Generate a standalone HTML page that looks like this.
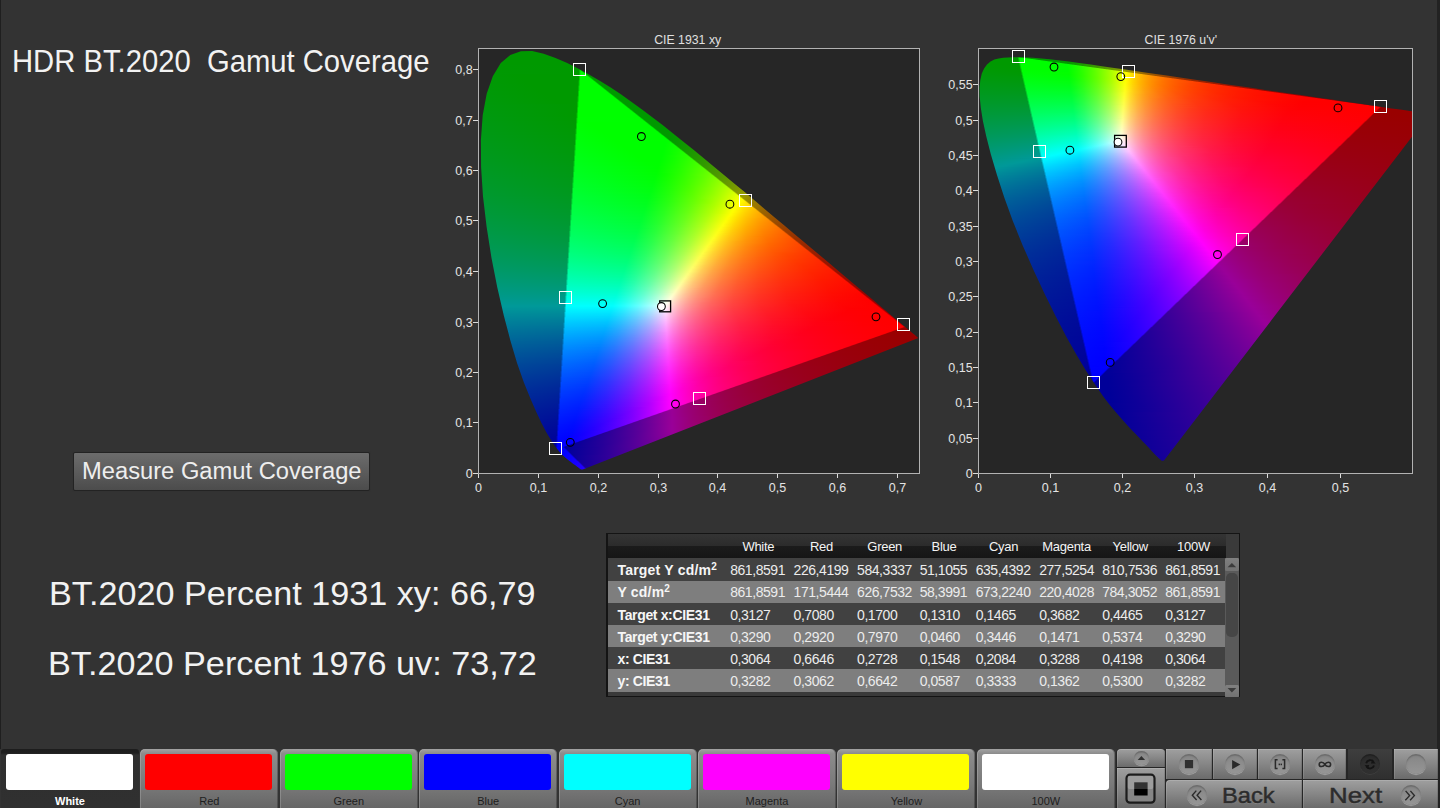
<!DOCTYPE html>
<html lang="en"><head><meta charset="utf-8"><title>HDR BT.2020 Gamut Coverage</title>
<style>
*{box-sizing:border-box;margin:0;padding:0}
html,body{width:1440px;height:808px;overflow:hidden;background:#333}
body{position:relative;font-family:"Liberation Sans",sans-serif;color:#f0f0f0}
.abs{position:absolute;white-space:nowrap}
.big{position:absolute;white-space:nowrap;color:#f2f2f2;transform-origin:0 0;line-height:1}
.plot{position:absolute;background:#262626;overflow:hidden;box-sizing:content-box;border:1px solid #b2b2b2}
.gm{position:absolute;left:0;top:0;width:100%;height:100%}
.gm i{display:block;height:1px}
svg.ov{position:absolute;left:0;top:0;width:1440px;height:808px;pointer-events:none}
svg.ov rect{fill:#dcdcdc}
svg.ov text{font-family:"Liberation Sans",sans-serif;font-size:12.5px;fill:#e4e4e4}
svg.ov text.tt{font-size:12.3px;fill:#e0e0e0}
svg.ov rect.ms{fill:none;stroke:#fff;stroke-width:1}
svg.ov rect.mk{fill:none;stroke:#000;stroke-width:1.3}
svg.ov circle.mc{fill:none;stroke:#000;stroke-width:1.05}
svg.ov circle.mw{fill:#fff;stroke:#000;stroke-width:1.05}
.btn{position:absolute;left:73px;top:452px;width:297px;height:39px;border:1.5px solid #232323;border-radius:2px;
 background:linear-gradient(#6c6c6c,#4c4c4c);box-shadow:0 0 1px #2a2a2a}
/* table */
.tb{position:absolute;left:606px;top:533px;width:634px;height:164px;background:#3a3a3a;border:1px solid #141414;border-left-width:2px}
.th{position:absolute;left:0;top:0;width:618px;height:24px;background:linear-gradient(#343434 0,#2c2c2c 48%,#1b1b1b 52%,#161616 100%)}
.tr{position:absolute;left:0;width:618px}
.tr.d{background:#414141}.tr.l{background:#7e7e7e}
.tb span{position:absolute;white-space:nowrap;font-size:14px;line-height:16px;color:#ececec;letter-spacing:-0.45px}
.tb span.h{font-size:13px;color:#f4f4f4;letter-spacing:-0.3px;transform:translateX(-50%);margin-top:1px}
.tb span.b{font-weight:bold;letter-spacing:-0.35px;color:#f6f6f6}
.tb sup{font-size:10px;line-height:0;vertical-align:5px}
.sb{position:absolute;left:617.3px;top:24px;width:13.5px;height:138.5px;background:#5a5a5a}
/* bottom bar */
.tab{position:absolute;top:749px;height:59px;width:138px;border-radius:5px 5px 0 0;
 background:linear-gradient(#a2a2a2 0,#8c8c8c 8%,#7a7a7a 60%,#666 100%);box-shadow:inset 1px 0 0 rgba(255,255,255,.18),inset -1px 0 0 rgba(0,0,0,.25)}
.tab.sel{background:linear-gradient(#1d1d1d 0,#1f1f1f 4px,#2f2f2f 6px,#303030 100%);box-shadow:none;border-radius:3px 3px 0 0}
.tab b{position:absolute;left:5px;top:5px;width:127px;height:36px;border-radius:3px;display:block}
.tab span{position:absolute;left:0;width:100%;top:46px;text-align:center;font-size:11px;line-height:12px;color:#1e1e1e}
.tab.sel span{color:#fff;font-weight:bold}
.cb{position:absolute;background:linear-gradient(#9f9f9f 0,#868686 50%,#6b6b6b 100%);box-shadow:inset 1px 0 0 rgba(255,255,255,.12),inset -1px 0 0 rgba(0,0,0,.12),inset 0 1px 0 rgba(255,255,255,.15);overflow:hidden}
.rd{position:absolute;border-radius:50%;background:linear-gradient(#858585,#969696);box-shadow:inset 0 1.5px 1.5px rgba(0,0,0,.22),0 1.2px 0.5px rgba(255,255,255,.28)}
.rd.dk{background:linear-gradient(#2b2b2b,#303030);box-shadow:inset 0 1.5px 1.5px rgba(0,0,0,.3),0 1px 0 rgba(255,255,255,.06)}
</style></head><body>
<div class="abs" style="left:0;top:0;width:1px;height:749px;background:#1f1f1f"></div>
<div class="abs" style="left:1437px;top:0;width:3px;height:808px;background:#222"></div>

<div class="big" id="t1" style="left:12.30px;top:45.3px;font-size:32.2px;transform:scaleX(0.9080)">HDR BT.2020&nbsp; Gamut Coverage</div>
<div class="btn"></div>
<div class="big" id="t2" style="left:81.85px;top:460.1px;font-size:23.1px;transform:scaleX(1.0272);color:#eee">Measure Gamut Coverage</div>
<div class="big" id="t3" style="left:48.50px;top:578.1px;font-size:32.5px;transform:scaleX(1.0517)">BT.2020 Percent 1931 xy: 66,79</div>
<div class="big" id="t4" style="left:48.49px;top:647.9px;font-size:32.5px;transform:scaleX(1.0527)">BT.2020 Percent 1976 uv: 73,72</div>

<div class="plot" style="left:478px;top:48px;width:440px;height:424px">
<div class="gm" style="clip-path:polygon(103.7px 420.5px,103.7px 420.5px,103.7px 420.5px,103.6px 420.5px,103.5px 420.5px,103.5px 420.5px,103.4px 420.5px,103.4px 420.5px,103.3px 420.6px,103.2px 420.6px,103.1px 420.6px,103.0px 420.6px,102.9px 420.6px,102.7px 420.6px,102.6px 420.6px,102.4px 420.6px,102.2px 420.5px,102.0px 420.4px,101.7px 420.2px,101.3px 420.0px,101.0px 419.8px,100.5px 419.4px,99.9px 419.1px,99.3px 418.6px,98.6px 418.1px,97.9px 417.5px,97.0px 416.8px,96.0px 416.0px,94.7px 415.2px,93.4px 414.2px,91.9px 413.1px,90.2px 411.8px,88.3px 410.3px,86.2px 408.5px,84.0px 406.4px,81.5px 403.9px,78.6px 400.4px,75.3px 396.0px,71.5px 390.3px,67.3px 383.2px,62.6px 374.3px,57.4px 363.3px,51.5px 349.8px,44.9px 333.6px,38.2px 314.4px,31.5px 292.0px,24.8px 266.6px,18.3px 238.4px,12.4px 208.4px,7.6px 177.7px,4.0px 147.4px,2.1px 118.3px,1.9px 91.1px,3.7px 66.3px,7.7px 44.8px,13.8px 27.2px,21.8px 14.1px,31.3px 5.9px,41.9px 2.2px,53.1px 2.1px,64.7px 4.8px,76.5px 9.0px,88.2px 14.1px,99.5px 19.7px,110.4px 25.7px,121.1px 32.0px,131.7px 38.6px,142.2px 45.6px,152.6px 52.9px,163.0px 60.4px,173.3px 68.2px,183.6px 76.1px,193.8px 84.2px,204.1px 92.5px,214.5px 100.8px,224.8px 109.2px,235.0px 117.7px,245.3px 126.2px,255.5px 134.7px,265.7px 143.1px,275.7px 151.6px,285.6px 159.9px,295.4px 168.2px,305.1px 176.3px,314.5px 184.2px,323.8px 192.0px,332.7px 199.5px,341.4px 206.8px,349.8px 213.8px,357.7px 220.5px,365.1px 226.7px,371.9px 232.5px,378.4px 237.9px,384.5px 243.1px,390.2px 247.8px,395.3px 252.0px,399.9px 255.9px,404.0px 259.4px,407.8px 262.6px,411.1px 265.4px,414.2px 267.9px,416.9px 270.2px,419.3px 272.2px,421.4px 274.0px,423.4px 275.7px,425.3px 277.2px,426.9px 278.6px,428.4px 279.9px,429.8px 281.1px,431.0px 282.1px,432.1px 283.0px,433.1px 283.8px,433.9px 284.5px,434.6px 285.1px,435.3px 285.6px,435.8px 286.1px,436.3px 286.5px,436.7px 286.8px,437.0px 287.1px,437.3px 287.3px,437.5px 287.6px,437.8px 287.7px,438.0px 287.9px,438.2px 288.1px,438.4px 288.3px,438.6px 288.4px,438.8px 288.6px,438.9px 288.7px,439.0px 288.8px,439.1px 288.9px,439.2px 288.9px,439.2px 289.0px,439.3px 289.0px,439.3px 289.0px)"><div style="height:1px"></div><i style="background:linear-gradient(90deg,#090 44px,#090 50px)"></i><i style="background:linear-gradient(90deg,#090 38px,#090 58px)"></i><i style="background:linear-gradient(90deg,#090 35px,#090 62px)"></i><i style="background:linear-gradient(90deg,#090 32px,#090 65px)"></i><i style="background:linear-gradient(90deg,#090 30px,#090 68px)"></i><i style="background:linear-gradient(90deg,#090 29px,#090 71px)"></i><i style="background:linear-gradient(90deg,#090 27px,#090 74px)"></i><i style="background:linear-gradient(90deg,#090 26px,#090 76px)"></i><i style="background:linear-gradient(90deg,#090 25px,#090 79px)"></i><i style="background:linear-gradient(90deg,#090 23px,#090 81px)"></i><i style="background:linear-gradient(90deg,#090 23px,#090 83px)"></i><i style="background:linear-gradient(90deg,#090 22px,#090 86px)"></i><i style="background:linear-gradient(90deg,#090 21px,#090 88px)"></i><i style="background:linear-gradient(90deg,#090 20px,#090 90px)"></i><i style="background:linear-gradient(90deg,#090 19px,#090 92px)"></i><i style="background:linear-gradient(90deg,#009901 18px,#090 94px)"></i><i style="background:linear-gradient(90deg,#009901 18px,#090 96px)"></i><i style="background:linear-gradient(90deg,#009901 17px,#090 98px)"></i><i style="background:linear-gradient(90deg,#009901 16px,#090 100px)"></i><i style="background:linear-gradient(90deg,#009901 16px,#090 100px,#00b000 101px,#00b000 102px)"></i><i style="background:linear-gradient(90deg,#009902 15px,#090 100px,#0d0 101px,#0d0 102px,#00a400 103px,#00a400 104px)"></i><i style="background:linear-gradient(90deg,#009902 15px,#090 100px,#0d0 101px,#0f0 102px,#00f400 103px,#00a400 104px,#090 105px,#090 106px)"></i><i style="background:linear-gradient(90deg,#009902 14px,#090 100px,#0d0 101px,#0f0 102px,#0f0 104px,#0b0 105px,#090 106px,#090 107px)"></i><i style="background:linear-gradient(90deg,#009903 14px,#090 100px,#0d0 101px,#0f0 102px,#0f0 105px,#00d200 106px,#090 107px,#090 109px)"></i><i style="background:linear-gradient(90deg,#009903 13px,#090 38px,#090 100px,#0d0 101px,#0f0 102px,#0f0 106px,#0d0 107px,#00a400 108px,#090 109px,#090 111px)"></i><i style="background:linear-gradient(90deg,#009903 13px,#090 39px,#090 100px,#0f0 101px,#0f0 107px,#00f400 108px,#00a400 109px,#090 110px,#090 113px)"></i><i style="background:linear-gradient(90deg,#009903 12px,#090 41px,#090 100px,#0f0 101px,#0f0 109px,#0b0 110px,#090 111px,#090 115px)"></i><i style="background:linear-gradient(90deg,#009904 12px,#090 42px,#090 100px,#0f0 101px,#0f0 110px,#00d200 111px,#090 112px,#090 116px)"></i><i style="background:linear-gradient(90deg,#009904 11px,#090 44px,#090 100px,#0f0 101px,#0f0 111px,#00e800 112px,#00a400 113px,#090 114px,#090 118px)"></i><i style="background:linear-gradient(90deg,#009904 11px,#090 45px,#090 100px,#0f0 101px,#0f0 112px,#00f400 113px,#00b000 114px,#090 115px,#090 120px)"></i><i style="background:linear-gradient(90deg,#009905 10px,#090 46px,#090 99px,#00b000 100px,#0f0 101px,#0f0 114px,#0b0 115px,#090 116px,#090 121px)"></i><i style="background:linear-gradient(90deg,#009905 10px,#090 48px,#090 99px,#0b0 100px,#0f0 101px,#0f0 115px,#0d0 116px,#090 117px,#090 123px)"></i><i style="background:linear-gradient(90deg,#009905 10px,#090 49px,#090 99px,#0b0 100px,#0f0 101px,#0f0 116px,#00e800 117px,#00a400 118px,#090 119px,#090 124px)"></i><i style="background:linear-gradient(90deg,#009905 9px,#090 51px,#090 99px,#0b0 100px,#0f0 101px,#0f0 117px,#00f400 118px,#00b000 119px,#090 120px,#090 126px)"></i><i style="background:linear-gradient(90deg,#009906 9px,#090 52px,#090 99px,#0b0 100px,#0f0 101px,#0f0 119px,#0b0 120px,#090 121px,#090 128px)"></i><i style="background:linear-gradient(90deg,#009906 9px,#090 54px,#090 99px,#00c600 100px,#0f0 101px,#0f0 120px,#0d0 121px,#090 122px,#090 129px)"></i><i style="background:linear-gradient(90deg,#009906 8px,#090 55px,#090 99px,#0d0 100px,#0f0 101px,#0f0 121px,#00f400 122px,#00a400 123px,#090 124px,#090 131px)"></i><i style="background:linear-gradient(90deg,#009906 8px,#090 57px,#090 99px,#0d0 100px,#0f0 101px,#0f0 122px,#00f400 123px,#0b0 124px,#090 125px,#090 132px)"></i><i style="background:linear-gradient(90deg,#009907 8px,#090 58px,#090 99px,#0d0 100px,#0f0 101px,#0f0 124px,#00c600 125px,#090 126px,#090 134px)"></i><i style="background:linear-gradient(90deg,#009907 7px,#090 59px,#090 99px,#0d0 100px,#0f0 101px,#0f0 125px,#0d0 126px,#090 127px,#090 135px)"></i><i style="background:linear-gradient(90deg,#009907 7px,#090 61px,#090 99px,#0d0 100px,#0f0 101px,#0f0 126px,#00f400 127px,#00a400 128px,#090 129px,#090 137px)"></i><i style="background:linear-gradient(90deg,#009908 7px,#090 62px,#090 99px,#0f0 100px,#0f0 127px,#00f400 128px,#0b0 129px,#090 130px,#090 138px)"></i><i style="background:linear-gradient(90deg,#009908 7px,#090 64px,#090 99px,#0f0 100px,#0f0 129px,#00c600 130px,#090 131px,#090 140px)"></i><i style="background:linear-gradient(90deg,#009908 6px,#090 65px,#090 99px,#0f0 100px,#0f0 130px,#0d0 131px,#090 132px,#090 141px)"></i><i style="background:linear-gradient(90deg,#009908 6px,#090 67px,#090 99px,#0f0 100px,#0f0 131px,#00f400 132px,#00a400 133px,#090 134px,#090 143px)"></i><i style="background:linear-gradient(90deg,#009909 6px,#090 68px,#090 99px,#0f0 100px,#0f0 133px,#0b0 134px,#090 135px,#090 144px)"></i><i style="background:linear-gradient(90deg,#009909 6px,#090 70px,#090 98px,#00b000 99px,#0f0 100px,#0f0 134px,#00d200 135px,#090 136px,#090 146px)"></i><i style="background:linear-gradient(90deg,#009909 5px,#090 71px,#090 98px,#0b0 99px,#0f0 100px,#0f0 135px,#0d0 136px,#00a400 137px,#090 138px,#090 147px)"></i><i style="background:linear-gradient(90deg,#00990a 5px,#090 72px,#090 98px,#0b0 99px,#0f0 100px,#0f0 136px,#00f400 137px,#00a400 138px,#090 139px,#090 149px)"></i><i style="background:linear-gradient(90deg,#00990a 5px,#090 74px,#090 98px,#0b0 99px,#0f0 100px,#0f0 138px,#0b0 139px,#090 140px,#090 150px)"></i><i style="background:linear-gradient(90deg,#00990a 5px,#090 75px,#090 98px,#0b0 99px,#0f0 100px,#0f0 139px,#00d200 140px,#090 141px,#090 151px)"></i><i style="background:linear-gradient(90deg,#00990a 5px,#090 77px,#090 98px,#00c600 99px,#0f0 100px,#0f0 140px,#0d0 141px,#00a400 142px,#090 143px,#090 153px)"></i><i style="background:linear-gradient(90deg,#00990b 4px,#090 78px,#090 98px,#0d0 99px,#0f0 100px,#0f0 141px,#00f400 142px,#00b000 143px,#090 144px,#090 154px)"></i><i style="background:linear-gradient(90deg,#00990b 4px,#090 79px,#090 98px,#0d0 99px,#0f0 100px,#0f0 143px,#0b0 144px,#090 145px,#090 156px)"></i><i style="background:linear-gradient(90deg,#00990b 4px,#090 98px,#0d0 99px,#0f0 100px,#0f0 144px,#0d0 145px,#090 146px,#090 157px)"></i><i style="background:linear-gradient(90deg,#00990c 4px,#090 98px,#0d0 99px,#0f0 100px,#0f0 145px,#00e800 146px,#00a400 147px,#090 148px,#090 158px)"></i><i style="background:linear-gradient(90deg,#00990c 4px,#090 98px,#0d0 99px,#0f0 100px,#0f0 146px,#00f400 147px,#00b000 148px,#090 149px,#090 160px)"></i><i style="background:linear-gradient(90deg,#00990c 3px,#090 98px,#00f400 99px,#0f0 100px,#0f0 148px,#0b0 149px,#090 150px,#090 161px)"></i><i style="background:linear-gradient(90deg,#00990d 3px,#090 98px,#0f0 99px,#0f0 149px,#0d0 150px,#090 151px,#090 162px)"></i><i style="background:linear-gradient(90deg,#00990d 3px,#090 98px,#0f0 99px,#0f0 150px,#00e800 151px,#00a400 152px,#090 153px,#090 164px)"></i><i style="background:linear-gradient(90deg,#00990d 3px,#090 98px,#0f0 99px,#0f0 151px,#00f400 152px,#0b0 153px,#090 154px,#090 165px)"></i><i style="background:linear-gradient(90deg,#00990e 3px,#090 98px,#0f0 99px,#0f0 153px,#00c600 154px,#090 155px,#090 167px)"></i><i style="background:linear-gradient(90deg,#00990e 3px,#090 97px,#00a400 98px,#0f0 99px,#0f0 154px,#0d0 155px,#090 156px,#090 168px)"></i><i style="background:linear-gradient(90deg,#00990e 3px,#090 97px,#0b0 98px,#0f0 99px,#0f0 155px,#00f400 156px,#00a400 157px,#090 158px,#090 169px)"></i><i style="background:linear-gradient(90deg,#00990f 2px,#090 97px,#0b0 98px,#0f0 99px,#0f0 156px,#00f400 157px,#0b0 158px,#090 159px,#090 171px)"></i><i style="background:linear-gradient(90deg,#00990f 2px,#090 97px,#0b0 98px,#0f0 99px,#0f0 158px,#00c600 159px,#090 160px,#090 172px)"></i><i style="background:linear-gradient(90deg,#00990f 2px,#090 97px,#0b0 98px,#0f0 99px,#0f0 159px,#0d0 160px,#090 161px,#090 173px)"></i><i style="background:linear-gradient(90deg,#009910 2px,#009901 97px,#00bb01 98px,#00ff01 99px,#0f0 160px,#00f400 161px,#00a400 162px,#090 163px,#090 174px)"></i><i style="background:linear-gradient(90deg,#009910 2px,#009901 97px,#00dd01 98px,#00ff01 99px,#0f0 161px,#00f400 162px,#0b0 163px,#090 164px,#090 176px)"></i><i style="background:linear-gradient(90deg,#009910 2px,#009901 97px,#00dd01 98px,#00ff01 99px,#0f0 163px,#00d200 164px,#090 165px,#090 177px)"></i><i style="background:linear-gradient(90deg,#009910 2px,#009901 97px,#00dd02 98px,#00ff02 99px,#0f0 164px,#0d0 165px,#00a400 166px,#090 167px,#090 178px)"></i><i style="background:linear-gradient(90deg,#091 2px,#009902 97px,#00dd02 98px,#00ff02 99px,#0f0 165px,#00f400 166px,#00a400 167px,#090 168px,#090 180px)"></i><i style="background:linear-gradient(90deg,#091 2px,#009902 97px,#00dd02 98px,#00ff02 99px,#0f0 110px,#0f0 167px,#0b0 168px,#090 169px,#090 181px)"></i><i style="background:linear-gradient(90deg,#009912 1px,#009902 97px,#00f403 98px,#00ff03 99px,#0f0 111px,#0f0 168px,#00d200 169px,#090 170px,#090 182px)"></i><i style="background:linear-gradient(90deg,#009912 1px,#009902 97px,#00ff04 98px,#0f0 113px,#0f0 169px,#0d0 170px,#00a400 171px,#090 172px,#090 184px)"></i><i style="background:linear-gradient(90deg,#009912 1px,#009903 97px,#00ff04 98px,#0f0 114px,#0f0 170px,#00f400 171px,#00a400 172px,#090 173px,#090 185px)"></i><i style="background:linear-gradient(90deg,#009913 1px,#009903 97px,#00ff04 98px,#0f0 115px,#0f0 172px,#0b0 173px,#090 174px,#090 186px)"></i><i style="background:linear-gradient(90deg,#009913 1px,#009903 97px,#00ff05 98px,#0f0 117px,#0f0 173px,#0d0 174px,#090 175px,#090 187px)"></i><i style="background:linear-gradient(90deg,#009913 1px,#009904 96px,#00a404 97px,#00ff05 98px,#0f0 118px,#0f0 174px,#00e800 175px,#00a400 176px,#090 177px,#090 189px)"></i><i style="background:linear-gradient(90deg,#009913 1px,#009904 96px,#00bb04 97px,#00ff06 98px,#0f0 120px,#0f0 175px,#00f400 176px,#00b000 177px,#090 178px,#090 190px)"></i><i style="background:linear-gradient(90deg,#009914 1px,#009904 96px,#00bb05 97px,#00ff06 98px,#0f0 121px,#0f0 177px,#0b0 178px,#090 179px,#090 191px)"></i><i style="background:linear-gradient(90deg,#009914 1px,#009904 96px,#00bb05 97px,#00ff07 98px,#0f0 123px,#0f0 178px,#0d0 179px,#090 180px,#090 192px)"></i><i style="background:linear-gradient(90deg,#009915 1px,#009905 96px,#00bb06 97px,#00ff07 98px,#0f0 124px,#0f0 179px,#00e800 180px,#00a400 181px,#090 182px,#029900 194px)"></i><i style="background:linear-gradient(90deg,#009915 1px,#009905 96px,#00bb06 97px,#00ff08 98px,#0f0 126px,#0f0 180px,#00f400 181px,#00b000 182px,#090 183px,#039900 195px)"></i><i style="background:linear-gradient(90deg,#009915 1px,#009905 96px,#00dd07 97px,#00ff08 98px,#0f0 127px,#0f0 182px,#0b0 183px,#090 184px,#049900 196px)"></i><i style="background:linear-gradient(90deg,#009916 1px,#009906 96px,#00dd08 97px,#00ff09 98px,#0f0 129px,#0f0 183px,#0d0 184px,#090 185px,#059900 197px)"></i><i style="background:linear-gradient(90deg,#009916 1px,#009906 96px,#00dd08 97px,#00ff09 98px,#0f0 130px,#0f0 184px,#00f400 185px,#00a400 186px,#090 187px,#079900 199px)"></i><i style="background:linear-gradient(90deg,#009916 1px,#009906 96px,#00dd09 97px,#00ff0a 98px,#0f0 132px,#0f0 185px,#00f400 186px,#0b0 187px,#090 188px,#089900 200px)"></i><i style="background:linear-gradient(90deg,#009917 1px,#009907 96px,#00dd09 97px,#00ff0a 98px,#0f0 133px,#0f0 187px,#00c600 188px,#090 189px,#099900 201px)"></i><i style="background:linear-gradient(90deg,#009917 1px,#009907 96px,#00e80a 97px,#00ff0b 98px,#0f0 134px,#0f0 188px,#01dd00 189px,#019900 190px,#0a9900 202px)"></i><i style="background:linear-gradient(90deg,#009917 1px,#009907 96px,#00ff0c 97px,#0f0 136px,#01ff00 189px,#02f400 190px,#02a400 191px,#039900 192px,#0d9900 204px)"></i><i style="background:linear-gradient(90deg,#009918 1px,#009907 96px,#00ff0c 97px,#0f0 137px,#0f0 187px,#03ff00 190px,#04f400 191px,#04bb00 192px,#049900 193px,#0e9900 205px)"></i><i style="background:linear-gradient(90deg,#009918 0px,#009908 96px,#00ff0d 97px,#0f0 139px,#0f0 187px,#06ff00 192px,#06c600 193px,#059900 194px,#0f9900 206px)"></i><i style="background:linear-gradient(90deg,#009919 0px,#009908 96px,#00ff0d 97px,#0f0 140px,#0f0 187px,#08ff00 193px,#08dd00 194px,#07a400 195px,#079900 196px,#190 207px)"></i><i style="background:linear-gradient(90deg,#009919 0px,#009908 96px,#00ff0e 97px,#0f0 142px,#0f0 186px,#0aff00 194px,#0bf400 195px,#08a400 196px,#089900 197px,#139900 209px)"></i><i style="background:linear-gradient(90deg,#009919 0px,#009909 95px,#00bb0b 96px,#00ff0e 97px,#0f0 143px,#0f0 186px,#0dff00 196px,#0bbb00 197px,#0a9900 198px,#159900 210px)"></i><i style="background:linear-gradient(90deg,#00991a 0px,#009909 95px,#00bb0b 96px,#00ff0f 97px,#0f0 145px,#0f0 186px,#0fff00 197px,#0ed200 198px,#0b9900 199px,#169900 211px)"></i><i style="background:linear-gradient(90deg,#00991a 0px,#00990a 95px,#00bb0c 96px,#00ff10 97px,#0f0 146px,#0f0 185px,#1f0 198px,#10dd00 199px,#0da400 200px,#0d9900 201px,#189900 212px)"></i><i style="background:linear-gradient(90deg,#00991a 0px,#00990a 95px,#00bb0c 96px,#00ff10 97px,#0f0 148px,#0f0 185px,#14ff00 199px,#14f400 200px,#0fa400 201px,#0f9900 202px,#1a9900 214px)"></i><i style="background:linear-gradient(90deg,#00991b 0px,#00990a 95px,#00bb0c 96px,#0f1 97px,#0f0 149px,#0f0 185px,#18ff00 201px,#12bb00 202px,#109900 203px,#1c9900 215px)"></i><i style="background:linear-gradient(90deg,#00991b 0px,#00990b 95px,#00d20e 96px,#0f1 97px,#0f0 150px,#0f0 184px,#1aff00 202px,#17d200 203px,#129900 204px,#1e9900 216px)"></i><i style="background:linear-gradient(90deg,#00991c 0px,#00990b 95px,#00dd10 96px,#00ff12 97px,#0f0 152px,#0f0 184px,#1cff00 203px,#1be800 204px,#14a400 205px,#149900 206px,#1f9900 217px)"></i><i style="background:linear-gradient(90deg,#00991c 0px,#00990b 95px,#00dd10 96px,#00ff12 97px,#0f0 153px,#0f0 184px,#1fff00 204px,#1ff400 205px,#18b000 206px,#169900 207px,#290 219px)"></i><i style="background:linear-gradient(90deg,#00991c 0px,#00990c 95px,#0d1 96px,#00ff13 97px,#0f0 155px,#0f0 183px,#0aff00 191px,#23ff00 206px,#1bbb00 207px,#179900 208px,#249900 220px)"></i><i style="background:linear-gradient(90deg,#00991d 0px,#00990c 95px,#0d1 96px,#00ff14 97px,#0f0 156px,#0f0 183px,#0cff00 192px,#26ff00 207px,#2d0 208px,#199900 209px,#269900 221px)"></i><i style="background:linear-gradient(90deg,#00991d 0px,#00990d 95px,#00e813 96px,#00ff14 97px,#0f0 158px,#0f0 183px,#28ff00 208px,#26e800 209px,#1ca400 210px,#1b9900 211px,#279900 222px)"></i><i style="background:linear-gradient(90deg,#00991e 0px,#00990d 95px,#00ff15 96px,#0f0 159px,#0f0 183px,#2bff00 209px,#2bf400 210px,#20b000 211px,#1d9900 212px,#299900 223px)"></i><i style="background:linear-gradient(90deg,#00991e 0px,#00990d 95px,#00ff16 96px,#0f0 160px,#0f0 182px,#1f0 194px,#2fff00 211px,#24bb00 212px,#1f9900 213px,#2c9900 225px)"></i><i style="background:linear-gradient(90deg,#00991e 0px,#00990e 95px,#00ff17 96px,#0f0 162px,#0f0 182px,#13ff00 195px,#32ff00 212px,#2ddd00 213px,#209900 214px,#2e9900 226px)"></i><i style="background:linear-gradient(90deg,#00991f 0px,#00990e 95px,#00ff17 96px,#0f0 163px,#0f0 182px,#16ff00 196px,#35ff00 213px,#32e800 214px,#25a400 215px,#239900 216px,#309900 227px)"></i><i style="background:linear-gradient(90deg,#00991f 1px,#00990e 95px,#00ff18 96px,#0f0 165px,#0f0 181px,#14ff00 195px,#38ff00 214px,#37f400 215px,#2cbb00 216px,#259900 217px,#329900 228px)"></i><i style="background:linear-gradient(90deg,#00991f 1px,#00990f 94px,#00bb12 95px,#00ff18 96px,#0f0 166px,#0f0 181px,#17ff00 196px,#3dff00 216px,#31c600 217px,#279900 218px,#349900 229px)"></i><i style="background:linear-gradient(90deg,#009920 1px,#00990f 94px,#00bb13 95px,#00ff19 96px,#00ff01 167px,#0f0 181px,#19ff00 197px,#40ff00 217px,#39dd00 218px,#299900 219px,#379900 231px)"></i><i style="background:linear-gradient(90deg,#009920 1px,#009910 94px,#00bb13 95px,#00ff1a 96px,#00ff01 168px,#0f0 180px,#18ff00 196px,#43ff00 218px,#42f400 219px,#2ea400 220px,#2c9900 221px,#399900 232px)"></i><i style="background:linear-gradient(90deg,#009921 1px,#009910 94px,#00bb14 95px,#00ff1a 96px,#00ff01 169px,#0f0 180px,#1bff00 197px,#46ff00 219px,#45f400 220px,#37bb00 221px,#2e9900 222px,#3c9900 233px)"></i><i style="background:linear-gradient(90deg,#009921 1px,#091 94px,#00bb14 95px,#00ff1b 96px,#00ff01 170px,#0f0 180px,#1fff00 199px,#4bff00 221px,#3cc600 222px,#309900 223px,#3e9900 234px)"></i><i style="background:linear-gradient(90deg,#092 1px,#091 94px,#00d217 95px,#00ff1c 96px,#0f0 179px,#1eff00 198px,#4fff00 222px,#46dd00 223px,#329900 224px,#419900 236px)"></i><i style="background:linear-gradient(90deg,#092 1px,#009912 94px,#00dd19 95px,#00ff1d 96px,#0f0 179px,#20ff00 199px,#52ff00 223px,#51f400 224px,#38a400 225px,#359900 226px,#490 237px)"></i><i style="background:linear-gradient(90deg,#009923 1px,#009912 94px,#00dd1a 95px,#00ff1d 96px,#0f0 179px,#23ff00 200px,#58ff00 225px,#42bb00 226px,#379900 227px,#469900 238px)"></i><i style="background:linear-gradient(90deg,#009923 1px,#009912 94px,#00dd1a 95px,#00ff1e 96px,#01ff00 179px,#26ff00 201px,#5bff00 226px,#4dd200 227px,#3a9900 228px,#489900 239px)"></i><i style="background:linear-gradient(90deg,#009923 1px,#009913 94px,#00dd1b 95px,#00ff1f 96px,#00ff01 178px,#25ff00 200px,#5fff00 227px,#54dd00 228px,#40a400 229px,#3d9900 230px,#4b9900 240px)"></i><i style="background:linear-gradient(90deg,#009924 1px,#009913 94px,#00dd1b 95px,#00ff1f 96px,#00ff01 178px,#27ff00 201px,#62ff00 228px,#60f400 229px,#42a400 230px,#3f9900 231px,#4f9900 242px)"></i><i style="background:linear-gradient(90deg,#009924 1px,#009914 94px,#00ff20 95px,#01ff02 178px,#2aff00 202px,#68ff00 230px,#4ebb00 231px,#429900 232px,#519900 243px)"></i><i style="background:linear-gradient(90deg,#009925 1px,#009914 94px,#00ff21 95px,#00ff03 177px,#0fff00 187px,#2bff00 202px,#6cff00 231px,#5bd200 232px,#490 233px,#549900 244px)"></i><i style="background:linear-gradient(90deg,#009925 1px,#009915 94px,#0f2 95px,#00ff03 177px,#1f0 188px,#2eff00 203px,#70ff00 232px,#63dd00 233px,#4ba400 234px,#489900 235px,#569900 245px)"></i><i style="background:linear-gradient(90deg,#009926 1px,#009915 94px,#00ff23 95px,#01ff04 177px,#12ff00 188px,#2fff00 203px,#74ff00 233px,#71f400 234px,#53b000 235px,#4a9900 236px,#599900 246px)"></i><i style="background:linear-gradient(90deg,#009926 1px,#009915 94px,#00ff23 95px,#00ff05 176px,#11ff01 187px,#30ff00 203px,#53ff00 219px,#7bff00 235px,#5cbb00 236px,#4d9900 237px,#5d9900 248px)"></i><i style="background:linear-gradient(90deg,#009927 1px,#009916 93px,#00b019 94px,#00ff24 95px,#00ff06 176px,#19ff00 191px,#3f0 204px,#56ff00 220px,#7fff00 236px,#70dd00 237px,#4f9900 238px,#609900 249px)"></i><i style="background:linear-gradient(90deg,#009927 1px,#009917 93px,#00bb1b 94px,#00ff25 95px,#01ff06 176px,#1cff00 192px,#36ff00 205px,#5aff00 221px,#83ff00 237px,#7ae800 238px,#58a400 239px,#539900 240px,#639900 250px)"></i><i style="background:linear-gradient(90deg,#009928 1px,#009917 93px,#00bb1c 94px,#00ff26 95px,#00ff07 175px,#15ff02 188px,#37ff00 205px,#5eff00 222px,#87ff00 238px,#84f400 239px,#61b000 240px,#569900 241px,#659900 251px)"></i><i style="background:linear-gradient(90deg,#009928 1px,#009918 93px,#00bb1d 94px,#00ff27 95px,#00ff08 175px,#17ff02 189px,#3aff00 206px,#61ff00 223px,#8eff00 240px,#6abb00 241px,#599900 242px,#689900 252px)"></i><i style="background:linear-gradient(90deg,#009929 1px,#009918 93px,#00bb1d 94px,#00ff27 95px,#01ff09 175px,#18ff03 189px,#3dff00 207px,#65ff00 224px,#92ff00 241px,#81dd00 242px,#5b9900 243px,#6d9900 254px)"></i><i style="background:linear-gradient(90deg,#009929 2px,#009919 93px,#00c620 94px,#00ff28 95px,#01ff09 175px,#1bff03 190px,#3eff00 207px,#69ff00 225px,#97ff00 242px,#8ce800 243px,#65a400 244px,#609900 245px,#709900 255px)"></i><i style="background:linear-gradient(90deg,#009929 2px,#009919 93px,#00dd24 94px,#00ff29 95px,#00ff0b 174px,#1aff04 189px,#3fff00 207px,#6aff00 225px,#9cff00 243px,#97f400 244px,#6fb000 245px,#639900 246px,#739900 256px)"></i><i style="background:linear-gradient(90deg,#00992a 2px,#009919 93px,#00dd25 94px,#00ff2a 95px,#01ff0b 174px,#1aff05 189px,#42ff00 208px,#71ff00 227px,#a3ff00 245px,#81c600 246px,#659900 247px,#769900 257px)"></i><i style="background:linear-gradient(90deg,#00992a 2px,#00991a 93px,#00dd25 94px,#00ff2b 95px,#01ff0c 174px,#1dff05 190px,#46ff00 209px,#75ff00 228px,#a8ff00 246px,#94dd00 247px,#689900 248px,#799900 258px)"></i><i style="background:linear-gradient(90deg,#00992b 2px,#00991a 93px,#00dd26 94px,#00ff2b 95px,#00ff0d 173px,#1cff06 189px,#47ff00 209px,#76ff00 228px,#adff00 247px,#a8f400 248px,#73a400 249px,#6d9900 250px,#7f9900 260px)"></i><i style="background:linear-gradient(90deg,#00992b 2px,#00991b 93px,#00dd27 94px,#00ff2c 95px,#01ff0e 173px,#1fff07 190px,#4aff00 210px,#7bff00 229px,#b2ff00 248px,#adf400 249px,#87bb00 250px,#709900 251px,#829900 261px)"></i><i style="background:linear-gradient(90deg,#00992c 2px,#00991c 93px,#00ff2e 94px,#01ff0f 173px,#1fff07 190px,#4eff00 211px,#82ff00 231px,#baff00 250px,#93c600 251px,#739900 252px,#859900 262px)"></i><i style="background:linear-gradient(90deg,#00992c 2px,#00991c 93px,#00ff2e 94px,#00ff10 172px,#20ff08 190px,#4fff00 211px,#83ff00 231px,#bfff00 251px,#a9dd00 252px,#790 253px,#899900 263px)"></i><i style="background:linear-gradient(90deg,#00992d 2px,#00991d 93px,#00ff2f 94px,#01ff11 172px,#21ff09 190px,#50ff00 211px,#8f0 232px,#c5ff00 252px,#bff400 253px,#83a400 254px,#7c9900 255px,#8c9900 264px)"></i><i style="background:linear-gradient(90deg,#00992e 2px,#00991d 93px,#00ff30 94px,#01ff11 172px,#22ff0a 190px,#54ff00 212px,#8cff00 233px,#caff00 253px,#c4f400 254px,#9b0 255px,#7f9900 256px,#929900 266px)"></i><i style="background:linear-gradient(90deg,#00992e 2px,#00991e 93px,#00ff31 94px,#02ff12 172px,#25ff0a 191px,#58ff00 213px,#91ff00 234px,#d3ff00 255px,#b0d200 256px,#839900 257px,#969900 267px)"></i><i style="background:linear-gradient(90deg,#00992f 2px,#00991e 92px,#00b023 93px,#00ff32 94px,#01ff14 171px,#24ff0b 190px,#59ff01 213px,#95ff00 235px,#d9ff00 256px,#bfdd00 257px,#90a400 258px,#890 259px,#979900 266px,#999800 268px)"></i><i style="background:linear-gradient(90deg,#00992f 3px,#00991f 92px,#00bb26 93px,#0f3 94px,#00ff15 170px,#22ff0c 189px,#5aff01 213px,#97ff00 235px,#dfff00 257px,#d8f400 258px,#94a400 259px,#8c9900 260px,#990 266px,#999500 269px)"></i><i style="background:linear-gradient(90deg,#00992f 3px,#00991f 92px,#00bb26 93px,#00ff34 94px,#00ff16 170px,#25ff0d 190px,#5eff02 214px,#9fff00 237px,#e8ff00 259px,#adbb00 260px,#909900 261px,#989900 265px,#999100 270px)"></i><i style="background:linear-gradient(90deg,#009930 3px,#009920 92px,#00bb27 93px,#00ff35 94px,#01ff17 170px,#28ff0d 191px,#62ff02 215px,#a4ff00 238px,#ef0 260px,#c7d200 261px,#939900 262px,#999800 265px,#998c00 272px)"></i><i style="background:linear-gradient(90deg,#009931 3px,#009921 92px,#00bb28 93px,#00ff36 94px,#00ff18 169px,#0dff14 177px,#27ff0e 190px,#63ff03 215px,#a9ff00 239px,#f4ff00 261px,#d7dd00 262px,#a2a400 263px,#990 264px,#980 273px)"></i><i style="background:linear-gradient(90deg,#009931 3px,#009921 92px,#00c62b 93px,#00ff37 94px,#00ff19 169px,#2aff0f 191px,#67ff03 216px,#aeff00 240px,#fbff00 262px,#f3f300 263px,#a4a200 264px,#999500 265px,#998500 274px)"></i><i style="background:linear-gradient(90deg,#009932 3px,#092 92px,#00dd30 93px,#00ff37 94px,#01ff1a 169px,#2bff0f 191px,#69ff04 216px,#7fff00 224px,#b0ff00 240px,#fdff00 262px,#fff900 264px,#bbb400 265px,#999100 266px,#998200 275px)"></i><i style="background:linear-gradient(90deg,#009932 3px,#092 92px,#00dd31 93px,#00ff38 94px,#00ff1b 168px,#0dff17 176px,#28ff11 189px,#65ff05 214px,#84ff00 225px,#acff00 238px,#fcff00 261px,#fff300 265px,#d2c500 266px,#998e00 267px,#997f00 276px)"></i><i style="background:linear-gradient(90deg,#093 3px,#009923 92px,#00dd32 93px,#00ff39 94px,#00ff1c 168px,#28ff12 189px,#66ff06 214px,#8bff00 227px,#aeff00 238px,#fbff00 260px,#fefe00 261px,#ffed00 266px,#e8d500 267px,#a49400 268px,#980 269px,#997a00 278px)"></i><i style="background:linear-gradient(90deg,#093 3px,#009923 92px,#0d3 93px,#00ff3a 94px,#01ff1d 168px,#29ff13 189px,#68ff07 214px,#90ff00 228px,#adff00 237px,#faff00 259px,#fffc00 261px,#ffe700 267px,#f4da00 268px,#b09b00 269px,#998500 270px,#970 279px)"></i><i style="background:linear-gradient(90deg,#009934 3px,#009924 92px,#00dd34 93px,#00ff3b 94px,#00ff1e 167px,#0dff1b 175px,#28ff14 188px,#66ff08 213px,#95ff00 229px,#afff00 237px,#fdff00 259px,#ffde00 269px,#bba100 270px,#998200 271px,#997400 280px)"></i><i style="background:linear-gradient(90deg,#009934 4px,#009925 92px,#00f43a 93px,#00ff3c 94px,#00ff1f 167px,#29ff15 188px,#68ff09 213px,#adff00 236px,#fcff00 258px,#fffb00 260px,#ffd900 270px,#ddb900 271px,#997e00 272px,#997200 281px)"></i><i style="background:linear-gradient(90deg,#009935 4px,#009925 92px,#00ff3e 93px,#01ff20 167px,#2aff16 188px,#67ff0a 212px,#acff00 235px,#fbff00 257px,#fffc00 259px,#ffd300 271px,#e8be00 272px,#a48500 273px,#997a00 274px,#996f00 282px)"></i><i style="background:linear-gradient(90deg,#009936 4px,#009926 92px,#00ff3f 93px,#01ff21 167px,#2bff17 188px,#68ff0b 212px,#aeff00 235px,#fdff00 257px,#ffce00 272px,#f4c200 273px,#b08a00 274px,#970 275px,#996b00 284px)"></i><i style="background:linear-gradient(90deg,#009936 4px,#009926 92px,#00ff40 93px,#00ff23 166px,#2aff19 187px,#67ff0d 211px,#adff01 234px,#fcff00 256px,#fffe00 257px,#ffe100 265px,#ffc700 274px,#bb9000 275px,#997400 276px,#996800 285px)"></i><i style="background:linear-gradient(90deg,#009937 4px,#009927 92px,#00ff41 93px,#01ff24 166px,#2bff1a 187px,#68ff0e 211px,#afff02 234px,#fbff00 255px,#fffb00 257px,#ffdc00 266px,#ffc200 275px,#dda600 276px,#997100 277px,#960 286px)"></i><i style="background:linear-gradient(90deg,#009937 4px,#009928 91px,#00a42b 92px,#00ff42 93px,#01ff25 166px,#2cff1b 187px,#6aff0e 211px,#aeff03 233px,#feff00 255px,#ffd900 266px,#ffbd00 276px,#f4b200 277px,#a47700 278px,#996d00 279px,#996400 287px)"></i><i style="background:linear-gradient(90deg,#009938 4px,#009929 91px,#00bb31 92px,#00ff43 93px,#00ff26 165px,#10ff22 174px,#2aff1c 186px,#68ff10 210px,#b0ff04 233px,#cf0 241px,#fdff00 254px,#ffd700 266px,#ffb900 277px,#f4ae00 278px,#bb8400 279px,#996a00 280px,#996100 288px)"></i><i style="background:linear-gradient(90deg,#009939 4px,#009929 91px,#00bb32 92px,#0f4 93px,#01ff27 165px,#29ff1e 185px,#67ff11 209px,#afff05 232px,#d2ff00 242px,#fcff00 253px,#fffa00 255px,#ffd200 267px,#ffb200 279px,#c68800 280px,#996800 281px,#995f00 289px)"></i><i style="background:linear-gradient(90deg,#009939 4px,#00992a 91px,#0b3 92px,#00ff45 93px,#01ff28 165px,#2cff1e 186px,#68ff12 209px,#adff06 231px,#d8ff00 243px,#fbff00 252px,#fffb00 254px,#ffd200 266px,#ffae00 280px,#dd9400 281px,#996500 282px,#995c00 291px)"></i><i style="background:linear-gradient(90deg,#00993a 5px,#00992b 91px,#00bb34 92px,#00ff46 93px,#00ff2a 164px,#28ff20 184px,#67ff14 208px,#acff08 230px,#deff00 244px,#fdff00 252px,#ffd000 266px,#ffa900 281px,#f4a000 282px,#a46a00 283px,#996200 284px,#995900 292px)"></i><i style="background:linear-gradient(90deg,#00993a 5px,#00992b 91px,#00bb35 92px,#00ff47 93px,#01ff2b 164px,#29ff21 184px,#69ff15 208px,#aeff09 230px,#fcff00 251px,#fffe00 252px,#ffe400 259px,#ffcb00 267px,#ffa500 282px,#f49c00 283px,#bb7600 284px,#995f00 285px,#995700 293px)"></i><i style="background:linear-gradient(90deg,#00993b 5px,#00992c 91px,#00dd3f 92px,#00ff48 93px,#01ff2c 164px,#2aff22 184px,#67ff17 207px,#adff0a 229px,#fbff00 250px,#fffb00 252px,#ffde00 260px,#ffc600 268px,#ff9f00 284px,#c67a00 285px,#995d00 286px,#950 294px)"></i><i style="background:linear-gradient(90deg,#00993c 5px,#00992d 91px,#00dd40 92px,#00ff4a 93px,#00ff2e 163px,#29ff24 183px,#66ff18 206px,#abff0c 228px,#feff00 250px,#ffdf00 259px,#ffc600 267px,#ff9c00 285px,#dd8500 286px,#a46200 287px,#995a00 288px,#995300 295px)"></i><i style="background:linear-gradient(90deg,#00993c 5px,#00992d 91px,#00dd41 92px,#00ff4b 93px,#01ff2f 163px,#2aff25 183px,#67ff19 206px,#aeff0d 228px,#fdff01 249px,#ffdc00 259px,#ffc400 267px,#ff9800 286px,#f48f00 287px,#a45f00 288px,#995800 289px,#995000 297px)"></i><i style="background:linear-gradient(90deg,#00993d 5px,#00992e 91px,#00dd42 92px,#00ff4c 93px,#01ff30 163px,#2bff26 183px,#69ff1a 206px,#b0ff0e 228px,#fcff02 248px,#fffa01 250px,#ffda00 259px,#ffbf00 268px,#ffa700 278px,#ff9200 288px,#bb6a00 289px,#995600 290px,#994f00 298px)"></i><i style="background:linear-gradient(90deg,#00993e 5px,#00992f 91px,#00dd43 92px,#00ff4d 93px,#00ff31 162px,#27ff28 181px,#64ff1d 204px,#abff10 226px,#faff04 247px,#fffb03 249px,#ffdb00 258px,#ffbd00 268px,#ffa500 278px,#ff8f00 289px,#d27400 290px,#995400 291px,#994d00 299px)"></i><i style="background:linear-gradient(90deg,#00993e 5px,#00992f 91px,#00f44b 92px,#00ff4e 93px,#01ff33 162px,#2bff29 182px,#69ff1d 205px,#adff11 226px,#fdff05 247px,#ffd800 258px,#ffbd00 267px,#ffa300 278px,#ff8c00 290px,#d70 291px,#a45800 292px,#995100 293px,#994b00 300px)"></i><i style="background:linear-gradient(90deg,#00993f 6px,#009930 91px,#00ff50 92px,#01ff34 162px,#2cff2a 182px,#68ff1f 204px,#afff12 226px,#fcff06 246px,#fffd06 247px,#ffd900 257px,#fb0 267px,#ffa100 278px,#f80 291px,#f48100 292px,#a45600 293px,#994f00 294px,#994900 301px)"></i><i style="background:linear-gradient(90deg,#009940 6px,#009931 91px,#00ff51 92px,#00ff35 161px,#28ff2c 180px,#66ff20 203px,#aeff14 225px,#fbff08 245px,#fffb07 247px,#ffd601 257px,#ffb700 268px,#ff9b00 280px,#ff8300 293px,#bb5f00 294px,#994d00 295px,#994700 303px)"></i><i style="background:linear-gradient(90deg,#009940 6px,#009931 91px,#00ff52 92px,#01ff37 161px,#2bff2d 181px,#68ff22 203px,#adff16 224px,#feff09 245px,#ffd702 256px,#ffb700 267px,#f90 280px,#ff8000 294px,#d26800 295px,#994b00 296px,#994500 304px)"></i><i style="background:linear-gradient(90deg,#009941 6px,#009932 91px,#00ff53 92px,#01ff38 161px,#2cff2e 181px,#69ff23 203px,#afff17 224px,#fdff0b 244px,#ffd503 256px,#ffb500 267px,#ff9800 280px,#ff7d00 295px,#dd6b00 296px,#a44f00 297px,#994800 298px,#994300 305px)"></i><i style="background:linear-gradient(90deg,#009942 6px,#093 90px,#00a437 91px,#0f5 92px,#00ff3a 160px,#29ff31 179px,#65ff25 201px,#aeff19 223px,#fcff0c 243px,#fffe0c 244px,#ffd203 256px,#ffb300 267px,#ff9400 281px,#ff7a00 296px,#f47300 297px,#b05200 298px,#994700 299px,#994200 306px)"></i><i style="background:linear-gradient(90deg,#009942 6px,#009934 90px,#00bb3f 91px,#00ff56 92px,#01ff3b 160px,#2aff32 179px,#66ff26 201px,#acff1a 222px,#faff0e 242px,#fffb0d 244px,#ffd305 255px,#ffae00 268px,#ff9000 282px,#ff7600 298px,#b50 299px,#994500 300px,#994000 307px)"></i><i style="background:linear-gradient(90deg,#009943 6px,#009935 90px,#00bb40 91px,#00ff57 92px,#01ff3c 160px,#2bff33 179px,#68ff28 201px,#aeff1c 222px,#fdff0f 242px,#ffd005 255px,#ffaf00 267px,#ff8f00 282px,#ff7300 299px,#dd6200 300px,#994300 301px,#993f00 308px)"></i><i style="background:linear-gradient(90deg,#094 6px,#009935 90px,#00bb41 91px,#00ff58 92px,#00ff3e 159px,#0fff3a 167px,#29ff35 178px,#67ff2a 200px,#adff1e 221px,#fcff11 241px,#fffd10 242px,#ffce06 255px,#ffad00 267px,#ff8d00 282px,#ff7000 300px,#e86500 301px,#a44700 302px,#994100 303px,#993c00 310px)"></i><i style="background:linear-gradient(90deg,#094 7px,#009936 90px,#00bb42 91px,#00ff5a 92px,#01ff3f 159px,#2aff36 178px,#68ff2b 200px,#acff1f 220px,#fbff13 240px,#fffa11 242px,#ffcb07 255px,#ffab01 267px,#ff8900 283px,#ff6e00 301px,#f46700 302px,#b04a00 303px,#993f00 304px,#993b00 311px)"></i><i style="background:linear-gradient(90deg,#009945 7px,#009937 90px,#00bb43 91px,#00ff5b 92px,#01ff41 159px,#2bff38 178px,#6aff2c 200px,#aeff21 220px,#feff14 240px,#ffcf09 253px,#ffa901 267px,#ff8600 284px,#ff6a00 303px,#bb4c00 304px,#993e00 305px,#993a00 312px)"></i><i style="background:linear-gradient(90deg,#009946 7px,#009938 90px,#00dd50 91px,#00ff5c 92px,#00ff42 158px,#27ff3a 176px,#65ff2f 198px,#acff23 219px,#fdff16 239px,#ffcd0a 253px,#ffa702 267px,#ff8400 284px,#ff6700 304px,#dd5800 305px,#993c00 306px,#993800 313px)"></i><i style="background:linear-gradient(90deg,#009947 7px,#009939 90px,#00dd51 91px,#00ff5e 92px,#0f4 158px,#2bff3b 177px,#67ff30 198px,#abff25 218px,#fcff18 238px,#fffa16 240px,#ffca0b 253px,#ffa503 267px,#ff8100 285px,#ff6500 305px,#e85a00 306px,#a43f00 307px,#993a00 308px,#993700 314px)"></i><i style="background:linear-gradient(90deg,#009947 7px,#009939 90px,#00dd53 91px,#00ff5f 92px,#01ff45 158px,#2cff3c 177px,#68ff31 198px,#adff26 218px,#faff1a 237px,#fffb18 239px,#ffdf11 246px,#ffc80c 253px,#ffa303 267px,#ff8000 285px,#ff6200 306px,#f45d00 307px,#bb4600 308px,#993900 309px,#993500 316px)"></i><i style="background:linear-gradient(90deg,#009948 7px,#00993a 90px,#00dd54 91px,#00ff60 92px,#00ff47 157px,#28ff3f 175px,#67ff33 197px,#acff28 217px,#fdff1b 237px,#ffc90d 252px,#ffa104 267px,#ff7c00 286px,#ff5e00 308px,#c64900 309px,#993700 310px,#930 317px)"></i><i style="background:linear-gradient(90deg,#009949 7px,#00993b 90px,#0d5 91px,#00ff62 92px,#00ff49 157px,#2cff40 176px,#69ff35 197px,#aeff29 217px,#fcff1d 236px,#fffd1c 237px,#ffe115 244px,#ffc90f 251px,#ff9f05 267px,#ff7b00 286px,#ff5c00 309px,#dd4f00 310px,#993600 311px,#993200 318px)"></i><i style="background:linear-gradient(90deg,#00994a 8px,#00993c 90px,#00e85b 91px,#00ff63 92px,#01ff4a 157px,#2aff42 175px,#67ff37 196px,#adff2b 216px,#fbff1f 235px,#fffa1d 237px,#ffde16 244px,#ffc710 251px,#ff9d05 267px,#ff8500 279px,#ff7800 287px,#ff5a00 310px,#f45500 311px,#a43900 312px,#993400 313px,#993100 319px)"></i><i style="background:linear-gradient(90deg,#00994a 8px,#00993d 90px,#00ff65 91px,#00ff4c 156px,#0eff49 163px,#29ff44 174px,#66ff39 195px,#abff2d 215px,#feff21 235px,#ffdf18 243px,#ffc712 250px,#ff9b06 267px,#ff7600 287px,#ff5800 311px,#f45300 312px,#bb3f00 313px,#930 314px,#993000 320px)"></i><i style="background:linear-gradient(90deg,#00994b 8px,#00993e 90px,#0f6 91px,#00ff4d 156px,#2aff45 174px,#67ff3a 195px,#aeff2f 215px,#fdff23 234px,#fffd22 235px,#ffe01a 242px,#ffc512 250px,#ff9907 267px,#ff7300 288px,#ff5400 313px,#c64100 314px,#993100 315px,#992e00 322px)"></i><i style="background:linear-gradient(90deg,#00994c 8px,#00993e 90px,#00ff68 91px,#01ff4f 156px,#2bff47 174px,#69ff3c 195px,#acff31 214px,#fcff25 233px,#fff923 235px,#ffdd1b 242px,#ffc313 250px,#ff9707 267px,#ff7200 288px,#ff5200 314px,#dd4600 315px,#993000 316px,#992d00 323px)"></i><i style="background:linear-gradient(90deg,#00994d 8px,#00993f 90px,#00ff69 91px,#00ff51 155px,#27ff49 172px,#64ff3e 193px,#abff33 213px,#faff27 232px,#fffb25 234px,#ffdb1c 242px,#ffc014 250px,#ff9508 267px,#ff6f00 289px,#ff5000 315px,#f44c00 316px,#a43200 317px,#992e00 318px,#992c00 324px)"></i><i style="background:linear-gradient(90deg,#00994e 8px,#009940 90px,#00ff6b 91px,#00ff52 155px,#2aff4a 173px,#69ff3f 194px,#adff35 213px,#fdff29 232px,#ffdb1e 241px,#ffc417 248px,#ffaa0f 257px,#ff9309 267px,#ff6e00 289px,#ff4e00 316px,#f44a00 317px,#bb3800 318px,#992d00 319px,#992a00 325px)"></i><i style="background:linear-gradient(90deg,#00994e 9px,#009941 89px,#00bb50 90px,#00ff6c 91px,#01ff54 155px,#2bff4c 173px,#68ff42 193px,#acff37 212px,#fcff2b 231px,#fffd2a 232px,#ffdc20 240px,#ffc118 248px,#ffa810 257px,#ff920a 267px,#ff6b00 290px,#ff4b00 318px,#d23d00 319px,#992c00 320px,#992900 326px)"></i><i style="background:linear-gradient(90deg,#00994f 9px,#009942 89px,#00bb51 90px,#00ff6e 91px,#00ff56 154px,#27ff4e 171px,#6f4 192px,#aaff39 211px,#fbff2d 230px,#fffa2b 232px,#ffd921 240px,#ffbf19 248px,#ffa611 257px,#ff900a 267px,#ff6900 290px,#ff4900 319px,#dd3f00 320px,#a42e00 321px,#992a00 322px,#992800 328px)"></i><i style="background:linear-gradient(90deg,#009950 9px,#009943 89px,#00bb52 90px,#00ff6f 91px,#00ff58 154px,#2bff4f 172px,#68ff45 192px,#adff3b 211px,#feff2f 230px,#ffda23 239px,#ffc01a 247px,#ffa713 256px,#ff900c 266px,#ff7c06 277px,#ff6800 290px,#ff4700 320px,#f44300 321px,#a42d00 322px,#992900 323px,#992700 329px)"></i><i style="background:linear-gradient(90deg,#009951 9px,#094 89px,#00bb53 90px,#00ff71 91px,#01ff59 154px,#2cff51 172px,#69ff47 192px,#afff3c 211px,#fdff31 229px,#ffd824 239px,#ffbd1b 247px,#ffa513 256px,#ff8c0c 267px,#ff7705 279px,#ff6400 292px,#ff4500 322px,#bb3200 323px,#992800 324px,#992600 330px)"></i><i style="background:linear-gradient(90deg,#009952 9px,#009945 89px,#00bb54 90px,#00ff72 91px,#00ff5b 153px,#0eff58 160px,#28ff54 170px,#64ff4a 190px,#aaff3f 209px,#fcff34 228px,#fff931 230px,#ffd826 238px,#ffbb1c 247px,#ffa013 257px,#ff8a0c 267px,#ff7506 279px,#ff6301 292px,#ff4300 323px,#d23600 324px,#992700 325px,#992500 331px)"></i><i style="background:linear-gradient(90deg,#009952 9px,#009946 89px,#00d260 90px,#00ff74 91px,#00ff5d 153px,#29ff55 170px,#66ff4c 190px,#acff41 209px,#faff36 227px,#fffa34 229px,#ffd928 237px,#ffbb1e 246px,#ffa316 255px,#ff8a0e 266px,#ff7507 278px,#ff6101 292px,#ff4100 324px,#dd3800 325px,#a42900 326px,#992500 327px,#992400 332px)"></i><i style="background:linear-gradient(90deg,#009953 10px,#009947 89px,#0d6 90px,#00ff75 91px,#01ff5f 153px,#2aff57 170px,#68ff4d 190px,#afff43 209px,#fdff38 227px,#ffda2b 236px,#ffbc20 245px,#ffa117 255px,#ff890e 266px,#ff7408 278px,#ff6002 292px,#ff3f00 325px,#f43c00 326px,#a42800 327px,#992400 328px,#992300 333px)"></i><i style="background:linear-gradient(90deg,#009954 10px,#009948 89px,#00dd67 90px,#0f7 91px,#00ff61 152px,#0fff5e 159px,#29ff59 169px,#66ff50 189px,#adff45 208px,#fcff3a 226px,#fffd39 227px,#ffd42a 237px,#ffb921 245px,#ff9f17 255px,#ff870f 266px,#ff7108 279px,#ff5d02 293px,#ff3d00 327px,#bb2c00 328px,#992300 329px,#992100 335px)"></i><i style="background:linear-gradient(90deg,#095 10px,#009949 89px,#00dd69 90px,#00ff79 91px,#00ff63 152px,#2aff5b 169px,#68ff51 189px,#acff48 207px,#fbff3d 225px,#fffa3a 227px,#ffd52c 236px,#ffb722 245px,#ff9d18 255px,#ff8510 266px,#ff6f08 279px,#ff5b02 294px,#ff3b00 328px,#dd3200 329px,#920 330px,#992000 336px)"></i><i style="background:linear-gradient(90deg,#009956 10px,#00994a 89px,#00dd6a 90px,#00ff7a 91px,#01ff64 152px,#2bff5d 169px,#6aff53 189px,#aeff49 207px,#feff3e 225px,#ffd52f 235px,#ffb724 244px,#ff9d1a 254px,#ff8311 266px,#ff6e09 279px,#ff5a02 294px,#ff3900 329px,#e83300 330px,#a42400 331px,#992100 332px,#991f00 337px)"></i><i style="background:linear-gradient(90deg,#009957 10px,#00994b 89px,#00e871 90px,#00ff7c 91px,#00ff67 151px,#26ff60 167px,#65ff56 187px,#adff4c 206px,#fdff41 224px,#ffd631 234px,#ffb826 243px,#ff9d1b 253px,#ff8312 265px,#ff6c0a 279px,#ff5803 294px,#ff4f00 303px,#ff3800 330px,#f43400 331px,#b02500 332px,#992000 333px,#991f00 338px)"></i><i style="background:linear-gradient(90deg,#009958 10px,#00994c 89px,#00ff7e 90px,#00ff68 151px,#2aff61 168px,#67ff58 187px,#abff4e 205px,#fcff44 223px,#fffd43 224px,#ffd332 234px,#ffb626 243px,#ff991b 254px,#ff8012 266px,#ff690a 280px,#ff5603 295px,#ff4b00 305px,#ff3500 332px,#bb2700 333px,#991f00 334px,#991e00 339px)"></i><i style="background:linear-gradient(90deg,#009958 11px,#00994d 89px,#00ff80 90px,#01ff6a 151px,#2cff63 168px,#68ff5a 187px,#aeff50 205px,#faff46 222px,#fffa44 224px,#ffd434 233px,#ffb327 243px,#ff971c 254px,#ff7e13 266px,#ff680a 280px,#ff5403 296px,#ff4900 306px,#ff3400 333px,#dd2c00 334px,#991e00 335px,#991c00 341px)"></i><i style="background:linear-gradient(90deg,#009959 11px,#00994e 89px,#00ff81 90px,#00ff6d 150px,#0dff6a 156px,#27ff66 166px,#67ff5c 186px,#acff53 204px,#fdff48 222px,#ffd537 232px,#ffb72b 241px,#ff991f 252px,#ff7e14 265px,#ff680b 279px,#ff5404 295px,#ff4600 308px,#ff3200 334px,#e82d00 335px,#a42000 336px,#991d00 337px,#991b00 342px)"></i><i style="background:linear-gradient(90deg,#00995a 11px,#00994f 89px,#00ff83 90px,#00ff6f 150px,#2bff67 167px,#69ff5e 186px,#afff55 204px,#fcff4b 221px,#fffd4a 222px,#ffd238 232px,#ffb42b 241px,#ff9720 252px,#ff7d15 265px,#ff650c 280px,#ff5104 296px,#f40 309px,#ff3100 335px,#f42e00 336px,#b02100 337px,#991c00 338px,#991b00 343px)"></i><i style="background:linear-gradient(90deg,#00995b 11px,#009950 89px,#00ff85 90px,#01ff70 150px,#2aff6a 166px,#67ff61 185px,#adff58 203px,#fbff4e 220px,#fff94b 222px,#ffd33a 231px,#ffb22c 241px,#ff9520 252px,#ff7b16 265px,#ff630c 280px,#ff4f04 297px,#ff4200 311px,#ff2f00 337px,#c62400 338px,#991b00 339px,#991a00 344px)"></i><i style="background:linear-gradient(90deg,#00995c 11px,#009951 88px,#00bb63 89px,#00ff87 90px,#00ff73 149px,#0dff70 155px,#28ff6c 165px,#65ff63 184px,#abff5a 202px,#f9ff50 219px,#fffb4e 221px,#ffd43d 230px,#ffaf2d 241px,#ff9321 252px,#ff7916 265px,#ff620d 280px,#ff4e05 297px,#ff4000 312px,#ff2d00 338px,#dd2700 339px,#991a00 340px,#991900 345px)"></i><i style="background:linear-gradient(90deg,#00995d 11px,#009952 88px,#00bb64 89px,#00ff89 90px,#00ff75 149px,#29ff6e 165px,#67ff66 184px,#aeff5c 202px,#fdff52 219px,#ffd540 229px,#ffb331 239px,#ff9323 251px,#ff7918 264px,#ff620e 279px,#ff4d05 297px,#ff3d00 314px,#ff2c00 339px,#f42900 340px,#a41b00 341px,#991900 342px,#991800 347px)"></i><i style="background:linear-gradient(90deg,#00995e 12px,#009953 88px,#0b6 89px,#00ff8a 90px,#01ff77 149px,#2aff70 165px,#69ff68 184px,#acff5f 201px,#fbff55 218px,#fffd54 219px,#ffd240 229px,#ffb031 239px,#ff9124 251px,#ff7718 264px,#ff600f 279px,#ff4b06 297px,#ff3b00 315px,#ff2a00 340px,#f42800 341px,#bb1e00 342px,#991800 343px,#991700 348px)"></i><i style="background:linear-gradient(90deg,#00995f 12px,#095 88px,#00bb67 89px,#00ff8c 90px,#00ff79 148px,#26ff73 163px,#64ff6b 182px,#abff62 200px,#faff58 217px,#fffa55 219px,#ffd343 228px,#ffae32 239px,#ff8f25 251px,#ff7619 264px,#ff5e0f 280px,#ff4906 298px,#ff3a00 316px,#ff2800 342px,#c61f00 343px,#991800 344px,#991600 349px)"></i><i style="background:linear-gradient(90deg,#009960 12px,#009956 88px,#00bb68 89px,#00ff8e 90px,#00ff7b 148px,#2aff75 164px,#69ff6c 183px,#adff64 200px,#fdff5a 217px,#ffd044 228px,#ffae35 238px,#ff9026 250px,#ff741a 264px,#ff5c0f 280px,#ff4807 298px,#ff3700 318px,#ff2700 343px,#dd2100 344px,#991700 345px,#991600 350px)"></i><i style="background:linear-gradient(90deg,#009961 12px,#009957 88px,#00d277 89px,#00ff90 90px,#01ff7d 148px,#2bff77 164px,#67ff6f 182px,#acff67 199px,#fcff5d 216px,#fffd5c 217px,#ffd147 227px,#ffac35 238px,#ff8e27 250px,#ff721b 264px,#ff5b10 280px,#ff4607 299px,#ff3500 319px,#ff2600 344px,#f42400 345px,#a41800 346px,#991600 347px,#991500 351px)"></i><i style="background:linear-gradient(90deg,#009962 12px,#009958 88px,#00dd7f 89px,#00ff92 90px,#00ff80 147px,#0dff7e 153px,#26ff7a 162px,#66ff72 181px,#aaff6a 198px,#fbff60 215px,#fff95d 217px,#ffce48 227px,#ffac38 237px,#ff8e29 249px,#ff721c 263px,#ff5b11 279px,#ff4608 298px,#f30 321px,#ff2400 345px,#f42200 346px,#bb1a00 347px,#991500 348px,#991400 353px)"></i><i style="background:linear-gradient(90deg,#009963 13px,#009959 88px,#00dd81 89px,#00ff94 90px,#00ff82 147px,#2bff7c 163px,#68ff74 181px,#adff6c 198px,#f9ff63 214px,#fffa60 216px,#ffce4a 226px,#ffaa39 237px,#ff8a29 250px,#ff6f1c 264px,#ff5711 281px,#ff4307 300px,#ff3100 322px,#ff2300 347px,#c61b00 348px,#991400 349px,#991300 354px)"></i><i style="background:linear-gradient(90deg,#009964 13px,#00995a 88px,#00dd82 89px,#00ff96 90px,#01ff84 147px,#2cff7e 163px,#6aff76 181px,#b0ff6e 198px,#fdff66 214px,#ffcf4d 225px,#ffaa3b 236px,#ff8a2b 249px,#ff6f1d 263px,#ff5712 280px,#ff4208 300px,#ff2f00 324px,#ff2100 348px,#dd1d00 349px,#a41500 350px,#991300 351px,#991200 355px)"></i><i style="background:linear-gradient(90deg,#009965 13px,#00995c 88px,#00dd84 89px,#00ff98 90px,#00ff87 146px,#0eff85 152px,#27ff81 161px,#64ff7a 179px,#a9ff72 196px,#fbff69 213px,#fffd67 214px,#ffcc4e 225px,#ffab3d 235px,#ff8a2c 248px,#ff6e1e 263px,#ff5612 280px,#ff4108 300px,#ff2e00 325px,#ff2000 349px,#f41e00 350px,#a41400 351px,#991200 352px,#991200 356px)"></i><i style="background:linear-gradient(90deg,#096 13px,#00995d 88px,#00dd86 89px,#00ff9a 90px,#00ff89 146px,#28ff84 161px,#66ff7c 179px,#acff74 196px,#faff6c 212px,#fffa68 214px,#ffc94f 225px,#ffa83e 235px,#ff882d 248px,#ff6c1f 263px,#ff5312 281px,#ff3f08 301px,#ff2c00 327px,#ff1f00 351px,#bb1600 352px,#991200 353px,#910 357px)"></i><i style="background:linear-gradient(90deg,#009967 13px,#00995e 88px,#00ff9c 89px,#01ff8b 146px,#2aff86 161px,#68ff7f 179px,#afff77 196px,#fdff6e 212px,#ffce54 223px,#ffa940 234px,#ff882f 247px,#ff6c20 262px,#ff5314 280px,#ff3f09 300px,#ff2a00 328px,#ff1d00 352px,#d21800 353px,#910 354px,#991000 358px)"></i><i style="background:linear-gradient(90deg,#009968 13px,#00995f 88px,#00ff9e 89px,#00ff8e 145px,#0eff8c 151px,#28ff89 160px,#66ff81 178px,#adff7a 195px,#fcff72 211px,#fffc70 212px,#ffcb55 223px,#ffa641 234px,#ff8630 247px,#ff6a21 262px,#ff5214 280px,#ff3d09 301px,#ff2900 329px,#ff1c00 353px,#dd1800 354px,#a41200 355px,#991000 356px,#990f00 360px)"></i><i style="background:linear-gradient(90deg,#009969 14px,#009960 88px,#00ffa1 89px,#00ff90 145px,#29ff8b 160px,#68ff84 178px,#abff7d 194px,#fbff75 210px,#fffe74 211px,#ffcc58 222px,#ffa744 233px,#ff8632 246px,#ff6922 262px,#ff5015 280px,#ff3c0a 301px,#ff2700 331px,#ff1b00 354px,#f41a00 355px,#a41100 356px,#991000 357px,#990f00 361px)"></i><i style="background:linear-gradient(90deg,#00996b 14px,#009962 88px,#00ffa3 89px,#01ff93 145px,#2aff8e 160px,#66ff87 177px,#aaff80 193px,#f9ff78 209px,#fffa75 211px,#ffcd5b 221px,#ffa445 233px,#ff8433 246px,#ff6722 262px,#ff4f15 280px,#ff3a0a 302px,#ff2500 332px,#ff1a00 356px,#bb1200 357px,#990f00 358px,#990e00 362px)"></i><i style="background:linear-gradient(90deg,#00996c 14px,#009963 88px,#00ffa5 89px,#00ff96 144px,#0bff94 149px,#25ff91 158px,#64ff8a 176px,#adff83 193px,#fdff7b 209px,#ffce5e 220px,#ffa547 232px,#ff8435 245px,#ff6724 261px,#ff4e16 280px,#ff390b 302px,#ff2300 334px,#ff1900 357px,#d21400 358px,#990e00 359px,#990d00 363px)"></i><i style="background:linear-gradient(90deg,#00996d 14px,#009965 87px,#00b073 88px,#00ffa7 89px,#00ff98 144px,#2aff93 159px,#66ff8d 176px,#abff86 192px,#fbff7e 208px,#fffd7d 209px,#ffe46e 214px,#ffca5f 220px,#ffa54a 231px,#ff8235 245px,#ff6525 261px,#ff4c17 280px,#ff380b 302px,#f20 335px,#ff1700 358px,#e81500 359px,#a40f00 360px,#990d00 361px,#990d00 364px)"></i><i style="background:linear-gradient(90deg,#00996e 14px,#096 87px,#00bb7c 88px,#00ffa9 89px,#01ff9b 144px,#2bff96 159px,#69ff8f 176px,#aeff89 192px,#faff82 207px,#fff97e 209px,#ffe16f 214px,#ffc760 220px,#ffa34a 231px,#ff8036 245px,#ff6425 261px,#ff4b17 280px,#ff370c 302px,#ff2100 336px,#ff1600 359px,#f41500 360px,#b00f00 361px,#990d00 362px,#990c00 366px)"></i><i style="background:linear-gradient(90deg,#00996f 15px,#009967 87px,#00bb7e 88px,#00ffac 89px,#00ff9d 143px,#0cff9c 148px,#26ff99 157px,#67ff92 175px,#acff8c 191px,#fdff84 207px,#fc6 218px,#ffa34d 230px,#ff8138 244px,#ff6226 261px,#ff4a18 280px,#ff350c 303px,#ff1f00 338px,#ff1500 361px,#bb0f00 362px,#990c00 363px,#990b00 367px)"></i><i style="background:linear-gradient(90deg,#009970 15px,#009969 87px,#00bb80 88px,#00ffae 89px,#00ffa0 143px,#0fff9e 149px,#2bff9b 158px,#69ff95 175px,#afff8f 191px,#fcff88 206px,#fffc86 207px,#ffe376 212px,#ffc966 218px,#ffa450 229px,#ff813a 243px,#ff6228 260px,#ff4918 280px,#ff340c 303px,#ff1e00 339px,#ff1400 362px,#d10 363px,#990c00 364px,#990b00 368px)"></i><i style="background:linear-gradient(90deg,#009971 15px,#00996a 87px,#00bb81 88px,#00ffb0 89px,#01ffa3 143px,#29ff9e 157px,#67ff98 174px,#adff92 190px,#fbff8c 205px,#fffe8a 206px,#ffdf77 212px,#ffc667 218px,#ffa150 229px,#ff7f3b 243px,#ff6128 260px,#ff4719 280px,#ff330d 303px,#ff1d00 340px,#ff1300 363px,#e81100 364px,#a40c00 365px,#990b00 366px,#990a00 369px)"></i><i style="background:linear-gradient(90deg,#009973 15px,#00996b 87px,#00c68b 88px,#00ffb2 89px,#00ffa6 142px,#0cffa4 147px,#27ffa1 156px,#65ff9c 173px,#abff96 189px,#f9ff8f 204px,#fefe8e 205px,#fffa8b 206px,#ffdc78 212px,#ffc368 218px,#ff9f51 229px,#ff7d3c 243px,#ff5f29 260px,#ff461a 280px,#ff310d 304px,#ff1b00 341px,#ff1200 364px,#f41100 365px,#b00c00 366px,#990a00 367px,#990a00 370px)"></i><i style="background:linear-gradient(90deg,#009974 15px,#00996d 87px,#00dd9d 88px,#00ffb5 89px,#00ffa8 142px,#28ffa4 156px,#67ff9e 173px,#aeff99 189px,#fdff92 204px,#ffc86e 216px,#ff9f54 228px,#ff7d3e 242px,#ff5f2b 259px,#ff451a 280px,#ff300d 304px,#ff1a00 343px,#f10 366px,#bb0c00 367px,#990a00 368px,#990900 372px)"></i><i style="background:linear-gradient(90deg,#009975 16px,#00996e 87px,#00dd9f 88px,#00ffb7 89px,#01ffab 142px,#2dffa7 157px,#69ffa1 173px,#acff9c 188px,#fbff96 203px,#fffd94 204px,#ffe383 209px,#ffc872 215px,#ffa057 227px,#ff7b3f 242px,#ff5d2b 259px,#ff441b 280px,#ff2f0e 304px,#ff1901 343px,#ff1000 367px,#dd0d00 368px,#990900 369px,#990800 373px)"></i><i style="background:linear-gradient(90deg,#009976 16px,#009970 87px,#00dda1 88px,#00ffba 89px,#00ffae 141px,#0cffad 146px,#24ffaa 154px,#63ffa5 171px,#abffa0 187px,#faff9a 202px,#fefe99 203px,#fff995 204px,#ffdf84 209px,#ffc572 215px,#ff9d57 227px,#ff793f 242px,#ff5c2c 259px,#ff421b 280px,#ff2e0e 304px,#ff1801 344px,#ff0f00 368px,#f40e00 369px,#a40900 370px,#990800 371px,#990800 374px)"></i><i style="background:linear-gradient(90deg,#009978 16px,#009971 87px,#00dda3 88px,#00ffbc 89px,#00ffb1 141px,#29ffad 155px,#65ffa8 171px,#aeffa3 187px,#fdff9d 202px,#ffc676 214px,#ff9d5a 226px,#ff7941 241px,#ff5c2e 258px,#ff421d 279px,#ff2d0f 304px,#ff1701 345px,#ff0e00 369px,#f40d00 370px,#bb0a00 371px,#990800 372px,#990700 375px)"></i><i style="background:linear-gradient(90deg,#009979 16px,#009973 87px,#00dda5 88px,#00ffbf 89px,#01ffb4 141px,#2bffb0 155px,#67ffab 171px,#acffa6 186px,#fcffa1 201px,#fffc9f 202px,#ffe28c 207px,#ffc77a 213px,#ff9e5d 225px,#ff7944 240px,#ff5a2e 258px,#ff411d 279px,#ff2c0f 305px,#ff1601 346px,#ff0d00 371px,#c60a00 372px,#990700 373px,#990700 376px)"></i><i style="background:linear-gradient(90deg,#00997a 17px,#009974 87px,#00ffc1 88px,#00ffb7 140px,#0cffb6 145px,#25ffb4 153px,#65ffaf 170px,#afa 185px,#faffa5 200px,#fffda3 201px,#ffde8d 207px,#ffc47a 213px,#ff9b5e 225px,#f74 240px,#ff592f 258px,#ff401e 279px,#ff2b0f 305px,#ff1501 347px,#ff0c00 372px,#dd0a00 373px,#990700 374px,#990600 377px)"></i><i style="background:linear-gradient(90deg,#00997b 17px,#009976 87px,#00ffc4 88px,#00ffba 140px,#27ffb7 153px,#63ffb2 169px,#a8ffae 184px,#f9ffa9 199px,#fefea8 200px,#fffaa4 201px,#ffdf91 206px,#ffc57e 212px,#ff995f 225px,#ff7545 240px,#ff5730 258px,#ff3e1e 280px,#ff290f 306px,#ff1401 348px,#ff0b00 373px,#f40a00 374px,#a40700 375px,#990600 376px,#990600 379px)"></i><i style="background:linear-gradient(90deg,#00997d 17px,#097 87px,#00ffc7 88px,#01ffbd 140px,#2cffba 154px,#66ffb6 169px,#a6ffb1 183px,#fdffac 199px,#fffba9 200px,#ffe096 205px,#ffc682 211px,#ff9961 224px,#ff7346 240px,#ff5630 258px,#ff3d1e 280px,#ff2810 306px,#ff1302 348px,#ff0a00 374px,#f40900 375px,#bb0700 376px,#990600 377px,#990500 380px)"></i><i style="background:linear-gradient(90deg,#00997e 17px,#009979 87px,#00ffc9 88px,#00ffc0 139px,#0cffbf 144px,#26ffbd 152px,#64ffb9 168px,#a9ffb5 183px,#fbffb0 198px,#fffdae 199px,#ffe29a 204px,#ffc686 210px,#ffb075 216px,#ff9964 223px,#ff7348 239px,#ff5632 257px,#ff3c1f 279px,#ff2710 306px,#ff1201 350px,#ff0900 376px,#c60700 377px,#990500 378px,#990500 381px)"></i><i style="background:linear-gradient(90deg,#00997f 17px,#00997a 87px,#0fc 88px,#00ffc3 139px,#27ffc0 152px,#61ffbd 167px,#a7ffb9 182px,#faffb4 197px,#fefeb3 198px,#fff9af 199px,#ffde9b 204px,#ffc387 210px,#ff9765 223px,#ff7149 239px,#ff5332 258px,#ff3a1f 280px,#ff2610 307px,#ff1102 350px,#ff0800 377px,#dd0700 378px,#990500 379px,#990400 382px)"></i><i style="background:linear-gradient(90deg,#009981 18px,#00997c 86px,#00b08f 87px,#00ffcf 88px,#01ffc6 139px,#29ffc4 152px,#64ffc0 167px,#a0ffbd 180px,#f8ffb8 196px,#fdffb8 197px,#fffab4 198px,#ffdf9f 203px,#ffc48a 209px,#ffad79 215px,#ff9768 222px,#ff714b 238px,#ff5233 257px,#ff3920 280px,#ff2511 307px,#ff1002 351px,#ff0800 378px,#f40700 379px,#a40500 380px,#990400 381px,#990400 383px)"></i><i style="background:linear-gradient(90deg,#009982 18px,#00997e 86px,#00bb9a 87px,#00ffd1 88px,#00ffca 138px,#0affc9 142px,#23ffc7 150px,#62ffc4 166px,#a3ffc1 180px,#fcffbc 196px,#fffcba 197px,#ffe0a4 202px,#ffc58e 208px,#ffae7d 214px,#ff986b 221px,#ff714d 237px,#ff5235 256px,#ff3921 279px,#ff2411 307px,#ff0f02 352px,#ff0700 380px,#bb0500 381px,#990400 382px,#990300 385px)"></i><i style="background:linear-gradient(90deg,#009984 18px,#009980 86px,#00bb9c 87px,#00ffd4 88px,#00ffcd 138px,#28ffcb 151px,#64ffc8 166px,#a6ffc4 180px,#fffdbf 196px,#ffe2a9 201px,#ffc693 207px,#ffab7d 214px,#ff956c 221px,#ff6f4e 237px,#ff5136 256px,#ff3822 279px,#ff2312 307px,#ff0e02 352px,#ff0600 381px,#d20500 382px,#990300 383px,#990300 386px)"></i><i style="background:linear-gradient(90deg,#009985 18px,#009981 86px,#00bb9e 87px,#00ffd7 88px,#01ffd0 138px,#2affce 151px,#62ffcb 165px,#a9ffc8 180px,#f9ffc5 194px,#fefec4 195px,#fff9c0 196px,#ffdeaa 201px,#ffc293 207px,#ffa87e 214px,#ff936d 221px,#ff6e4f 237px,#ff4f36 256px,#ff3622 280px,#ff2112 308px,#ff0d02 353px,#ff0500 382px,#dd0400 383px,#a40300 384px,#990300 385px,#990200 387px)"></i><i style="background:linear-gradient(90deg,#009986 18px,#009983 86px,#00bba0 87px,#00ffda 88px,#00ffd4 137px,#0affd3 141px,#24ffd2 149px,#64ffcf 165px,#a2ffcd 178px,#cdffcb 186px,#fdffc9 194px,#fffbc5 195px,#ffdfae 200px,#ffc397 206px,#ffa982 213px,#ff9370 220px,#ff6e51 236px,#ff4f38 255px,#ff3523 279px,#ff2113 307px,#ff0d03 353px,#ff0400 383px,#f40400 384px,#a40300 385px,#990200 386px,#990200 388px)"></i><i style="background:linear-gradient(90deg,#098 19px,#009985 86px,#00c6ac 87px,#0fd 88px,#00ffd7 137px,#0effd7 142px,#29ffd5 150px,#66ffd3 165px,#a5ffd1 178px,#fbffcd 193px,#fffccb 194px,#ffe0b3 199px,#ffc49c 205px,#ffa985 212px,#ff9373 219px,#ff6e53 235px,#ff4e39 255px,#ff3424 279px,#ff2013 308px,#ff0c03 354px,#ff0300 385px,#bb0200 386px,#990200 387px,#990200 389px)"></i><i style="background:linear-gradient(90deg,#009989 19px,#009986 86px,#00ddc2 87px,#00ffe0 88px,#01ffdb 137px,#2bffd9 150px,#64ffd7 164px,#a9ffd5 178px,#f9ffd2 192px,#fefed1 193px,#fff8cc 194px,#ffdcb4 199px,#ffc19d 205px,#ffa686 212px,#ff9174 219px,#ff6c54 235px,#ff4c39 255px,#ff3324 279px,#ff1f13 308px,#ff0b03 354px,#ff0300 386px,#d20200 387px,#990100 388px,#990100 391px)"></i><i style="background:linear-gradient(90deg,#00998b 19px,#098 86px,#00ddc5 87px,#00ffe3 88px,#00ffde 136px,#0affde 140px,#25ffdd 148px,#62ffdb 163px,#a7ffd9 177px,#f8ffd6 191px,#fdffd6 192px,#fffad2 193px,#ffdeb9 198px,#ffc2a1 204px,#ffa78a 211px,#ff9177 218px,#ff6c56 234px,#ff4c3b 254px,#ff3325 278px,#ff1e14 308px,#ff0a03 355px,#ff0200 387px,#dd0200 388px,#a40100 389px,#990100 390px,#990100 392px)"></i><i style="background:linear-gradient(90deg,#00998c 19px,#00998a 86px,#00ddc7 87px,#00ffe6 88px,#00ffe2 136px,#27ffe1 148px,#64ffdf 163px,#a4ffdd 176px,#fcffdb 191px,#fffcd8 192px,#ffdfbe 197px,#ffc2a5 203px,#ffa78d 210px,#ff917a 217px,#ff7d68 225px,#ff6a57 234px,#ff493b 255px,#ff3125 279px,#ff1d14 309px,#ff0a04 355px,#ff0200 388px,#f40100 389px,#b00100 390px,#990100 391px,#900 393px)"></i><i style="background:linear-gradient(90deg,#00998e 20px,#00998c 86px,#00ddca 87px,#00ffe9 88px,#01ffe6 136px,#2cffe4 149px,#67ffe3 163px,#a8ffe1 176px,#fffdde 191px,#ffe0c4 196px,#ffc3aa 202px,#ffa891 209px,#ff927d 216px,#ff7d6b 224px,#ff6a59 233px,#ff493c 254px,#ff3026 279px,#ff1c14 309px,#ff0904 356px,#ff0100 390px,#b00 391px,#900 392px,#900 394px)"></i><i style="background:linear-gradient(90deg,#009990 20px,#00998e 86px,#00ddcd 87px,#00ffec 88px,#00ffe9 135px,#0affe9 139px,#22ffe9 146px,#60ffe7 161px,#a6ffe6 175px,#f8ffe4 189px,#fefee4 190px,#fff9df 191px,#ffd7c0 197px,#ffbca7 203px,#ffa28f 210px,#ff8c7b 217px,#ff6658 234px,#ff463c 255px,#ff2d25 281px,#ff1812 314px,#ff0703 360px,#f00 391px,#d00 392px,#900 393px,#900 395px)"></i><i style="background:linear-gradient(90deg,#009991 20px,#009990 86px,#00f4e5 87px,#00fff0 88px,#00ffed 135px,#27ffec 147px,#62ffeb 161px,#a4ffea 174px,#fdffe9 189px,#fffbe5 190px,#ffd8c5 196px,#ffbcab 202px,#ffa293 209px,#ff8c7f 216px,#ff665b 233px,#ff463e 254px,#ff2c25 281px,#ff1813 314px,#ff0703 360px,#f00 392px,#e80000 393px,#a40000 394px,#900 395px,#900 397px)"></i><i style="background:linear-gradient(90deg,#009993 20px,#009992 86px,#00fff3 87px,#01fff1 135px,#29fff0 147px,#65fff0 161px,#a7ffef 174px,#fbffee 188px,#fffceb 189px,#ffd9cb 195px,#ffbdb0 201px,#ffa397 208px,#ff8d82 215px,#ff766d 224px,#ff645c 233px,#ff453e 254px,#ff2c27 280px,#ff1814 312px,#ff0604 359px,#f00 393px,#f40000 394px,#b00000 395px,#900 396px,#900 398px)"></i><i style="background:linear-gradient(90deg,#009994 21px,#009994 86px,#00fff6 87px,#00fff5 134px,#0bfff5 138px,#23fff5 145px,#5efff4 159px,#a5fff4 173px,#f9fff3 187px,#fefef2 188px,#fff8ec 189px,#ffd5cb 195px,#ffbab1 201px,#ffa097 208px,#ff8a83 215px,#ff746d 224px,#ff625c 233px,#ff433f 254px,#ff2b27 280px,#ff1714 313px,#ff0504 361px,#f00 395px,#b00 396px,#900 397px,#900 399px)"></i><i style="background:linear-gradient(90deg,#009996 21px,#009996 86px,#00fff9 87px,#00fff9 134px,#25fff9 145px,#60fff9 159px,#a8fff8 173px,#f7fff8 186px,#fdfef8 187px,#fff9f3 188px,#ffd7d1 194px,#ffbbb5 200px,#ffa09b 207px,#ff8a86 214px,#ff7673 222px,#ff6461 231px,#ff4341 253px,#ff2a28 280px,#ff1514 314px,#ff0504 361px,#f00 396px,#d00 397px,#900 398px,#900 400px)"></i><i style="background:linear-gradient(90deg,#009998 21px,#009998 86px,#00fffd 87px,#01fffd 134px,#2afffd 146px,#67fffd 160px,#a6fffd 172px,#fcfffd 186px,#fffbf9 187px,#ffd8d6 193px,#ffbbba 199px,#ffa19f 206px,#ff8b8a 213px,#ff7473 222px,#ff6261 231px,#ff4241 253px,#ff2828 281px,#ff1414 315px,#ff0404 363px,#f00 397px,#e80000 398px,#a40000 399px,#900 400px,#900 401px)"></i><i style="background:linear-gradient(90deg,#099 21px,#009899 85px,#00a3a4 86px,#00feff 87px,#00fdff 133px,#0bfdff 137px,#23fdff 144px,#5ffcff 158px,#9cfcff 170px,#cbfcff 178px,#fdfbff 186px,#fff7fa 187px,#ffd4d7 193px,#ffb8bb 199px,#ff9ea0 206px,#ff888a 213px,#ff7274 222px,#ff6062 231px,#ff4042 253px,#ff2728 281px,#ff1314 316px,#ff0304 365px,#f00 398px,#f40000 399px,#b00000 400px,#900 401px,#900 403px)"></i><i style="background:linear-gradient(90deg,#009799 21px,#009699 85px,#00b8bb 86px,#00faff 87px,#00f9ff 133px,#0ff9ff 138px,#28f8ff 145px,#65f8ff 159px,#a2f7ff 171px,#cbf7ff 178px,#fdf6ff 186px,#fff2fa 187px,#ffd0d7 193px,#ffb5bb 199px,#ff9ba1 206px,#ff8388 214px,#ff6e72 223px,#ff5c61 232px,#ff3e41 254px,#ff2427 283px,#ff1114 318px,#ff0203 368px,#f00 400px,#c60000 401px,#900 402px,#900 404px)"></i><i style="background:linear-gradient(90deg,#009599 22px,#009499 85px,#00b5bb 86px,#00f7ff 87px,#01f5ff 133px,#29f4ff 145px,#65f3ff 159px,#a2f3ff 171px,#d1f2ff 179px,#fdf1ff 186px,#ffedfb 187px,#ffccd8 193px,#ffb1bc 199px,#ff98a1 206px,#ff8089 214px,#ff6b73 223px,#ff5a61 232px,#ff3c42 254px,#ff2328 283px,#ff1014 319px,#ff0103 370px,#f00 401px,#d00 402px,#900 403px,#900 405px)"></i><i style="background:linear-gradient(90deg,#009499 22px,#009299 85px,#00b3bb 86px,#00f3ff 87px,#00f1ff 132px,#0af1ff 136px,#23f0ff 143px,#61efff 158px,#a3eeff 171px,#d1edff 179px,#fcedff 186px,#ffe9fb 187px,#ffc8d9 193px,#ffaebd 199px,#ff95a2 206px,#ff7e8a 214px,#ff6974 223px,#ff5962 232px,#ff3b43 254px,#ff2228 283px,#ff0f14 320px,#ff0104 370px,#f00 402px,#f40000 403px,#a40000 404px,#900 405px,#900 406px)"></i><i style="background:linear-gradient(90deg,#009299 22px,#009099 85px,#00b0bb 86px,#00f0ff 87px,#00edff 132px,#27ecff 144px,#62ebff 158px,#a3e9ff 171px,#d1e9ff 179px,#fce8ff 186px,#ffe4fb 187px,#ffc4d9 193px,#ffabbd 199px,#ff92a3 206px,#ff7c8a 214px,#ff6775 223px,#ff5763 232px,#ff3a43 254px,#ff2128 284px,#ff0e14 321px,#ff0004 369px,#f00 403px,#f40000 404px,#b00 405px,#900 406px,#900 407px)"></i><i style="background:linear-gradient(90deg,#009099 22px,#008e99 85px,#00aebb 86px,#00edff 87px,#01e9ff 132px,#2ce8ff 145px,#67e6ff 159px,#a9e5ff 172px,#fce3ff 186px,#ffe0fc 187px,#ffc1da 193px,#ffa7be 199px,#ff8fa3 206px,#ff798b 214px,#ff6575 223px,#ff5564 232px,#ff3743 255px,#ff1f27 286px,#ff0c13 324px,#ff0005 368px,#f00 405px,#c60000 406px,#900 407px,#900 408px)"></i><i style="background:linear-gradient(90deg,#008f99 23px,#008c99 85px,#00cbdd 86px,#00eaff 87px,#02e5ff 132px,#2de4ff 145px,#68e2ff 159px,#a9e0ff 172px,#fbdeff 186px,#ffdcfc 187px,#ffbdda 193px,#ffa4be 199px,#ff8da4 206px,#ff778c 214px,#ff6376 223px,#ff5364 232px,#ff3643 255px,#ff1e28 286px,#ff0b13 325px,#ff0005 366px,#f00 406px,#d00 407px,#900 408px,#900 410px)"></i><i style="background:linear-gradient(90deg,#008d99 23px,#008a99 85px,#00c8dd 86px,#00e6ff 87px,#00e2ff 131px,#26e0ff 143px,#64deff 158px,#a9dcff 172px,#fbdaff 186px,#ffd7fd 187px,#ffb9db 193px,#ffa1bf 199px,#ff8aa5 206px,#ff748c 214px,#ff6177 223px,#ff5063 233px,#ff3443 256px,#ff1c28 287px,#ff0a12 327px,#ff0006 364px,#f00 407px,#f40000 408px,#a40000 409px,#900 410px,#900 411px)"></i><i style="background:linear-gradient(90deg,#008b99 23px,#089 85px,#00c5dd 86px,#00e3ff 87px,#01deff 131px,#2bdcff 144px,#65daff 158px,#a9d8ff 172px,#ffd3fd 187px,#ffb6db 193px,#ff9ec0 199px,#ff87a5 206px,#ff728d 214px,#ff5f77 223px,#ff4e64 233px,#ff3343 256px,#ff1b27 288px,#ff0912 328px,#ff0007 362px,#f00 408px,#f40000 409px,#b00 410px,#900 411px,#900 412px)"></i><i style="background:linear-gradient(90deg,#008a99 23px,#008799 85px,#00c2dd 86px,#00e0ff 87px,#01dbff 131px,#2cd9ff 144px,#6ad6ff 159px,#aad4ff 172px,#ffcffd 187px,#ffb2dc 193px,#ff9bc0 199px,#ff84a6 206px,#ff708e 214px,#ff5d78 223px,#ff4d64 233px,#ff3144 256px,#ff1927 289px,#ff0812 330px,#ff0008 360px,#f00 394px,#f00 410px,#d20000 411px,#900 412px,#900 413px)"></i><i style="background:linear-gradient(90deg,#089 24px,#008599 85px,#00c0dd 86px,#0df 87px,#00d7ff 130px,#0ed6ff 135px,#29d5ff 143px,#66d2ff 158px,#aacfff 172px,#ffcbfd 187px,#ffafdc 193px,#ff94bd 200px,#ff7fa3 207px,#ff6b8c 215px,#ff5976 224px,#ff4963 234px,#ff2f44 257px,#ff1827 290px,#ff0712 331px,#ff0009 358px,#ff0001 394px,#f00 411px,#d00 412px,#a40000 413px,#a40000 414px)"></i><i style="background:linear-gradient(90deg,#008799 24px,#008399 85px,#00d0f4 86px,#00daff 87px,#01d4ff 130px,#2ad1ff 143px,#66ceff 158px,#aacbff 172px,#ffc6fe 187px,#ffabdd 193px,#ff91bd 200px,#ff7ca4 207px,#ff698c 215px,#ff5877 224px,#ff4864 234px,#ff2e44 257px,#ff1728 290px,#ff0612 332px,#ff000a 356px,#ff0001 393px,#f00 412px,#f40000 413px,#a40000 414px,#900 415px,#900 416px)"></i><i style="background:linear-gradient(90deg,#008599 24px,#008199 85px,#00d7ff 86px,#01d0ff 130px,#2bceff 143px,#63cbff 157px,#aac7ff 172px,#fac3ff 186px,#ffc2fe 187px,#ffbef8 188px,#ffa4d8 194px,#ff8bba 201px,#ff77a1 208px,#ff658a 216px,#ff5476 225px,#ff4563 235px,#ff2b43 259px,#ff1426 293px,#ff0411 335px,#ff000b 354px,#ff0004 381px,#f00 414px,#b00 415px,#900 416px,#900 417px)"></i><i style="background:linear-gradient(90deg,#008499 24px,#007f99 85px,#00d4ff 86px,#00cdff 129px,#24cbff 141px,#5fc7ff 156px,#a5c3ff 171px,#f9bfff 186px,#febefe 187px,#ffbaf9 188px,#ffa0d9 194px,#ff88ba 201px,#ff75a2 208px,#ff638b 216px,#ff5276 225px,#ff4364 235px,#ff2a43 259px,#ff1427 293px,#ff0411 336px,#ff000c 352px,#ff0004 382px,#f00 415px,#d20000 416px,#900 417px,#900 418px)"></i><i style="background:linear-gradient(90deg,#008299 25px,#007d99 85px,#00d1ff 86px,#01caff 129px,#29c7ff 142px,#64c3ff 157px,#abbfff 172px,#f9bbff 186px,#febafe 187px,#ffb6f9 188px,#ff9dd9 194px,#ff85bb 201px,#ff72a3 208px,#ff608c 216px,#ff5077 225px,#ff4264 235px,#ff2944 259px,#ff1327 293px,#ff0312 336px,#ff000d 350px,#ff0004 382px,#f00 416px,#d00 417px,#a40000 418px,#a40000 419px)"></i><i style="background:linear-gradient(90deg,#008099 25px,#007c99 85px,#00ceff 86px,#01c6ff 129px,#2ac3ff 142px,#65c0ff 157px,#abbbff 172px,#f9b7ff 186px,#feb6fe 187px,#ffb2f9 188px,#ff9ada 194px,#ff83bc 201px,#ff6ea0 209px,#ff5c8a 217px,#ff4d75 226px,#ff3f63 236px,#ff2743 260px,#ff1127 294px,#ff0212 337px,#ff0004 383px,#f00 417px,#f40000 418px,#a40000 419px,#a40000 420px)"></i><i style="background:linear-gradient(90deg,#007f99 25px,#007a99 84px,#0083a4 85px,#00cbff 86px,#00c3ff 128px,#27c0ff 141px,#61bcff 156px,#a6b8ff 171px,#f8b3ff 186px,#feb2ff 187px,#ffaffa 188px,#ff97da 194px,#ff80bc 201px,#ff6ba1 209px,#ff5a8a 217px,#ff4b76 226px,#ff3d64 236px,#ff2544 260px,#ff1127 294px,#ff0112 338px,#ff0004 385px,#f00 419px,#b00 420px,#900 421px,#900 422px)"></i><i style="background:linear-gradient(90deg,#007e99 25px,#007899 84px,#0093bb 85px,#00c8ff 86px,#01c0ff 128px,#28bdff 141px,#62b9ff 156px,#a2b4ff 170px,#f8afff 186px,#feaeff 187px,#ffabfa 188px,#ff93db 194px,#ff7dbd 201px,#ff69a1 209px,#ff588b 217px,#ff4977 226px,#ff3c64 236px,#ff2444 260px,#ff1028 294px,#ff0113 337px,#ff0005 384px,#f00 420px,#d00 421px,#900 422px,#900 423px)"></i><i style="background:linear-gradient(90deg,#007c99 26px,#079 84px,#0091bb 85px,#00c5ff 86px,#01bdff 128px,#2cb9ff 142px,#66b5ff 157px,#a2b1ff 170px,#cbaeff 178px,#fdabff 187px,#ffa7fa 188px,#ff90db 194px,#ff7bbd 201px,#ff67a2 209px,#ff568c 217px,#ff4877 226px,#ff3963 237px,#f24 261px,#ff0f28 295px,#ff0113 337px,#ff0005 384px,#f00 421px,#e80000 422px,#a40000 423px,#a40000 424px)"></i><i style="background:linear-gradient(90deg,#007b99 26px,#007599 84px,#008fbb 85px,#00c3ff 86px,#00baff 127px,#26b6ff 140px,#63b2ff 156px,#a2adff 170px,#d0aaff 179px,#fda7ff 187px,#ffa4fb 188px,#ff8ddc 194px,#ff78be 201px,#ff64a2 209px,#ff548c 217px,#ff4678 226px,#ff3864 237px,#ff2144 261px,#ff0e29 294px,#ff0114 336px,#ff0005 383px,#f00 422px,#f40000 423px,#b00000 424px,#b00000 425px)"></i><i style="background:linear-gradient(90deg,#007999 26px,#007399 84px,#008dbb 85px,#00c0ff 86px,#01b7ff 127px,#27b3ff 140px,#63aeff 156px,#a2aaff 170px,#d0a6ff 179px,#fda3ff 187px,#ffa0fb 188px,#ff8adc 194px,#ff75be 201px,#ff62a3 209px,#ff528d 217px,#ff4479 226px,#ff3665 237px,#ff2045 261px,#ff0d29 294px,#ff0015 335px,#ff0006 384px,#f00 424px,#b00 425px,#b00 426px)"></i><i style="background:linear-gradient(90deg,#007899 26px,#007299 84px,#008bbb 85px,#00bdff 86px,#01b3ff 127px,#2bb0ff 141px,#64abff 156px,#a3a6ff 170px,#d0a3ff 179px,#fd9fff 187px,#ff9dfb 188px,#ff87dc 194px,#ff73bf 201px,#ff60a4 209px,#ff4f8b 218px,#ff4177 227px,#ff3464 238px,#ff1e44 262px,#ff0d2a 294px,#ff0016 333px,#ff0007 380px,#f00 422px,#f40000 423px,#b00000 425px,#900 426px,#900 427px)"></i><i style="background:linear-gradient(90deg,#007699 27px,#007099 84px,#00a2dd 85px,#00baff 86px,#00b1ff 126px,#0fafff 132px,#29adff 140px,#65a8ff 156px,#a3a3ff 170px,#d09fff 179px,#fc9cff 187px,#ff99fc 188px,#ff84dd 194px,#ff70bf 201px,#ff5ea4 209px,#ff4d8c 218px,#ff3f78 227px,#ff3264 238px,#ff1d45 262px,#ff0c2b 293px,#ff0017 331px,#ff0009 374px,#f00 419px,#f40000 420px,#b00000 422px,#900 423px,#900 429px)"></i><i style="background:linear-gradient(90deg,#007599 27px,#006e99 84px,#009fdd 85px,#00b8ff 86px,#01aeff 126px,#29aaff 140px,#65a4ff 156px,#a89fff 171px,#fc98ff 187px,#ff96fc 188px,#ff81dd 194px,#ff6ec0 201px,#ff5ba5 209px,#ff4b8c 218px,#ff3e78 227px,#ff3165 238px,#ff1c44 263px,#ff0c2c 293px,#ff0018 329px,#ff000a 370px,#f00 417px,#900 420px,#900 430px)"></i><i style="background:linear-gradient(90deg,#007399 27px,#006d99 84px,#009ddd 85px,#00b5ff 86px,#01abff 126px,#2aa6ff 140px,#66a1ff 156px,#a89bff 171px,#fc95ff 187px,#ff93fc 188px,#ff7ede 194px,#ff6bc1 201px,#ff59a5 209px,#ff498d 218px,#ff3c79 227px,#ff2f65 238px,#ff1b45 263px,#ff0b2d 292px,#ff0019 327px,#ff000b 368px,#ff0001 414px,#900 417px,#900 431px)"></i><i style="background:linear-gradient(90deg,#007299 27px,#006b99 84px,#009bdd 85px,#00b2ff 86px,#00a8ff 125px,#0fa6ff 131px,#28a4ff 139px,#669eff 156px,#a898ff 171px,#fc91ff 187px,#ff8ffd 188px,#ff7bde 194px,#ff69c1 201px,#ff57a6 209px,#ff478d 218px,#ff3a7a 227px,#ff2e66 238px,#ff1946 263px,#ff0b2e 291px,#ff001b 325px,#ff000c 365px,#ff0002 411px,#e80001 412px,#c60001 413px,#990001 414px,#900 432px)"></i><i style="background:linear-gradient(90deg,#007099 28px,#006a99 84px,#0098dd 85px,#00b0ff 86px,#01a5ff 125px,#28a1ff 139px,#679bff 156px,#a995ff 171px,#ff8cfd 188px,#ff79df 194px,#ff66c2 201px,#ff55a7 209px,#ff458e 218px,#ff397a 227px,#ff2d66 238px,#ff1846 263px,#ff0b2f 290px,#ff001c 323px,#ff000d 362px,#ff0002 408px,#e80002 409px,#a40001 411px,#990001 412px,#900 433px)"></i><i style="background:linear-gradient(90deg,#006f99 28px,#006899 84px,#009ee8 85px,#00adff 86px,#01a2ff 125px,#2d9dff 140px,#6798ff 156px,#a991ff 171px,#ff89fd 188px,#ff73db 195px,#ff61be 202px,#ff51a4 210px,#ff448f 218px,#ff3679 228px,#ff2a65 239px,#ff1746 264px,#ff0a2f 290px,#ff001d 321px,#ff000e 360px,#ff0003 405px,#f40003 406px,#d20002 407px,#a40002 408px,#990001 409px,#900 435px)"></i><i style="background:linear-gradient(90deg,#006e99 28px,#006799 84px,#00abff 85px,#00a0ff 124px,#0f9eff 130px,#279bff 138px,#6495ff 155px,#a98eff 171px,#ff86fe 188px,#ff70db 195px,#ff5fbf 202px,#ff4fa5 210px,#ff428f 218px,#ff3579 228px,#ff2966 239px,#ff1646 264px,#ff0931 289px,#ff001f 319px,#ff0010 357px,#ff0004 402px,#f40004 403px,#b00002 405px,#990002 406px,#900 436px)"></i><i style="background:linear-gradient(90deg,#006c99 29px,#006599 84px,#00a8ff 85px,#019dff 124px,#2b98ff 139px,#6891ff 156px,#ae8bff 172px,#ff82fe 188px,#ff6edb 195px,#ff5dbf 202px,#ff4da5 210px,#ff3f8d 219px,#ff3278 229px,#ff2765 240px,#ff1446 265px,#ff0830 291px,#ff001e 321px,#ff0010 357px,#ff0005 400px,#dd0004 401px,#b00003 402px,#990002 403px,#900 437px)"></i><i style="background:linear-gradient(90deg,#006b99 29px,#006499 84px,#00a6ff 85px,#019aff 124px,#2895ff 138px,#658fff 155px,#a988ff 171px,#fa80ff 187px,#ff7ffe 188px,#ff7cf9 189px,#ff68d8 196px,#ff58bc 203px,#ff49a3 211px,#ff3b8c 220px,#ff2f77 230px,#ff2464 241px,#ff1345 266px,#ff0730 291px,#ff001f 321px,#f01 356px,#ff0006 397px,#990003 400px,#900 438px)"></i><i style="background:linear-gradient(90deg,#006a99 29px,#006299 84px,#00a3ff 85px,#0098ff 123px,#2693ff 137px,#628cff 154px,#aa85ff 171px,#fa7dff 187px,#ff7cfe 188px,#ff79f9 189px,#ff66d8 196px,#ff56bd 203px,#ff47a3 211px,#ff3a8c 220px,#ff2e77 230px,#ff2365 241px,#ff1246 266px,#ff0631 291px,#ff0020 320px,#ff0012 354px,#ff0007 394px,#e80006 395px,#bb0004 396px,#990004 397px,#900 439px)"></i><i style="background:linear-gradient(90deg,#006899 29px,#006199 84px,#00a1ff 85px,#0095ff 123px,#2790ff 137px,#6289ff 154px,#aa82ff 171px,#fa7aff 187px,#fe79fe 188px,#ff76fa 189px,#ff63d8 196px,#ff54bd 203px,#ff45a4 211px,#ff388d 220px,#ff2c78 230px,#ff2265 241px,#ff1146 266px,#ff0632 290px,#ff0020 319px,#ff0013 352px,#ff0007 391px,#e80007 392px,#a40004 394px,#990004 395px,#900 439px)"></i><i style="background:linear-gradient(90deg,#006799 30px,#005f99 83px,#0074bb 84px,#009eff 85px,#0193ff 123px,#288dff 137px,#6387ff 154px,#aa7fff 171px,#f977ff 187px,#fe76fe 188px,#ff73fa 189px,#ff61d9 196px,#ff51be 203px,#ff43a5 211px,#ff368d 220px,#ff2b78 230px,#ff2166 241px,#ff1047 266px,#ff032d 298px,#ff0021 318px,#ff0014 350px,#ff0009 388px,#f40008 389px,#c60006 390px,#a40005 391px,#990005 392px,#900 437px)"></i><i style="background:linear-gradient(90deg,#069 30px,#005e99 83px,#0073bb 84px,#009cff 85px,#0090ff 122px,#258bff 136px,#6384ff 154px,#a17dff 169px,#f974ff 187px,#ff70fa 189px,#ff5ed9 196px,#ff4fbe 203px,#ff41a5 211px,#ff358e 220px,#ff2068 240px,#ff1048 265px,#ff032f 296px,#ff0023 316px,#ff0015 348px,#ff000a 385px,#f40009 386px,#b00006 388px,#990005 389px,#900 434px)"></i><i style="background:linear-gradient(90deg,#006499 30px,#005c99 83px,#0071bb 84px,#009aff 85px,#008eff 122px,#2988ff 137px,#6481ff 154px,#a27aff 169px,#f971ff 187px,#ff6efb 189px,#ff5cda 196px,#ff4dbf 203px,#ff40a6 211px,#ff338e 220px,#ff1f68 240px,#ff0f49 265px,#ff022f 296px,#ff0024 315px,#ff0016 346px,#ff000b 382px,#f4000a 383px,#b00007 385px,#990006 386px,#900 432px)"></i><i style="background:linear-gradient(90deg,#006399 30px,#005b99 83px,#006fbb 84px,#0097ff 85px,#018bff 122px,#2a85ff 137px,#647eff 154px,#a277ff 169px,#cb73ff 178px,#fe6dff 188px,#ff6bfb 189px,#ff59da 196px,#ff4bbf 203px,#ff3ea6 211px,#ff3391 219px,#ff1f6b 239px,#ff0e4a 264px,#ff0230 295px,#ff0025 313px,#ff0017 344px,#ff000b 380px,#990006 383px,#990001 429px)"></i><i style="background:linear-gradient(90deg,#006299 31px,#005a99 83px,#006dbb 84px,#0095ff 85px,#0289ff 122px,#2b83ff 137px,#657bff 154px,#a274ff 169px,#d06fff 179px,#fd6aff 188px,#ff68fb 189px,#ff57db 196px,#ff49c0 203px,#ff3ca7 211px,#ff3192 219px,#ff1d6b 239px,#ff0e4c 263px,#ff0231 294px,#ff0027 311px,#ff0018 342px,#ff000d 377px,#990007 380px,#990001 426px)"></i><i style="background:linear-gradient(90deg,#006099 31px,#005899 83px,#0079d2 84px,#0093ff 85px,#0086ff 121px,#2881ff 136px,#6579ff 154px,#a771ff 170px,#fd67ff 188px,#ff65fc 189px,#ff54db 196px,#ff47c0 203px,#ff3aa7 211px,#ff3092 219px,#ff1c6c 239px,#ff0d4c 263px,#ff0132 293px,#ff0028 310px,#ff0019 340px,#ff000e 374px,#e8000c 375px,#a40008 377px,#990008 378px,#990002 424px)"></i><i style="background:linear-gradient(90deg,#005f99 31px,#005799 83px,#007ddd 84px,#0090ff 85px,#0184ff 121px,#297eff 136px,#6676ff 154px,#a76eff 170px,#fd64ff 188px,#ff62fc 189px,#ff52db 196px,#ff45c1 203px,#ff38a8 211px,#ff2e93 219px,#ff1c6e 238px,#ff0c4e 262px,#ff0134 292px,#ff0029 309px,#ff001b 338px,#ff000f 371px,#e8000d 372px,#a40009 374px,#990008 375px,#990002 421px)"></i><i style="background:linear-gradient(90deg,#005e99 32px,#005699 83px,#007bdd 84px,#008eff 85px,#0282ff 121px,#2a7bff 136px,#6773ff 154px,#a76cff 170px,#fd61ff 188px,#ff60fc 189px,#ff50dc 196px,#ff43c1 203px,#ff36a8 211px,#ff2c94 219px,#ff1a6e 238px,#ff0c4e 262px,#ff0135 291px,#ff002a 307px,#ff001c 335px,#ff0010 368px,#f4000f 369px,#b0000b 371px,#990009 372px,#990002 419px)"></i><i style="background:linear-gradient(90deg,#005d99 32px,#005499 83px,#0079dd 84px,#008cff 85px,#007fff 120px,#2a79ff 136px,#6771ff 154px,#a769ff 170px,#fc5fff 188px,#ff5dfc 189px,#ff50e0 195px,#ff42c5 202px,#ff36ac 210px,#ff2c96 218px,#ff1a71 237px,#ff0b50 261px,#ff0036 290px,#ff002b 306px,#ff001d 333px,#f01 365px,#f40010 366px,#b0000b 368px,#99000a 369px,#990003 416px)"></i><i style="background:linear-gradient(90deg,#005b99 32px,#005399 83px,#07d 84px,#008aff 85px,#017dff 120px,#2b77ff 136px,#686eff 154px,#a766ff 170px,#fc5cff 188px,#ff5afd 189px,#ff4de1 195px,#ff40c6 202px,#ff34ac 210px,#ff2a97 218px,#ff1971 237px,#ff0a51 261px,#ff0038 288px,#ff002c 305px,#ff001e 332px,#ff0012 363px,#dd0010 364px,#b0000c 365px,#99000a 366px,#990003 414px)"></i><i style="background:linear-gradient(90deg,#005a99 32px,#005299 83px,#007ce8 84px,#0087ff 85px,#027bff 120px,#2c74ff 136px,#686cff 154px,#ac63ff 171px,#ff58fd 189px,#ff4be1 195px,#ff3ec6 202px,#ff33ad 210px,#ff2998 218px,#ff1872 237px,#ff0a52 260px,#ff003a 286px,#ff002e 303px,#ff0020 330px,#ff0014 360px,#99000b 363px,#990004 411px)"></i><i style="background:linear-gradient(90deg,#005999 33px,#005099 83px,#0085ff 84px,#0079ff 119px,#2a72ff 135px,#656aff 153px,#a861ff 170px,#ff55fd 189px,#ff49e2 195px,#ff3cc7 202px,#ff31ad 210px,#ff2798 218px,#ff1672 237px,#ff0953 260px,#ff003c 284px,#ff002f 302px,#ff0015 357px,#e80013 358px,#c60010 359px,#99000c 360px,#990004 409px)"></i><i style="background:linear-gradient(90deg,#005899 33px,#004f99 83px,#0083ff 84px,#0176ff 119px,#2a70ff 135px,#6967ff 154px,#ac5eff 171px,#ff53fd 189px,#ff46e2 195px,#ff3ac7 202px,#ff2fae 210px,#ff2699 218px,#ff1573 237px,#ff0954 259px,#ff003e 282px,#ff0031 300px,#ff0017 354px,#e80014 355px,#a4000e 357px,#99000d 358px,#990005 406px)"></i><i style="background:linear-gradient(90deg,#005699 33px,#004e99 83px,#0081ff 84px,#0274ff 119px,#2b6dff 135px,#6a64ff 154px,#ad5bff 171px,#ff50fe 189px,#ff44e2 195px,#ff38c8 202px,#ff2dae 210px,#ff2499 218px,#ff1575 236px,#ff0856 258px,#ff0040 280px,#f03 298px,#ff0018 351px,#f40017 352px,#c60012 353px,#a4000f 354px,#99000e 355px,#990005 404px)"></i><i style="background:linear-gradient(90deg,#059 34px,#004c99 83px,#007fff 84px,#0072ff 118px,#296bff 134px,#6662ff 153px,#ad59ff 171px,#ff4efe 189px,#ff42e3 195px,#ff36c8 202px,#ff2caf 210px,#ff239a 218px,#ff1475 236px,#ff0757 258px,#ff0042 278px,#ff0034 297px,#ff001a 348px,#f40018 349px,#b00011 351px,#99000e 352px,#990006 401px)"></i><i style="background:linear-gradient(90deg,#005499 34px,#004b99 83px,#007dff 84px,#0170ff 118px,#2969ff 134px,#6760ff 153px,#ad56ff 171px,#ff4bfe 189px,#ff40e3 195px,#ff35c8 202px,#ff229d 217px,#ff1378 235px,#ff0758 257px,#ff0045 276px,#ff0035 296px,#ff001b 346px,#d20016 347px,#b00012 348px,#99000f 349px,#990006 398px)"></i><i style="background:linear-gradient(90deg,#005399 34px,#004a99 82px,#005abb 83px,#007bff 84px,#016eff 118px,#2a67ff 134px,#645eff 152px,#a955ff 170px,#fa4aff 188px,#ff47fa 190px,#ff3cdf 196px,#ff31c5 203px,#ff209b 218px,#ff1176 236px,#ff0659 257px,#ff0047 274px,#ff0036 295px,#ff001c 343px,#990010 346px,#990007 396px)"></i><i style="background:linear-gradient(90deg,#005299 35px,#004999 82px,#0059bb 83px,#0079ff 84px,#006cff 117px,#2865ff 133px,#645cff 152px,#a153ff 168px,#cb4dff 178px,#fa47ff 188px,#ff45fa 190px,#ff3ae0 196px,#ff2fc6 203px,#ff1e9b 218px,#ff1077 236px,#ff0559 257px,#ff0049 272px,#ff0037 294px,#ff001e 340px,#e8001b 341px,#bb0015 342px,#901 343px,#990008 393px)"></i><i style="background:linear-gradient(90deg,#005099 35px,#004899 82px,#0057bb 83px,#07f 84px,#016aff 117px,#2963ff 133px,#655aff 152px,#a151ff 168px,#cb4bff 178px,#fa45ff 188px,#ff42fa 190px,#ff38e0 196px,#ff2ec6 203px,#ff1d9c 218px,#ff1079 235px,#ff055b 256px,#ff004c 270px,#ff0039 292px,#ff001f 337px,#e8001c 338px,#a40013 340px,#990012 341px,#990008 391px)"></i><i style="background:linear-gradient(90deg,#004f99 35px,#004699 82px,#0056bb 83px,#0075ff 84px,#0168ff 117px,#2961ff 133px,#6557ff 152px,#a14fff 168px,#fa42ff 188px,#ff40fb 190px,#ff2dca 202px,#ff1c9f 217px,#ff0f7b 234px,#ff045d 255px,#ff004e 268px,#ff003b 290px,#ff0021 334px,#e8001e 335px,#a40015 337px,#990013 338px,#990009 388px)"></i><i style="background:linear-gradient(90deg,#004e99 36px,#004599 82px,#0054bb 83px,#0073ff 84px,#06f 116px,#275fff 132px,#6256ff 151px,#a24cff 168px,#f940ff 188px,#ff3efb 190px,#ff2bcb 202px,#ff1b9f 217px,#ff0e7c 234px,#ff045d 255px,#ff0051 266px,#ff003c 289px,#ff0023 331px,#f40021 332px,#b00017 334px,#990014 335px,#990009 386px)"></i><i style="background:linear-gradient(90deg,#004d99 36px,#049 82px,#005dd2 83px,#0071ff 84px,#0164ff 116px,#2b5cff 133px,#6653ff 152px,#a64aff 169px,#f93eff 188px,#ff3cfb 190px,#ff2acb 202px,#ff1aa0 217px,#ff0d7c 234px,#ff035f 254px,#ff0053 264px,#ff003e 287px,#ff0025 328px,#f40023 329px,#b00018 331px,#990015 332px,#99000a 383px)"></i><i style="background:linear-gradient(90deg,#004c99 36px,#004399 82px,#0060dd 83px,#006fff 84px,#0162ff 116px,#2b5aff 133px,#6751ff 152px,#a647ff 169px,#fe3bff 189px,#ff39fc 190px,#ff28cb 202px,#ff18a0 217px,#ff0c7d 234px,#ff0361 253px,#ff0040 285px,#ff0026 326px,#990016 329px,#99000a 381px)"></i><i style="background:linear-gradient(90deg,#004b99 36px,#004299 82px,#005fdd 83px,#006dff 84px,#0060ff 115px,#2959ff 132px,#644fff 151px,#a645ff 169px,#fd39ff 189px,#ff37fc 190px,#ff26cc 202px,#ff17a1 217px,#ff0b7d 234px,#ff0261 253px,#ff0041 284px,#ff0028 323px,#990017 326px,#99000b 378px)"></i><i style="background:linear-gradient(90deg,#004999 37px,#004199 82px,#005ddd 83px,#006bff 84px,#015eff 115px,#2a57ff 132px,#644dff 151px,#a643ff 169px,#fd36ff 189px,#ff35fc 190px,#ff24cc 202px,#ff16a3 216px,#ff0a80 233px,#ff0263 252px,#f04 282px,#ff002a 320px,#e80026 321px,#a4001a 323px,#990018 324px,#99000c 375px)"></i><i style="background:linear-gradient(90deg,#004899 37px,#003f99 82px,#005bdd 83px,#0069ff 84px,#015cff 115px,#2b55ff 132px,#684aff 152px,#a741ff 169px,#fd34ff 189px,#ff33fc 190px,#ff23cd 202px,#ff15a4 216px,#ff0a82 232px,#ff0165 251px,#ff0045 281px,#ff002c 317px,#e80028 318px,#a4001b 320px,#990019 321px,#99000c 373px)"></i><i style="background:linear-gradient(90deg,#004799 37px,#003e99 82px,#005add 83px,#0067ff 84px,#025aff 115px,#2b53ff 132px,#6948ff 152px,#ab3eff 170px,#fd32ff 189px,#ff31fd 190px,#ff21cd 202px,#ff14a4 216px,#ff0982 232px,#ff0166 250px,#ff0047 279px,#ff002e 314px,#f4002c 315px,#d20025 316px,#a4001d 317px,#99001a 318px,#99000d 370px)"></i><i style="background:linear-gradient(90deg,#004699 38px,#003d99 82px,#06f 83px,#0159ff 114px,#2951ff 131px,#6647ff 151px,#a73dff 169px,#ff2ffd 190px,#ff1fcd 202px,#ff12a5 216px,#ff0883 232px,#ff0067 250px,#ff0048 278px,#ff0030 311px,#f4002e 312px,#b00020 314px,#99001c 315px,#99000e 368px)"></i><i style="background:linear-gradient(90deg,#004599 38px,#003c99 82px,#0064ff 83px,#0157ff 114px,#2a4fff 131px,#6645ff 151px,#ab3aff 170px,#ff2dfd 190px,#ff21d8 199px,#ff16b5 210px,#ff0d97 222px,#ff057e 235px,#ff006a 248px,#ff0053 267px,#ff0041 287px,#ff0032 309px,#dd002b 310px,#b00022 311px,#99001d 312px,#99000f 365px)"></i><i style="background:linear-gradient(90deg,#049 38px,#003b99 82px,#0062ff 83px,#0255ff 114px,#2d4dff 132px,#6a42ff 152px,#ab38ff 170px,#ff2bfd 190px,#ff1fd9 199px,#ff15b8 209px,#ff0c9a 221px,#ff0580 234px,#ff006d 246px,#f05 266px,#ff0043 285px,#ff0034 306px,#99001e 309px,#99000f 363px)"></i><i style="background:linear-gradient(90deg,#004399 39px,#003a99 82px,#0060ff 83px,#0154ff 113px,#2b4bff 131px,#6741ff 151px,#ab36ff 170px,#ff29fe 190px,#ff1ed9 199px,#ff14b9 209px,#ff0b9b 221px,#ff0481 234px,#ff0071 244px,#ff0057 264px,#ff0046 282px,#ff0036 303px,#e80031 304px,#bb0027 305px,#990020 306px,#990010 360px)"></i><i style="background:linear-gradient(90deg,#004299 39px,#003999 82px,#005eff 83px,#0152ff 113px,#2c49ff 131px,#683fff 151px,#ac34ff 170px,#ff27fe 190px,#ff1cd9 199px,#ff12b9 209px,#ff0b9d 220px,#ff0383 233px,#ff006d 247px,#ff0059 263px,#ff0039 300px,#e80033 301px,#a40023 303px,#990021 304px,#901 358px)"></i><i style="background:linear-gradient(90deg,#004199 39px,#003899 81px,#0040b0 82px,#005dff 83px,#0250ff 113px,#2c47ff 131px,#683dff 151px,#ac32ff 170px,#ff25fe 190px,#ff1ada 199px,#ff11ba 209px,#ff099e 220px,#ff0385 232px,#ff006f 246px,#ff005c 261px,#ff003b 297px,#f40038 298px,#c6002d 299px,#a40025 300px,#902 301px,#990012 355px)"></i><i style="background:linear-gradient(90deg,#004099 40px,#003799 81px,#0043bb 82px,#005bff 83px,#014eff 112px,#2a46ff 130px,#683bff 151px,#ac30ff 170px,#ff23fe 190px,#ff19da 199px,#ff11bd 208px,#ff09a0 219px,#ff0388 231px,#ff0072 244px,#ff005f 259px,#ff003e 294px,#f4003b 295px,#b00029 297px,#990023 298px,#990013 352px)"></i><i style="background:linear-gradient(90deg,#003f99 40px,#003699 81px,#0042bb 82px,#0059ff 83px,#014dff 112px,#2b44ff 130px,#6939ff 151px,#ac2eff 170px,#ff21fe 190px,#ff17db 199px,#ff0fbd 208px,#ff08a3 218px,#ff028a 230px,#ff0074 243px,#ff0060 258px,#ff0040 292px,#d20034 293px,#b0002b 294px,#990025 295px,#990013 350px)"></i><i style="background:linear-gradient(90deg,#003d99 41px,#003599 81px,#0040bb 82px,#0057ff 83px,#024bff 112px,#2c42ff 130px,#6937ff 151px,#b02bff 171px,#ff1ffe 190px,#ff15db 199px,#ff0ebe 208px,#ff07a4 218px,#ff028c 229px,#ff0076 242px,#ff0063 256px,#ff0043 289px,#990027 292px,#990014 347px)"></i><i style="background:linear-gradient(90deg,#003c99 41px,#003499 81px,#003fbb 82px,#0056ff 83px,#014aff 111px,#2a41ff 129px,#6336ff 149px,#a12cff 167px,#cc25ff 178px,#fa1eff 189px,#ff1cfb 191px,#ff14db 199px,#ff0cbe 208px,#ff06a4 218px,#ff018d 229px,#ff0078 241px,#ff0065 255px,#ff0045 286px,#990028 289px,#990015 345px)"></i><i style="background:linear-gradient(90deg,#003b99 41px,#039 81px,#0041c6 82px,#0054ff 83px,#0148ff 111px,#2a3fff 129px,#6734ff 150px,#a52aff 168px,#fa1cff 189px,#ff1afb 191px,#ff12dc 199px,#ff0bbf 208px,#ff05a5 218px,#ff008f 228px,#ff007a 240px,#ff0068 253px,#ff0048 283px,#e80041 284px,#a4002d 286px,#990029 287px,#990016 342px)"></i><i style="background:linear-gradient(90deg,#003a99 42px,#003299 81px,#0048dd 82px,#0052ff 83px,#0246ff 111px,#2b3dff 129px,#6732ff 150px,#a528ff 168px,#fa1aff 189px,#ff19fb 191px,#ff11dc 199px,#ff0bc2 207px,#ff04a7 217px,#ff0092 227px,#ff006b 251px,#ff004b 280px,#e80044 281px,#a4002f 283px,#99002b 284px,#990017 340px)"></i><i style="background:linear-gradient(90deg,#003999 42px,#003199 81px,#0046dd 82px,#0050ff 83px,#0045ff 109px,#0244ff 111px,#2b3cff 129px,#6830ff 150px,#a526ff 168px,#fa19ff 189px,#ff17fc 191px,#ff0fdc 199px,#ff09c2 207px,#ff04aa 216px,#ff0094 226px,#ff006e 249px,#ff004f 277px,#f4004a 278px,#b00034 280px,#99002d 281px,#990018 337px)"></i><i style="background:linear-gradient(90deg,#003899 42px,#003099 81px,#0045dd 82px,#004fff 83px,#0143ff 110px,#293aff 128px,#652fff 149px,#a624ff 168px,#fe16ff 190px,#ff15fc 191px,#ff0fe0 198px,#ff09c6 206px,#ff03ad 215px,#ff0097 225px,#ff0071 247px,#ff0052 274px,#f4004d 275px,#b00036 277px,#99002f 278px,#990019 335px)"></i><i style="background:linear-gradient(90deg,#003799 43px,#002f99 81px,#0043dd 82px,#004dff 83px,#0241ff 110px,#2a39ff 128px,#662eff 149px,#a622ff 168px,#fe14ff 190px,#ff14fc 191px,#ff0de1 198px,#ff07c6 206px,#ff02ae 215px,#f09 224px,#ff0073 246px,#ff0054 272px,#990031 275px,#990024 302px,#99001a 332px)"></i><i style="background:linear-gradient(90deg,#003699 43px,#002e99 81px,#0042dd 82px,#004cff 83px,#0041ff 108px,#0240ff 110px,#2d36ff 129px,#692bff 150px,#aa20ff 169px,#fd13ff 190px,#ff12fc 191px,#ff0ce1 198px,#ff06c7 206px,#ff009c 223px,#ff0076 244px,#ff0058 269px,#903 272px,#990025 299px,#99001b 329px)"></i><i style="background:linear-gradient(90deg,#003599 43px,#002d99 81px,#004aff 82px,#013fff 109px,#2b35ff 128px,#662aff 149px,#aa1eff 169px,#fd11ff 190px,#ff10fd 191px,#ff0ae1 198px,#ff06ca 205px,#ff009e 222px,#ff007a 242px,#ff005b 266px,#e80052 267px,#c60045 268px,#990035 269px,#990026 297px,#99001c 327px)"></i><i style="background:linear-gradient(90deg,#003499 44px,#002c99 81px,#0049ff 82px,#023dff 109px,#2c34ff 128px,#6728ff 149px,#aa1dff 169px,#fd10ff 190px,#ff0ffd 191px,#ff09e2 198px,#ff04ca 205px,#ff00a1 221px,#ff007d 240px,#ff005f 263px,#e80055 264px,#a4003b 266px,#990036 267px,#990028 294px,#99001d 324px)"></i><i style="background:linear-gradient(90deg,#039 44px,#002b99 81px,#0047ff 82px,#003cff 107px,#023bff 109px,#2c32ff 128px,#6727ff 149px,#aa1bff 169px,#ff0dfd 191px,#ff04ce 204px,#ff00a4 220px,#ff0081 238px,#ff0063 260px,#f4005d 261px,#d2004f 262px,#a4003d 263px,#990039 264px,#990029 292px,#99001e 322px)"></i><i style="background:linear-gradient(90deg,#003299 45px,#002a99 81px,#0046ff 82px,#003bff 107px,#033aff 109px,#2d30ff 128px,#6b25ff 150px,#ae19ff 170px,#ff0cfd 191px,#ff03ce 204px,#ff00a6 219px,#ff0083 237px,#ff0067 257px,#f40061 258px,#b00044 260px,#99003b 261px,#99002b 289px,#99001f 319px)"></i><i style="background:linear-gradient(90deg,#003199 45px,#002999 81px,#04f 82px,#0039ff 106px,#0338ff 109px,#302eff 129px,#6b23ff 150px,#ae17ff 170px,#ff0afe 191px,#ff02cf 204px,#ff00a9 218px,#ff0087 235px,#ff006a 255px,#d20056 256px,#b00047 257px,#99003d 258px,#99002c 286px,#990020 317px)"></i><i style="background:linear-gradient(90deg,#003099 45px,#002899 80px,#002eb0 81px,#0042ff 82px,#0237ff 108px,#2c2eff 127px,#6922ff 149px,#ab16ff 169px,#ff09fe 191px,#ff01d2 203px,#ff00ac 217px,#ff008b 233px,#ff006e 252px,#990040 255px,#99002e 283px,#990021 314px)"></i><i style="background:linear-gradient(90deg,#002f99 46px,#002799 80px,#0030bb 81px,#0041ff 82px,#0036ff 106px,#0335ff 108px,#2c2cff 127px,#6920ff 149px,#ae14ff 170px,#ff07fe 191px,#ff00d2 203px,#ff00af 216px,#ff008f 231px,#ff0072 249px,#e80067 250px,#bb0052 251px,#990042 252px,#990030 280px,#902 312px)"></i><i style="background:linear-gradient(90deg,#002e99 46px,#002799 80px,#002fbb 81px,#003fff 82px,#0035ff 105px,#0334ff 108px,#2d2bff 127px,#691fff 149px,#ae13ff 170px,#ff06fe 191px,#ff00d6 202px,#ff00b1 215px,#ff0093 229px,#f07 246px,#e8006b 247px,#a4004a 249px,#904 250px,#990031 278px,#990023 309px)"></i><i style="background:linear-gradient(90deg,#002d99 47px,#002699 80px,#002ebb 81px,#003eff 82px,#0034ff 105px,#0432ff 108px,#3029ff 128px,#6d1dff 150px,#af11ff 170px,#ff04fe 191px,#ff00d6 202px,#ff00b4 214px,#ff0095 228px,#ff007c 243px,#f40075 244px,#c6005e 245px,#a4004d 246px,#990047 247px,#903 275px,#990024 307px)"></i><i style="background:linear-gradient(90deg,#002c99 47px,#002599 80px,#002dbb 81px,#003cff 82px,#0032ff 105px,#0431ff 108px,#3127ff 128px,#6d1bff 150px,#af10ff 170px,#ff03fe 191px,#ff00d7 202px,#ff00b7 213px,#ff009a 226px,#ff0081 240px,#f4007a 241px,#b00056 243px,#99004a 244px,#990035 272px,#990026 304px)"></i><i style="background:linear-gradient(90deg,#002c99 47px,#002499 80px,#002ec6 81px,#003bff 82px,#0031ff 104px,#0330ff 107px,#2f26ff 127px,#6b1aff 149px,#af0eff 170px,#ff02ff 191px,#ff00da 201px,#ff00ba 212px,#ff009e 224px,#ff0086 237px,#f4007f 238px,#b00059 240px,#99004d 241px,#990037 269px,#990027 301px)"></i><i style="background:linear-gradient(90deg,#002a99 48px,#002399 80px,#0032dd 81px,#003aff 82px,#0030ff 104px,#042eff 107px,#2f25ff 127px,#6b19ff 149px,#af0dff 170px,#fe01ff 191px,#ff00db 201px,#ff00bd 211px,#ff00a3 222px,#ff008a 235px,#990050 238px,#99003a 266px,#990029 299px)"></i><i style="background:linear-gradient(90deg,#002a99 48px,#029 80px,#0031dd 81px,#0038ff 82px,#002eff 104px,#042dff 107px,#3023ff 127px,#6818ff 148px,#a50dff 167px,#fa00ff 190px,#ff00fb 192px,#ff00db 201px,#ff00c0 210px,#ff00a8 220px,#ff0090 232px,#990053 235px,#99003c 263px,#99002a 296px)"></i><i style="background:linear-gradient(90deg,#002999 49px,#002199 80px,#0030dd 81px,#0037ff 82px,#002dff 104px,#052bff 107px,#3022ff 127px,#6916ff 148px,#a80bff 168px,#fa00ff 190px,#ff00fc 192px,#ff00de 200px,#ff00c3 209px,#f0a 219px,#ff0096 229px,#e80087 230px,#a4005d 232px,#905 233px,#99003d 261px,#99002b 294px)"></i><i style="background:linear-gradient(90deg,#002899 49px,#002099 80px,#002edd 81px,#0035ff 82px,#002cff 103px,#052aff 107px,#3120ff 127px,#6c15ff 149px,#af09ff 170px,#e600ff 185px,#fe00ff 191px,#ff00c9 207px,#ff00b2 216px,#ff009c 226px,#e8008c 227px,#a40061 229px,#990059 230px,#990040 258px,#99002d 291px)"></i><i style="background:linear-gradient(90deg,#002799 49px,#002099 80px,#002ddd 81px,#0034ff 82px,#002aff 103px,#0429ff 106px,#311fff 127px,#6d13ff 149px,#af07ff 170px,#df00ff 183px,#fe00ff 191px,#f0c 206px,#ff00a2 223px,#f40099 224px,#b0006c 226px,#99005d 227px,#990042 255px,#99002e 289px)"></i><i style="background:linear-gradient(90deg,#002699 50px,#001f99 80px,#0031f4 81px,#0032ff 82px,#0029ff 103px,#0528ff 106px,#321dff 127px,#6d12ff 149px,#b006ff 170px,#d700ff 181px,#fe00ff 191px,#ff00d0 205px,#ff00a9 220px,#f400a0 221px,#b00070 223px,#990060 224px,#990045 252px,#990030 286px)"></i><i style="background:linear-gradient(90deg,#002599 50px,#001e99 80px,#0031ff 81px,#0028ff 102px,#0526ff 106px,#331cff 127px,#6d10ff 149px,#b005ff 170px,#d000ff 179px,#fd00ff 191px,#ff00d3 204px,#ff00ae 218px,#dd0095 219px,#b00075 220px,#990065 221px,#990047 250px,#990031 284px)"></i><i style="background:linear-gradient(90deg,#002499 51px,#001d99 80px,#0030ff 81px,#0027ff 102px,#0625ff 106px,#331bff 127px,#6e0fff 149px,#b004ff 170px,#c0f 178px,#fd00ff 191px,#ff00d6 203px,#ff00b6 215px,#990069 218px,#990049 247px,#903 281px)"></i><i style="background:linear-gradient(90deg,#002399 51px,#001c99 80px,#002fff 81px,#0025ff 102px,#0624ff 106px,#3419ff 127px,#6e0eff 149px,#b003ff 170px,#fd00ff 191px,#ff00da 202px,#ff00be 212px,#e800aa 213px,#c60090 214px,#99006d 215px,#99005b 229px,#99004c 244px,#990035 278px)"></i><i style="background:linear-gradient(90deg,#029 52px,#001c99 80px,#002dff 81px,#0025ff 101px,#0722ff 106px,#3418ff 127px,#6e0cff 149px,#b001ff 170px,#fd00ff 191px,#ff00fd 192px,#ff00e1 200px,#ff00c6 209px,#e800b2 210px,#a4007a 212px,#990070 213px,#99004f 241px,#990036 276px)"></i><i style="background:linear-gradient(90deg,#002199 52px,#001b99 79px,#001da4 80px,#002cff 81px,#0023ff 101px,#0821ff 106px,#3517ff 127px,#6f0bff 149px,#b000ff 170px,#fd00ff 191px,#ff00fd 192px,#ff00cf 206px,#f400c3 207px,#c6009c 208px,#a40080 209px,#990075 210px,#990063 223px,#990052 238px,#990038 273px)"></i><i style="background:linear-gradient(90deg,#002199 52px,#001a99 79px,#0020bb 80px,#002bff 81px,#02f 101px,#0820ff 106px,#3515ff 127px,#6f0aff 149px,#b000ff 170px,#fc00ff 191px,#ff00fe 192px,#ff00d8 203px,#f400cb 204px,#b0008f 206px,#99007a 207px,#906 221px,#905 236px,#990045 254px,#99003a 271px)"></i><i style="background:linear-gradient(90deg,#002099 53px,#001999 79px,#001fbb 80px,#0029ff 81px,#0021ff 100px,#091eff 106px,#3614ff 127px,#6f09ff 149px,#b000ff 170px,#fc00ff 191px,#ff00fe 192px,#ff00de 201px,#d200b4 202px,#b00095 203px,#990080 204px,#99006a 218px,#990058 233px,#990047 251px,#99003c 268px)"></i><i style="background:linear-gradient(90deg,#001f99 53px,#001999 79px,#001ebb 80px,#0028ff 81px,#0020ff 100px,#091dff 106px,#3613ff 127px,#7008ff 149px,#b100ff 170px,#fc00ff 191px,#ff00fe 192px,#ff00e8 198px,#990086 201px,#99006e 215px,#99005b 230px,#99004a 248px,#99003d 266px)"></i><i style="background:linear-gradient(90deg,#001e99 54px,#001899 79px,#001dbb 80px,#0027ff 81px,#001eff 100px,#0a1cff 106px,#3712ff 127px,#7006ff 149px,#9700ff 162px,#b100ff 170px,#fc00ff 191px,#ff00fe 192px,#ff00f3 195px,#e800da 196px,#bb00ad 197px,#99008c 198px,#990073 212px,#99005f 227px,#99004d 245px,#990040 263px)"></i><i style="background:linear-gradient(90deg,#001d99 54px,#001799 79px,#001cbb 80px,#0026ff 81px,#001dff 100px,#0a1aff 106px,#3710ff 127px,#7105ff 149px,#9100ff 160px,#b100ff 170px,#fc00ff 191px,#ff00fe 192px,#e800e5 193px,#a4009d 195px,#990090 196px,#990076 210px,#990062 225px,#99004f 243px,#990041 261px)"></i><i style="background:linear-gradient(90deg,#001c99 55px,#001699 79px,#0020dd 80px,#0024ff 81px,#011cff 100px,#2c12ff 122px,#5609ff 139px,#8501ff 156px,#b0f 173px,#f400ff 189px,#e200e8 190px,#a400a4 192px,#990097 193px,#99007d 206px,#906 222px,#990052 240px,#904 258px)"></i><i style="background:linear-gradient(90deg,#001b99 55px,#001699 79px,#001fdd 80px,#0023ff 81px,#001bff 99px,#0f17ff 108px,#2811ff 120px,#5109ff 137px,#8001ff 154px,#b100ff 170px,#e900ff 186px,#e200f4 187px,#a800b0 189px,#940099 190px,#990097 193px,#99007d 206px,#906 222px,#990053 239px,#990046 255px)"></i><i style="background:linear-gradient(90deg,#001a99 56px,#001599 79px,#001edd 80px,#02f 81px,#001aff 99px,#2411ff 118px,#4a09ff 134px,#7701ff 151px,#a800ff 167px,#de00ff 183px,#d700f4 184px,#a000b0 186px,#8e0099 187px,#990097 193px,#99007d 206px,#990069 220px,#905 237px,#990048 253px)"></i><i style="background:linear-gradient(90deg,#001a99 56px,#001499 79px,#001ddd 80px,#0021ff 81px,#0119ff 99px,#2310ff 117px,#4809ff 133px,#7501ff 150px,#a400ff 166px,#d600ff 181px,#870099 184px,#990097 193px,#99007f 205px,#99006a 219px,#990058 235px,#99004b 250px)"></i><i style="background:linear-gradient(90deg,#001999 56px,#001399 79px,#001cdd 80px,#0020ff 81px,#0018ff 98px,#1f10ff 115px,#4308ff 131px,#6d01ff 147px,#9b00ff 163px,#c0f 178px,#810099 181px,#990097 193px,#990080 205px,#99006c 218px,#990059 234px,#99004d 248px)"></i><i style="background:linear-gradient(90deg,#001899 57px,#001399 79px,#001df4 80px,#001eff 81px,#0017ff 98px,#1e0fff 114px,#3f08ff 129px,#6801ff 145px,#9200ff 160px,#c200ff 175px,#b400e8 176px,#8300a4 178px,#7c0099 179px,#990097 193px,#990082 204px,#99006d 217px,#99005b 232px,#99004f 245px)"></i><i style="background:linear-gradient(90deg,#001799 57px,#001299 79px,#001eff 80px,#0116ff 98px,#1810ff 111px,#3809ff 126px,#6001ff 142px,#8a00ff 157px,#b800ff 172px,#ab00e8 173px,#7d00a4 175px,#760099 176px,#990097 193px,#990082 204px,#99006f 216px,#99005c 231px,#990051 243px)"></i><i style="background:linear-gradient(90deg,#001699 58px,#019 79px,#001cff 80px,#0015ff 97px,#150fff 109px,#3408ff 124px,#5902ff 139px,#8100ff 154px,#af00ff 169px,#aa00f4 170px,#9500d2 171px,#7700a4 172px,#700099 173px,#990098 193px,#990084 203px,#990071 215px,#905 240px)"></i><i style="background:linear-gradient(90deg,#001699 58px,#019 79px,#001bff 80px,#0014ff 97px,#130fff 108px,#3008ff 122px,#5402ff 137px,#7c00ff 152px,#a500ff 166px,#a100f4 167px,#7800b0 169px,#6b0099 170px,#990098 193px,#990072 214px,#990057 238px)"></i><i style="background:linear-gradient(90deg,#001599 59px,#001099 79px,#001aff 80px,#0013ff 96px,#120eff 107px,#4f01ff 135px,#70f 150px,#9f00ff 164px,#8d00dd 165px,#7200b0 166px,#650099 167px,#990098 193px,#990074 213px,#99005a 235px)"></i><i style="background:linear-gradient(90deg,#001499 59px,#000f99 78px,#0010a4 79px,#0019ff 80px,#0012ff 96px,#100dff 106px,#4b01ff 133px,#9600ff 161px,#600099 164px,#990098 193px,#990076 212px,#99005d 232px)"></i><i style="background:linear-gradient(90deg,#001399 60px,#000f99 78px,#0012bb 79px,#0018ff 80px,#01f 96px,#0d0dff 104px,#4701ff 131px,#8e00ff 158px,#8400e8 159px,#6c00bb 160px,#5a0099 161px,#990098 193px,#907 211px,#990060 230px)"></i><i style="background:linear-gradient(90deg,#001299 60px,#000e99 78px,#01b 79px,#0017ff 80px,#0010ff 95px,#0c0dff 103px,#4201ff 129px,#8600ff 155px,#7c00e8 156px,#5c00a4 158px,#570099 159px,#990098 193px,#990079 210px,#990063 227px)"></i><i style="background:linear-gradient(90deg,#019 61px,#000d99 78px,#0010bb 79px,#0016ff 80px,#000fff 95px,#0b0cff 102px,#3c02ff 126px,#7d00ff 152px,#7a00f4 153px,#6600c6 154px,#5600a4 155px,#520099 156px,#990098 193px,#99007b 209px,#906 225px)"></i><i style="background:linear-gradient(90deg,#019 61px,#000d99 78px,#000fbb 79px,#0015ff 80px,#000eff 95px,#080cff 100px,#3801ff 124px,#7600ff 149px,#7300f4 150px,#5700b0 152px,#4d0099 153px,#6f0099 172px,#990098 193px,#99007c 208px,#99006a 222px)"></i><i style="background:linear-gradient(90deg,#001099 62px,#000c99 78px,#000fbb 79px,#0013ff 80px,#000dff 94px,#080bff 100px,#3601ff 123px,#7000ff 147px,#5f00d2 148px,#5100b0 149px,#480099 150px,#6d0099 171px,#990098 193px,#99007e 207px,#99006d 220px)"></i><i style="background:linear-gradient(90deg,#000f99 62px,#000c99 78px,#0010dd 79px,#0012ff 80px,#000cff 94px,#070aff 99px,#3201ff 121px,#6900ff 144px,#409 147px,#6b0099 170px,#909 193px,#990080 206px,#990071 217px)"></i><i style="background:linear-gradient(90deg,#000e99 63px,#000b99 78px,#000fdd 79px,#01f 80px,#000bff 94px,#060aff 98px,#2e01ff 119px,#6200ff 141px,#3f0099 144px,#680099 168px,#909 193px,#990080 206px,#990074 215px)"></i><i style="background:linear-gradient(90deg,#000e99 63px,#000a99 78px,#000edd 79px,#0010ff 80px,#000bff 93px,#0509ff 97px,#2801ff 116px,#5b00ff 138px,#5500e8 139px,#3f00a4 141px,#3c0099 142px,#680099 168px,#909 193px,#990082 205px,#990079 212px)"></i><i style="background:linear-gradient(90deg,#000d99 64px,#000a99 78px,#000edd 79px,#000fff 80px,#000aff 93px,#0409ff 96px,#2501ff 114px,#5400ff 135px,#4e00e8 136px,#3b00a4 138px,#380099 139px,#640099 166px,#909 193px,#990084 204px,#99007c 210px)"></i><i style="background:linear-gradient(90deg,#000c99 64px,#000999 78px,#000ddd 79px,#000eff 80px,#0009ff 92px,#0308ff 95px,#2700ff 115px,#4d00ff 132px,#4c00f4 133px,#3a00b0 135px,#340099 136px,#620099 165px,#909 193px,#990081 207px)"></i><i style="background:linear-gradient(90deg,#000b99 65px,#000899 78px,#000ce8 79px,#000dff 80px,#0207ff 94px,#2400ff 113px,#4600ff 129px,#4500f4 130px,#3500b0 132px,#300099 133px,#610099 164px,#909 193px,#990086 204px)"></i><i style="background:linear-gradient(90deg,#000b99 65px,#000899 78px,#000dff 79px,#0107ff 93px,#1b01ff 108px,#4200ff 127px,#2c0099 130px,#5d0099 162px,#909 193px,#99008a 202px)"></i><i style="background:linear-gradient(90deg,#000a99 66px,#000799 78px,#000cff 79px,#0106ff 93px,#1b00ff 108px,#3c00ff 124px,#280099 127px,#5c0099 161px,#980099 193px,#99008f 199px)"></i><i style="background:linear-gradient(90deg,#000999 67px,#000799 78px,#000bff 79px,#0105ff 92px,#1800ff 106px,#3600ff 121px,#3300e8 122px,#2d00c6 123px,#240099 124px,#590099 159px,#980099 193px,#990093 197px)"></i><i style="background:linear-gradient(90deg,#000899 67px,#000699 78px,#000aff 79px,#0105ff 92px,#1500ff 104px,#3000ff 118px,#2e00e8 119px,#2300a4 121px,#209 122px,#540099 156px,#980099 194px)"></i><i style="background:linear-gradient(90deg,#000899 68px,#000699 78px,#0009ff 79px,#0004ff 91px,#1200ff 102px,#2a00ff 115px,#2a00f4 116px,#2600d2 117px,#1f00a4 118px,#1e0099 119px,#510099 154px,#940099 192px)"></i><i style="background:linear-gradient(90deg,#000799 68px,#000599 77px,#0006bb 78px,#0008ff 79px,#0005ff 87px,#0302ff 93px,#2500ff 112px,#2500f4 113px,#1d00b0 115px,#1b0099 116px,#4c0099 151px,#8e0099 189px)"></i><i style="background:linear-gradient(90deg,#000699 69px,#000599 77px,#0005bb 78px,#0007ff 79px,#0102ff 91px,#2100ff 110px,#1d00d2 111px,#1a00b0 112px,#180099 113px,#470099 148px,#8a0099 187px)"></i><i style="background:linear-gradient(90deg,#000699 69px,#000499 77px,#0005bb 78px,#0006ff 79px,#0006ff 80px,#0002ff 90px,#1c00ff 107px,#140099 110px,#430099 145px,#840099 184px)"></i><i style="background:linear-gradient(90deg,#000599 70px,#000499 77px,#0004bb 78px,#0005ff 79px,#0101ff 90px,#1700ff 104px,#1700e8 105px,#1400bb 106px,#109 107px,#3f0099 142px,#7e0099 181px)"></i><i style="background:linear-gradient(90deg,#000499 71px,#000399 77px,#0003bb 78px,#0004ff 79px,#0001ff 89px,#1200ff 101px,#1200e8 102px,#0f00a4 104px,#0f0099 105px,#3c0099 140px,#7b0099 179px)"></i><i style="background:linear-gradient(90deg,#000499 71px,#000399 77px,#0003d2 78px,#0004ff 79px,#00f 89px,#0e00ff 98px,#0f00f4 99px,#0d00c6 100px,#0c00a4 101px,#0c0099 102px,#380099 137px,#750099 176px)"></i><i style="background:linear-gradient(90deg,#000399 72px,#000299 77px,#0003dd 78px,#0003ff 79px,#0100ff 89px,#0900ff 95px,#0a00f4 96px,#0a00b0 98px,#0a0099 99px,#340099 134px,#720099 174px)"></i><i style="background:linear-gradient(90deg,#000299 73px,#000299 77px,#0002dd 78px,#0002ff 79px,#00f 86px,#0500ff 92px,#0600f4 93px,#0700b0 95px,#070099 96px,#300099 131px,#6c0099 171px)"></i><i style="background:linear-gradient(90deg,#000299 73px,#000199 77px,#0001dd 78px,#0001ff 79px,#0300ff 90px,#040099 93px,#2c0099 128px,#690099 169px)"></i><i style="background:linear-gradient(90deg,#000199 74px,#000199 77px,#0001dd 78px,#00f 79px,#00f 87px,#020099 90px,#290099 125px,#640099 166px)"></i><i style="background:linear-gradient(90deg,#009 75px,#009 77px,#0000e8 78px,#00f 79px,#00f 84px,#0000e8 85px,#0000a4 87px,#010099 88px,#250099 122px,#610099 164px)"></i><i style="background:linear-gradient(90deg,#009 76px,#009 77px,#00f 78px,#00f 80px,#00f 84px,#00d 85px,#009 86px,#0a0099 98px,#200099 118px,#5c0099 161px)"></i><i style="background:linear-gradient(90deg,#0000d2 76px,#0000d2 77px,#00f 78px,#00f 85px,#00d 86px,#009 87px,#209 119px,#570099 158px)"></i><i style="background:linear-gradient(90deg,#00f 77px,#00f 86px,#0100dd 87px,#010099 88px,#210099 118px,#540099 156px)"></i><i style="background:linear-gradient(90deg,#00f 78px,#0100ff 87px,#0200dd 88px,#020099 89px,#200099 117px,#500099 153px)"></i><i style="background:linear-gradient(90deg,#00f 79px,#00f 85px,#0300ff 88px,#0400dd 89px,#040099 90px,#200099 117px,#4d0099 151px)"></i><i style="background:linear-gradient(90deg,#00f 80px,#00f 85px,#0500ff 89px,#0500dd 90px,#050099 91px,#1f0099 116px,#490099 148px)"></i><i style="background:linear-gradient(90deg,#00f 80px,#00f 85px,#0700ff 90px,#0700dd 91px,#060099 92px,#1e0099 115px,#460099 146px)"></i><i style="background:linear-gradient(90deg,#00f 81px,#00f 85px,#0900ff 91px,#0900dd 92px,#070099 93px,#1d0099 114px,#420099 143px)"></i><i style="background:linear-gradient(90deg,#00f 82px,#0100ff 85px,#0b00ff 92px,#0b00dd 93px,#080099 94px,#3f0099 141px)"></i><i style="background:linear-gradient(90deg,#00f 83px,#0d00ff 93px,#0c00dd 94px,#0a0099 95px,#3b0099 138px)"></i><i style="background:linear-gradient(90deg,#0300ff 85px,#0f00ff 94px,#0e00dd 95px,#0b0099 96px,#370099 135px)"></i><i style="background:linear-gradient(90deg,#0500ff 86px,#10f 95px,#1000dd 96px,#0c0099 97px,#350099 133px)"></i><i style="background:linear-gradient(90deg,#0700ff 87px,#1300ff 96px,#1200dd 97px,#0d0099 98px,#310099 130px)"></i><i style="background:linear-gradient(90deg,#0900ff 88px,#1500ff 97px,#1400dd 98px,#0f0099 99px,#2f0099 128px)"></i><i style="background:linear-gradient(90deg,#0a00ff 89px,#1700ff 98px,#1800f4 99px,#1100a4 100px,#109 101px,#2b0099 125px)"></i><i style="background:linear-gradient(90deg,#0e00ff 91px,#1900ff 99px,#1a00f4 100px,#1300a4 101px,#120099 102px,#290099 123px)"></i><i style="background:linear-gradient(90deg,#1000ff 92px,#1c00ff 100px,#1c00f4 101px,#1400a4 102px,#140099 103px,#260099 120px)"></i><i style="background:linear-gradient(90deg,#1200ff 93px,#1e00ff 101px,#1e00f4 102px,#1500a4 103px,#150099 104px,#240099 118px)"></i><i style="background:linear-gradient(90deg,#1600ff 95px,#2000ff 102px,#2000f4 103px,#1700a4 104px,#160099 105px,#200099 115px)"></i><i style="background:linear-gradient(90deg,#1800ff 96px,#20f 103px,#2200f4 104px,#1800a4 105px,#180099 106px,#1d0099 112px)"></i><i style="background:linear-gradient(90deg,#1a00ff 97px,#2400ff 104px,#2400f4 105px,#1a00a4 106px,#190099 107px,#1b0099 110px)"></i><i style="background:linear-gradient(90deg,#1e00ff 99px,#2700ff 105px,#2700f4 106px,#2700f4 107px)"></i><i style="background:linear-gradient(90deg,#2000ff 100px,#2500ff 105px)"></i></div>
</div>
<div class="plot" style="left:978px;top:48px;width:433px;height:424px">
<div class="gm" style="clip-path:polygon(185.2px 411.3px,185.2px 411.2px,185.1px 411.3px,185.1px 411.4px,185.0px 411.5px,184.9px 411.5px,184.8px 411.5px,184.6px 411.6px,184.5px 411.7px,184.3px 411.8px,184.2px 411.7px,184.0px 411.7px,183.7px 411.7px,183.5px 411.8px,183.2px 411.8px,182.8px 411.7px,182.3px 411.4px,181.6px 410.8px,180.8px 410.1px,179.7px 409.2px,178.6px 408.1px,177.2px 406.7px,175.5px 405.0px,173.6px 402.9px,171.4px 400.6px,169.1px 398.1px,166.5px 395.3px,163.5px 392.2px,160.0px 388.6px,156.2px 384.5px,152.0px 380.2px,147.4px 375.3px,142.3px 369.6px,136.7px 363.1px,130.8px 355.9px,124.1px 347.2px,116.4px 336.1px,107.5px 322.5px,97.9px 306.5px,87.6px 288.2px,76.8px 267.6px,65.7px 244.9px,54.5px 220.9px,43.7px 196.4px,33.8px 172.0px,25.2px 148.2px,17.9px 125.8px,11.9px 105.4px,7.3px 87.4px,3.9px 71.9px,1.8px 58.7px,0.7px 47.8px,0.6px 38.6px,1.3px 30.9px,2.8px 24.5px,5.1px 19.4px,8.0px 15.4px,11.5px 12.6px,15.4px 10.6px,19.7px 9.4px,24.3px 8.7px,29.1px 8.4px,34.0px 8.2px,39.0px 8.2px,43.9px 8.3px,49.0px 8.5px,54.1px 8.8px,59.5px 9.2px,65.1px 9.7px,70.9px 10.3px,76.9px 11.0px,83.2px 11.7px,89.8px 12.6px,96.7px 13.5px,104.0px 14.5px,111.7px 15.6px,119.7px 16.7px,128.2px 17.9px,137.0px 19.2px,146.3px 20.5px,156.1px 21.9px,166.2px 23.4px,176.8px 24.9px,187.8px 26.6px,199.3px 28.2px,211.1px 30.0px,223.3px 31.7px,235.7px 33.6px,248.4px 35.4px,261.2px 37.3px,273.7px 39.1px,286.0px 40.9px,298.2px 42.7px,310.2px 44.5px,321.8px 46.1px,332.7px 47.7px,343.0px 49.2px,352.7px 50.6px,361.7px 52.0px,370.0px 53.2px,377.7px 54.3px,384.7px 55.3px,391.1px 56.2px,397.0px 57.1px,402.5px 57.9px,407.7px 58.7px,412.5px 59.4px,416.9px 60.0px,421.0px 60.6px,424.6px 61.1px,427.9px 61.6px,430.8px 62.0px,433.3px 62.4px,435.6px 62.7px,437.6px 63.0px,439.4px 63.3px,440.9px 63.5px,442.1px 63.7px,443.0px 63.8px,443.9px 64.0px,444.8px 64.1px,445.5px 64.2px,446.1px 64.3px,446.8px 64.4px,447.4px 64.5px,448.1px 64.6px,448.6px 64.7px,449.1px 64.7px,449.5px 64.8px,449.9px 64.8px,450.1px 64.9px,450.2px 64.9px,450.3px 64.9px,450.4px 64.9px)"><div style="height:8px"></div><i style="background:linear-gradient(90deg,#090 22px,#090 38px,#00b000 39px,#0d0 40px,#0d0 41px,#00c600 42px,#00b000 44px,#090 45px,#090 55px)"></i><i style="background:linear-gradient(90deg,#090 17px,#090 39px,#0f0 40px,#0f0 46px,#00e800 47px,#00d200 49px,#0b0 50px,#0b0 51px,#090 52px,#090 67px)"></i><i style="background:linear-gradient(90deg,#090 14px,#090 39px,#0d0 40px,#0f0 41px,#0f0 53px,#00f400 54px,#0d0 55px,#0d0 56px,#0b0 57px,#0b0 58px,#00a400 59px,#090 60px,#090 76px)"></i><i style="background:linear-gradient(90deg,#090 11px,#090 39px,#00c600 40px,#0f0 41px,#0f0 61px,#0d0 62px,#0d0 63px,#00c600 64px,#00b000 66px,#090 67px,#090 84px)"></i><i style="background:linear-gradient(90deg,#090 10px,#090 39px,#0b0 40px,#0f0 41px,#0f0 68px,#0d0 69px,#0d0 70px,#00d200 71px,#0b0 72px,#0b0 73px,#090 74px,#090 87px,#059900 92px)"></i><i style="background:linear-gradient(90deg,#090 8px,#090 40px,#0f0 41px,#0f0 75px,#00e800 76px,#0d0 77px,#0d0 78px,#0b0 79px,#0b0 80px,#00a400 81px,#090 82px,#090 88px,#139900 100px)"></i><i style="background:linear-gradient(90deg,#090 7px,#090 40px,#00e800 41px,#0f0 42px,#0f0 82px,#00f400 83px,#0d0 84px,#0d0 85px,#0b0 86px,#0b0 87px,#00b000 88px,#019900 89px,#219900 107px)"></i><i style="background:linear-gradient(90deg,#090 6px,#090 40px,#00d200 41px,#0f0 42px,#0f0 87px,#04ff00 90px,#06dd00 91px,#08dd00 92px,#0ac600 93px,#0bbb00 94px,#0dbb00 95px,#0d9900 96px,#319900 113px,#319900 114px)"></i><i style="background:linear-gradient(90deg,#009901 6px,#090 40px,#0b0 41px,#0f0 42px,#0f0 88px,#18ff00 97px,#19e800 98px,#1cd200 100px,#1bbb00 101px,#1ebb00 102px,#1b9900 103px,#439900 120px,#439900 121px)"></i><i style="background:linear-gradient(90deg,#009902 5px,#090 40px,#00a400 41px,#0f0 42px,#0f0 88px,#0fff00 94px,#30ff00 104px,#31f400 105px,#2fdd00 106px,#3d0 107px,#2ebb00 108px,#30bb00 109px,#2da400 110px,#2c9900 111px,#569900 127px,#569900 128px)"></i><i style="background:linear-gradient(90deg,#009902 4px,#090 41px,#00f400 42px,#0f0 43px,#01ff00 89px,#21ff00 100px,#4eff00 112px,#47dd00 113px,#4add00 114px,#46c600 115px,#44b000 117px,#3d9900 118px,#6b9900 134px,#6b9900 135px)"></i><i style="background:linear-gradient(90deg,#009903 4px,#090 41px,#0d0 42px,#0f0 43px,#01ff00 89px,#2bff00 103px,#6bff00 119px,#65e800 120px,#63d200 122px,#5bbb00 123px,#5fbb00 124px,#509900 125px,#829900 141px,#829900 142px)"></i><i style="background:linear-gradient(90deg,#009904 3px,#009901 41px,#00bb01 42px,#00ff01 43px,#0f0 89px,#17ff00 97px,#3aff00 107px,#62ff00 117px,#8bff00 126px,#83e800 127px,#81dd00 128px,#85dd00 129px,#74bb00 130px,#78bb00 131px,#6ca400 132px,#689900 133px,#989900 147px,#999700 149px)"></i><i style="background:linear-gradient(90deg,#009905 3px,#009902 41px,#00b002 42px,#00ff02 43px,#0f0 89px,#1aff00 98px,#45ff00 110px,#78ff00 122px,#aeff00 133px,#abf400 134px,#a0dd00 135px,#a4dd00 136px,#98c600 137px,#8eb000 139px,#7f9900 140px,#989900 147px,#998000 155px,#998000 156px)"></i><i style="background:linear-gradient(90deg,#009906 2px,#009902 42px,#00ff04 43px,#0f0 89px,#24ff00 101px,#59ff00 115px,#94ff00 128px,#daff00 141px,#c2dd00 142px,#c7dd00 143px,#b7c600 144px,#b1bb00 145px,#b6bb00 146px,#989900 147px,#997a00 157px,#996e00 162px,#996e00 163px)"></i><i style="background:linear-gradient(90deg,#009907 2px,#009903 42px,#00dd05 43px,#00ff05 44px,#02ff00 90px,#2aff00 103px,#6f0 118px,#a9ff00 132px,#f8ff00 146px,#feff00 147px,#fffa00 148px,#e8de00 149px,#d2bf00 151px,#bba700 152px,#bba300 153px,#a48c00 154px,#997f00 155px,#996900 164px,#995f00 170px)"></i><i style="background:linear-gradient(90deg,#009908 1px,#009904 42px,#00c606 43px,#00ff07 44px,#02ff00 90px,#2aff00 103px,#6f0 118px,#a9ff00 132px,#f8ff00 146px,#fefe00 147px,#fff900 148px,#ffd400 155px,#f4c600 156px,#ddaf00 157px,#ddac00 158px,#bb8e00 159px,#bb8b00 160px,#a47800 161px,#996d00 162px,#995b00 171px,#995400 176px)"></i><i style="background:linear-gradient(90deg,#009909 1px,#009905 42px,#00bb07 43px,#00ff09 44px,#01ff00 90px,#2aff00 103px,#6f0 118px,#a9ff00 132px,#f9ff00 146px,#fefe00 147px,#fff900 148px,#ffd300 155px,#ffb200 163px,#dd9700 164px,#dd9400 165px,#c68200 166px,#b06e00 168px,#995e00 169px,#994900 183px)"></i><i style="background:linear-gradient(90deg,#00990a 1px,#009906 43px,#00ff0b 44px,#01ff02 90px,#29ff00 103px,#6f0 118px,#a9ff00 132px,#f9ff00 146px,#fefe00 147px,#fff800 148px,#fd0 153px,#ffc100 159px,#f90 170px,#e88900 171px,#d27700 173px,#bb6800 174px,#b60 175px,#995200 176px,#994000 190px)"></i><i style="background:linear-gradient(90deg,#00990b 1px,#009908 43px,#00e80b 44px,#00ff0c 45px,#01ff04 90px,#29ff01 103px,#65ff00 118px,#a9ff00 132px,#faff00 146px,#fffe00 147px,#fff800 148px,#ffd700 154px,#ffb800 161px,#ff9c00 169px,#ff8500 177px,#f47d00 178px,#dd6f00 179px,#dd6d00 180px,#bb5b00 181px,#bb5900 182px,#a44d00 183px,#994600 184px,#993800 197px)"></i><i style="background:linear-gradient(90deg,#00990c 0px,#009909 43px,#00dd0c 44px,#00ff0e 45px,#00ff06 90px,#29ff03 103px,#65ff00 118px,#a9ff00 132px,#faff00 146px,#fffd00 147px,#ffd200 155px,#ffac00 164px,#ff9000 173px,#ff7500 184px,#f46d00 185px,#dd6100 186px,#dd6000 187px,#c65400 188px,#b04800 190px,#993e00 191px,#993200 204px)"></i><i style="background:linear-gradient(90deg,#00990d 0px,#00990a 43px,#00bb0c 44px,#00ff10 45px,#00ff08 90px,#0eff07 95px,#29ff05 103px,#65ff01 118px,#a9ff00 132px,#fbff00 146px,#fffd00 147px,#ffe000 152px,#ffc800 157px,#ffa500 166px,#ff8200 178px,#ff6400 192px,#d50 193px,#dd5400 194px,#d24e00 195px,#b40 196px,#bb4300 197px,#993600 198px,#992c00 211px)"></i><i style="background:linear-gradient(90deg,#00990e 0px,#00990b 43px,#00a40c 44px,#00ff12 45px,#00ff0a 90px,#0dff09 95px,#28ff07 103px,#65ff03 118px,#af0 132px,#fbff00 146px,#fffd00 147px,#ffe000 152px,#ffc300 158px,#ff9b00 169px,#ff7600 183px,#ff5800 199px,#e84f00 200px,#d24500 202px,#bb3c00 203px,#bb3b00 204px,#a43300 205px,#992f00 206px,#992700 217px)"></i><i style="background:linear-gradient(90deg,#00990f 0px,#00990c 44px,#00f413 45px,#00ff14 46px,#00ff0c 90px,#0dff0b 95px,#28ff09 103px,#65ff06 118px,#aaff02 132px,#fcff00 146px,#fffc00 147px,#ffdf00 152px,#ffc300 158px,#ffab00 164px,#ff9400 171px,#ff6d00 187px,#ff4d00 206px,#f44900 207px,#dd4100 208px,#dd4000 209px,#bb3500 210px,#bb3400 211px,#b03000 212px,#992900 213px,#920 224px)"></i><i style="background:linear-gradient(90deg,#091 0px,#00990d 44px,#00dd13 45px,#00ff16 46px,#02ff0e 91px,#2bff0b 104px,#69ff08 119px,#afff04 133px,#fcff01 146px,#fffc01 147px,#ffda00 153px,#ffbe00 159px,#ffa300 166px,#ff8b00 174px,#ff7500 183px,#ff6300 192px,#ff4300 214px,#dd3900 215px,#dd3800 216px,#c63100 217px,#bb2e00 218px,#bb2d00 219px,#992400 220px,#991e00 231px)"></i><i style="background:linear-gradient(90deg,#009912 0px,#00990e 44px,#00c612 45px,#00ff18 46px,#01ff10 91px,#2bff0e 104px,#69ff0a 119px,#afff07 133px,#fcff03 146px,#fffb03 147px,#ffd401 154px,#ffb900 160px,#ff9c00 168px,#ff8500 176px,#ff7000 185px,#ff5c00 196px,#ff3b00 221px,#e83500 222px,#d22e00 224px,#bb2800 225px,#bb2700 226px,#992000 227px,#991b00 238px)"></i><i style="background:linear-gradient(90deg,#009913 0px,#009910 44px,#00b012 45px,#00ff1a 46px,#01ff12 91px,#2bff10 104px,#69ff0d 119px,#afff09 133px,#fdff06 146px,#ffd403 154px,#ffb501 161px,#f90 169px,#ff8000 178px,#ff6a00 188px,#f50 200px,#ff4300 213px,#ff3400 228px,#f43000 229px,#dd2b00 230px,#dd2a00 231px,#bb2300 232px,#bb2300 233px,#a41e00 234px,#991b00 235px,#991700 245px)"></i><i style="background:linear-gradient(90deg,#009914 0px,#091 45px,#00ff1c 46px,#01ff15 91px,#2bff12 104px,#69ff0f 119px,#b0ff0c 133px,#fdff09 146px,#ffd305 154px,#ffb403 161px,#ff9501 170px,#ff7a00 180px,#ff6400 191px,#ff4f00 204px,#ff3c00 219px,#ff2c00 236px,#dd2600 237px,#dd2500 238px,#c62100 239px,#b01c00 241px,#991800 242px,#991400 252px)"></i><i style="background:linear-gradient(90deg,#009915 0px,#009912 45px,#00dd1a 46px,#00ff1e 47px,#00ff17 91px,#2aff15 104px,#69ff12 119px,#b0ff0f 133px,#feff0b 146px,#ffd308 154px,#ffb005 162px,#ff9202 171px,#ff7500 182px,#ff5e00 194px,#ff4900 208px,#ff3700 224px,#ff2700 243px,#dd2100 244px,#dd2000 245px,#d21e00 246px,#bb1a00 247px,#bb1a00 248px,#991500 249px,#991200 258px)"></i><i style="background:linear-gradient(90deg,#009916 0px,#009913 45px,#00d21a 46px,#00ff20 47px,#00ff1a 91px,#0eff19 96px,#2aff17 104px,#69ff14 119px,#b0ff11 133px,#feff0e 146px,#ffd20a 154px,#ffac06 163px,#ff8b03 173px,#ff7001 184px,#ff5800 197px,#ff4300 212px,#ff3100 230px,#f20 250px,#e81e00 251px,#dd1c00 252px,#dd1b00 253px,#bb1700 254px,#bb1600 255px,#a41300 256px,#991200 257px,#990f00 265px)"></i><i style="background:linear-gradient(90deg,#009917 0px,#009915 45px,#00bb19 46px,#0f2 47px,#00ff1c 91px,#0eff1b 96px,#26ff1a 103px,#64ff17 118px,#aaff14 132px,#f8ff11 145px,#fefe11 146px,#fff911 147px,#ffcd0c 155px,#ffa708 164px,#ff8805 174px,#ff6c02 186px,#ff5300 200px,#ff3e00 216px,#ff2c00 235px,#ff1d00 257px,#f41b00 258px,#dd1800 259px,#dd1800 260px,#bb1300 261px,#bb1300 262px,#b01200 263px,#990f00 264px,#990d00 272px)"></i><i style="background:linear-gradient(90deg,#009918 0px,#009916 46px,#00ff24 47px,#00ff1f 91px,#0dff1e 96px,#26ff1d 103px,#64ff1a 118px,#abff17 132px,#f9ff14 145px,#fefe14 146px,#fff813 147px,#ffcc0e 155px,#ffa30a 165px,#ff8206 176px,#ff6503 189px,#ff4d01 204px,#ff3900 221px,#ff2700 241px,#ff1800 265px,#dd1400 266px,#dd1400 267px,#c61200 268px,#bb1000 269px,#bb1000 270px,#990d00 271px,#990b00 279px)"></i><i style="background:linear-gradient(90deg,#009919 0px,#009917 46px,#00e823 47px,#00ff26 48px,#01ff21 92px,#2dff1f 105px,#68ff1d 119px,#abff1a 132px,#fffe17 146px,#fc1 155px,#ffa30c 165px,#ff7f08 177px,#ff6304 190px,#ff4a01 206px,#ff3400 225px,#ff2300 247px,#ff1400 272px,#e81200 273px,#d21000 275px,#bb0e00 276px,#bb0d00 277px,#a40b00 278px,#990a00 279px,#990900 286px)"></i><i style="background:linear-gradient(90deg,#00991b 0px,#009918 46px,#00dd23 47px,#00ff28 48px,#01ff23 92px,#2dff22 105px,#68ff20 119px,#abff1d 132px,#fffd1a 146px,#ffcb14 155px,#ffa20e 165px,#ff7f09 177px,#ff5f05 192px,#ff4602 209px,#ff3000 229px,#ff1f00 252px,#f10 279px,#f41000 280px,#dd0e00 281px,#dd0e00 282px,#bb0b00 283px,#bb0b00 284px,#a40900 285px,#990800 286px,#990700 293px)"></i><i style="background:linear-gradient(90deg,#00991c 0px,#00991a 46px,#00bb1f 47px,#00ff2b 48px,#01ff26 92px,#2cff24 105px,#68ff22 119px,#abff20 132px,#fffd1e 146px,#ffcb16 155px,#ff9f10 166px,#ff790a 179px,#ff5b06 194px,#ff4203 212px,#ff2d00 233px,#ff1b00 258px,#ff0d00 287px,#dd0b00 288px,#dd0b00 289px,#c60900 290px,#b00800 292px,#990700 293px,#990600 299px)"></i><i style="background:linear-gradient(90deg,#00991d 0px,#00991b 46px,#00a41d 47px,#00ff2d 48px,#01ff29 92px,#2cff27 105px,#68ff25 119px,#abff23 132px,#fbff21 145px,#fffd21 146px,#ffdf1c 151px,#ffc618 156px,#ff9b11 167px,#ff770c 180px,#ff5707 196px,#ff3e03 215px,#ff2900 237px,#ff1800 263px,#ff0a00 294px,#e80900 295px,#d20800 297px,#bb0700 298px,#bb0600 299px,#990500 300px,#990400 306px)"></i><i style="background:linear-gradient(90deg,#00991e 0px,#00991c 47px,#00f42d 48px,#00ff2f 49px,#00ff2b 92px,#28ff2a 104px,#63ff28 118px,#a6ff27 131px,#fbff25 145px,#fffc24 146px,#ffde1f 151px,#ffc51b 156px,#ff9a14 167px,#ff740d 181px,#ff5508 197px,#ff3b04 217px,#ff2601 240px,#ff1500 268px,#ff0800 301px,#e80700 302px,#dd0600 303px,#dd0600 304px,#bb0500 305px,#bb0500 306px,#a40400 307px,#990300 308px,#990300 313px)"></i><i style="background:linear-gradient(90deg,#00991f 0px,#00991e 47px,#00dd2b 48px,#00ff31 49px,#00ff2e 92px,#0fff2e 97px,#27ff2d 104px,#63ff2b 118px,#a6ff2a 131px,#fcff28 145px,#fffc27 146px,#ffde22 151px,#ffc41d 156px,#ffab19 162px,#ff9615 168px,#ff710f 182px,#ff5209 199px,#ff3905 219px,#ff2301 244px,#ff1300 273px,#ff0600 308px,#f40500 309px,#dd0400 310px,#dd0400 311px,#c60300 312px,#b00300 314px,#990200 315px,#990200 320px)"></i><i style="background:linear-gradient(90deg,#009921 0px,#00991f 47px,#00c628 48px,#00ff34 49px,#00ff31 92px,#0eff30 97px,#27ff30 104px,#63ff2e 118px,#a6ff2d 131px,#fcff2b 145px,#fffb2b 146px,#ffdd25 151px,#ffbf1f 157px,#ffa71b 163px,#ff9016 170px,#ff6a0f 185px,#ff4a09 204px,#ff3205 225px,#ff1f02 250px,#ff0f00 280px,#ff0300 316px,#dd0200 317px,#dd0200 318px,#c60200 319px,#bb0200 320px,#bb0100 321px,#990100 322px,#900 327px)"></i><i style="background:linear-gradient(90deg,#092 0px,#009921 47px,#00b025 48px,#00ff36 49px,#00ff34 92px,#0eff33 97px,#27ff33 104px,#63ff32 118px,#a0ff30 130px,#cfff30 138px,#fdff2f 145px,#fffb2e 146px,#ffdd28 151px,#ffbf22 157px,#ffa71d 163px,#ff8f18 170px,#ff6811 186px,#ff470a 206px,#ff2f06 228px,#ff1c02 254px,#ff0d00 286px,#ff0100 323px,#e80100 324px,#d20100 326px,#b00 327px,#b00 328px,#a40000 329px,#900 330px,#900 334px)"></i><i style="background:linear-gradient(90deg,#009923 0px,#092 48px,#00ff38 49px,#01ff36 93px,#2aff36 105px,#67ff35 119px,#a0ff34 130px,#d0ff33 138px,#fdff32 145px,#fffa31 146px,#ffdc2b 151px,#ffbe25 157px,#ffa21f 164px,#ff8c1a 171px,#ff6512 187px,#ff450b 207px,#ff2d06 230px,#ff1902 258px,#ff0a00 293px,#f00 330px,#f40000 331px,#d00 332px,#d00 333px,#b00 334px,#b00 335px,#b00000 336px,#900 337px,#900 341px)"></i><i style="background:linear-gradient(90deg,#009924 0px,#009923 48px,#0d3 49px,#00ff3b 50px,#01ff39 93px,#2aff39 105px,#62ff38 118px,#a1ff37 130px,#caff37 137px,#fdff36 145px,#fffa35 146px,#ffdc2e 151px,#ffbe27 157px,#ffa221 164px,#ff8b1c 171px,#ff7618 179px,#ff6313 188px,#ff420c 209px,#ff2907 234px,#ff1602 264px,#ff0600 305px,#f00 338px,#d00 339px,#d00 340px,#c60000 341px,#b00000 343px,#900 344px,#900 348px)"></i><i style="background:linear-gradient(90deg,#009925 0px,#009925 48px,#00d232 49px,#00ff3d 50px,#01ff3c 93px,#2aff3c 105px,#62ff3b 118px,#a6ff3a 131px,#f7ff3a 144px,#feff3a 145px,#fff938 146px,#ffd630 152px,#ffb929 158px,#ff9e23 165px,#ff881e 172px,#ff7319 180px,#ff6115 189px,#ff400d 211px,#ff2707 237px,#ff1303 270px,#ff0200 316px,#f00 345px,#e80000 346px,#d20000 348px,#b00 349px,#b00 350px,#900 351px,#900 354px)"></i><i style="background:linear-gradient(90deg,#009927 0px,#009926 48px,#00bb2f 49px,#00ff40 50px,#01ff3f 93px,#29ff3f 105px,#62ff3e 118px,#a6ff3e 131px,#f8ff3d 144px,#fefe3d 145px,#fff93c 146px,#ffd533 152px,#ffb82c 158px,#ff9d25 165px,#ff851f 173px,#ff6e1a 182px,#ff5c15 191px,#ff3d0e 213px,#ff2307 241px,#ff1003 276px,#ff0100 323px,#f00 352px,#f40000 353px,#d00 354px,#d00 355px,#b00 356px,#b00 357px,#a40000 358px,#900 359px,#900 361px)"></i><i style="background:linear-gradient(90deg,#009928 0px,#009928 49px,#00ff42 50px,#00ff42 93px,#29ff42 105px,#62ff42 118px,#a7ff41 131px,#f8ff41 144px,#fefe41 145px,#fff83f 146px,#ffd536 152px,#ffb82f 158px,#ff9d28 165px,#ff8421 173px,#ff6e1c 182px,#ff5c17 191px,#ff3b0f 214px,#ff2108 244px,#ff0d03 281px,#f00 325px,#f00 359px,#f40000 360px,#d00 361px,#d00 362px,#c60000 363px,#b00000 365px,#900 366px,#900 368px)"></i><i style="background:linear-gradient(90deg,#009929 0px,#009929 49px,#00e83f 50px,#00ff45 51px,#00ff45 93px,#25ff45 104px,#62ff45 118px,#a7ff45 131px,#f9ff45 144px,#fefe45 145px,#fff843 146px,#ffd439 152px,#ffb732 158px,#ff9c2a 165px,#ff8424 173px,#ff6d1e 182px,#ff5a18 192px,#ff390f 216px,#ff1f08 247px,#ff0b03 287px,#f00 324px,#f00 367px,#d00 368px,#d00 369px,#d20000 370px,#b00 371px,#b00 372px,#900 373px,#900 375px)"></i><i style="background:linear-gradient(90deg,#00992a 0px,#00992b 49px,#00dd3e 50px,#00ff47 51px,#00ff48 93px,#0bff48 97px,#25ff48 104px,#5dff48 117px,#a7ff49 131px,#f9ff49 144px,#fffe48 145px,#fff747 146px,#ffd33d 152px,#ffb734 158px,#ff982c 166px,#ff8025 174px,#ff6b1f 183px,#ff5619 194px,#ff3610 218px,#ff1c09 251px,#ff0903 292px,#ff0001 324px,#f00 374px,#e80000 375px,#d20000 377px,#b00 378px,#b00 379px,#a40000 380px,#900 381px,#900 382px)"></i><i style="background:linear-gradient(90deg,#00992c 0px,#00992c 49px,#00bb36 50px,#00ff4a 51px,#00ff4b 93px,#0eff4b 98px,#28ff4b 105px,#66ff4c 119px,#a7ff4c 131px,#fffd4c 145px,#ffd841 151px,#ffb637 158px,#ff9b2f 165px,#ff8328 173px,#ff6c22 182px,#ff571b 193px,#ff4516 205px,#ff3611 218px,#ff1b09 252px,#ff0704 295px,#ff0001 323px,#f00 381px,#f40000 382px,#d00 383px,#d00 384px,#b00 385px,#b00 386px,#b00000 387px,#900 388px,#900 389px)"></i><i style="background:linear-gradient(90deg,#00992d 0px,#00992e 49px,#00a431 50px,#00ff4c 51px,#01ff4e 94px,#2cff4e 106px,#66ff4f 119px,#a7ff50 131px,#faff51 144px,#fffd50 145px,#ffd845 151px,#ffb63a 158px,#ff9731 166px,#ff7f2a 174px,#ff6a23 183px,#ff551d 194px,#ff3512 219px,#ff190a 255px,#ff0604 300px,#ff0002 323px,#f00 389px,#d00 390px,#d00 391px,#c60000 392px,#b00 393px,#b00 395px)"></i><i style="background:linear-gradient(90deg,#00992e 0px,#00992f 50px,#00f44b 51px,#00ff4f 52px,#01ff51 94px,#2cff52 106px,#66ff53 119px,#a7ff54 131px,#fbff55 144px,#fffc54 145px,#ffd748 151px,#ffb53d 158px,#ff9733 166px,#ff7f2c 174px,#ff6724 184px,#ff531e 195px,#ff4218 207px,#ff3213 221px,#ff170a 257px,#ff0404 304px,#ff0002 322px,#f00 396px,#e80000 397px,#d20000 399px,#b00 400px,#b00 402px)"></i><i style="background:linear-gradient(90deg,#009930 0px,#009931 50px,#00dd47 51px,#00ff52 52px,#01ff54 94px,#2bff55 106px,#66ff56 119px,#a7ff57 131px,#fbff59 144px,#fffc58 145px,#ffd74b 151px,#ffb540 158px,#ff9636 166px,#ff7c2d 175px,#ff6525 185px,#ff511f 196px,#ff3114 222px,#ff160b 259px,#ff0405 306px,#ff0003 321px,#f00 400px,#b00 401px,#900 402px,#900 409px)"></i><i style="background:linear-gradient(90deg,#009931 1px,#093 50px,#00c641 51px,#00ff54 52px,#01ff57 94px,#2bff58 106px,#66ff5a 119px,#a7ff5b 131px,#fcff5d 144px,#fffb5c 145px,#ffd64f 151px,#ffb443 158px,#ff9639 166px,#ff7b2f 175px,#ff6427 185px,#ff4f20 197px,#ff3d1a 210px,#ff2f15 224px,#ff150c 261px,#ff0305 308px,#ff0004 321px,#f00 399px,#b00 400px,#900 401px,#900 416px)"></i><i style="background:linear-gradient(90deg,#009932 1px,#009934 50px,#00b03c 51px,#00ff57 52px,#00ff5b 94px,#10ff5b 99px,#2bff5c 106px,#66ff5d 119px,#a2ff5f 130px,#cdff60 137px,#fcff61 144px,#fffb60 145px,#ffd652 151px,#ffb446 158px,#ff953b 166px,#ff7b32 175px,#ff6429 185px,#ff4f22 197px,#ff3d1b 210px,#ff2d16 225px,#ff140c 262px,#ff0306 308px,#ff0004 320px,#f00 398px,#b00 399px,#900 400px,#900 423px)"></i><i style="background:linear-gradient(90deg,#009934 1px,#009936 51px,#00ff5a 52px,#00ff5e 94px,#26ff5f 105px,#61ff61 118px,#a2ff63 130px,#cdff64 137px,#fdff65 144px,#fffa64 145px,#ffd054 152px,#ffaf47 159px,#ff913d 167px,#ff7833 176px,#ff612b 186px,#ff4d23 198px,#ff3a1c 212px,#ff2b16 227px,#ff130d 263px,#ff0206 309px,#f00 397px,#b00 398px,#900 399px,#900 430px)"></i><i style="background:linear-gradient(90deg,#009935 1px,#009937 51px,#00e854 52px,#00ff5d 53px,#00ff61 94px,#0cff62 98px,#26ff63 105px,#61ff65 118px,#a2ff67 130px,#cdff68 137px,#fdff69 144px,#fffa68 145px,#ffcf57 152px,#ffae4a 159px,#ff913f 167px,#ff7735 176px,#ff612d 186px,#ff4c25 198px,#ff3a1d 212px,#ff2b18 227px,#ff130e 263px,#ff0207 309px,#f00 396px,#b00 397px,#900 398px,#900 432px)"></i><i style="background:linear-gradient(90deg,#009937 1px,#009939 51px,#00d24e 52px,#00ff5f 53px,#00ff64 94px,#0bff65 98px,#26ff66 105px,#60ff68 118px,#a8ff6b 131px,#f6ff6e 143px,#fdff6e 144px,#fff96c 145px,#ffcf5b 152px,#ffae4d 159px,#ff9042 167px,#ff7738 176px,#ff602f 186px,#ff4c26 198px,#ff391f 212px,#ff2a19 227px,#ff130f 263px,#ff0208 308px,#ff0001 395px,#b00 396px,#900 397px,#900 432px)"></i><i style="background:linear-gradient(90deg,#009938 1px,#00993b 51px,#00bb48 52px,#00ff62 53px,#01ff68 95px,#29ff6a 106px,#65ff6c 119px,#a8ff6f 131px,#f7ff72 143px,#fefe72 144px,#fff970 145px,#ffce5e 152px,#ffad51 159px,#ff9044 167px,#ff763a 176px,#ff6031 186px,#ff4b28 198px,#ff3920 212px,#ff2a1a 227px,#ff1210 263px,#ff0208 308px,#ff0001 393px,#f40001 394px,#a40001 395px,#990001 396px,#900 432px)"></i><i style="background:linear-gradient(90deg,#009939 1px,#00993c 52px,#00ff65 53px,#01ff6b 95px,#29ff6d 106px,#65ff70 119px,#a8ff73 131px,#f7ff76 143px,#fefe76 144px,#fff874 145px,#ffcd62 152px,#ffad54 159px,#ff8f47 167px,#ff763c 176px,#ff5f33 186px,#ff4b2a 198px,#ff3922 212px,#ff2a1b 227px,#ff1211 263px,#ff0209 307px,#ff0002 392px,#f40002 393px,#a40001 394px,#990001 395px,#900 432px)"></i><i style="background:linear-gradient(90deg,#00993b 2px,#00993e 52px,#00f463 53px,#00ff68 54px,#01ff6f 95px,#29ff71 106px,#60ff74 118px,#a8ff77 131px,#f8ff7b 143px,#fefe7b 144px,#fff878 145px,#ffcd65 152px,#ffac57 159px,#ff8f4a 167px,#ff753e 176px,#ff5f35 186px,#ff4a2c 198px,#ff3823 212px,#ff291d 227px,#ff1212 263px,#ff020a 307px,#ff0002 391px,#f40002 392px,#a40001 393px,#990001 394px,#900 432px)"></i><i style="background:linear-gradient(90deg,#00993c 2px,#009940 52px,#00dd5c 53px,#00ff6b 54px,#01ff72 95px,#28ff75 106px,#60ff78 118px,#a8ff7b 131px,#f8ff7f 143px,#fefe7f 144px,#fff77c 145px,#ffcc69 152px,#ffab5a 159px,#ff8e4c 167px,#ff7441 176px,#ff5e37 186px,#ff4a2d 198px,#ff3825 212px,#ff291e 227px,#ff1213 262px,#ff020b 306px,#ff0003 390px,#f40003 391px,#a40002 392px,#990002 393px,#900 432px)"></i><i style="background:linear-gradient(90deg,#00993e 2px,#009942 52px,#00bb50 53px,#00ff6e 54px,#00ff76 95px,#28ff78 106px,#60ff7b 118px,#a8ff80 131px,#f9ff84 143px,#fffd83 144px,#fff680 145px,#ffcc6c 152px,#ffab5d 159px,#ff8e4f 167px,#ff7443 176px,#ff5e39 186px,#ff492f 198px,#ff3726 212px,#ff291f 227px,#ff1214 262px,#ff020c 306px,#ff0003 389px,#f40003 390px,#a40002 391px,#990002 392px,#900 432px)"></i><i style="background:linear-gradient(90deg,#00993f 2px,#009943 52px,#00a448 53px,#00ff71 54px,#00ff79 95px,#0cff7a 99px,#28ff7c 106px,#65ff80 119px,#a9ff84 131px,#fffd88 144px,#ffd675 150px,#ffb364 157px,#ff9455 165px,#ff7948 174px,#ff613d 184px,#ff4c32 196px,#ff3929 210px,#ff2a22 225px,#ff1216 260px,#ff020d 304px,#ff0004 388px,#f40004 389px,#a40002 390px,#990002 391px,#990001 432px)"></i><i style="background:linear-gradient(90deg,#009941 2px,#009945 53px,#00ff73 54px,#00ff7d 95px,#0cff7e 99px,#27ff80 106px,#64ff84 119px,#a9ff88 131px,#faff8d 143px,#fffd8c 144px,#ffd679 150px,#ffb267 157px,#ff9358 165px,#ff784a 174px,#ff613f 184px,#ff4c34 196px,#ff392b 210px,#ff2a23 225px,#ff1217 260px,#ff020d 304px,#ff0004 387px,#f40004 388px,#a40003 389px,#990002 390px,#990001 432px)"></i><i style="background:linear-gradient(90deg,#009942 2px,#009947 53px,#00dd67 54px,#0f7 55px,#00ff80 95px,#0cff81 99px,#27ff83 106px,#64ff88 119px,#a9ff8d 131px,#fbff92 143px,#fffc91 144px,#ffd57d 150px,#ffb26b 157px,#ff935b 165px,#ff784d 174px,#ff6041 184px,#ff4b36 196px,#ff382c 210px,#ff2924 225px,#ff1218 260px,#ff020e 303px,#ff0005 386px,#f40005 387px,#a40003 388px,#990003 389px,#990001 432px)"></i><i style="background:linear-gradient(90deg,#094 3px,#009949 53px,#00c65e 54px,#00ff7a 55px,#01ff84 96px,#2bff88 107px,#64ff8c 119px,#a3ff91 130px,#d0ff94 137px,#fbff97 143px,#fffb95 144px,#ffd481 150px,#ffb16e 157px,#ff925e 165px,#ff774f 174px,#ff6043 184px,#ff4b38 196px,#ff382e 210px,#ff2926 225px,#ff1219 260px,#ff020f 303px,#ff0005 385px,#dd0005 386px,#a40003 387px,#990003 388px,#990001 432px)"></i><i style="background:linear-gradient(90deg,#009945 3px,#00994b 53px,#00b056 54px,#00ff7d 55px,#01ff88 96px,#2aff8c 107px,#64ff90 119px,#a3ff95 130px,#d1ff98 137px,#fcff9c 143px,#fffb9a 144px,#ffd484 150px,#ffb171 157px,#ff9161 165px,#ff7652 174px,#ff5f45 184px,#ff4a3a 196px,#ff382f 210px,#ff2927 225px,#ff121a 259px,#ff0210 302px,#ff0006 384px,#dd0005 385px,#990004 386px,#990002 432px)"></i><i style="background:linear-gradient(90deg,#009947 3px,#00994c 54px,#00ff80 55px,#01ff8b 96px,#2aff8f 107px,#64ff94 119px,#a3ff9a 130px,#d1ff9d 137px,#fcffa0 143px,#fffa9e 144px,#ffd388 150px,#ffb075 157px,#ff9163 165px,#ff7654 174px,#ff5f47 184px,#ff4a3c 196px,#ff3731 210px,#ff2828 225px,#ff121b 259px,#ff0111 302px,#ff0007 383px,#dd0006 384px,#990004 385px,#990002 432px)"></i><i style="background:linear-gradient(90deg,#009948 3px,#00994e 54px,#00e877 55px,#00ff83 56px,#01ff8f 96px,#2aff93 107px,#64ff99 119px,#a9ff9f 131px,#fdffa5 143px,#fffaa3 144px,#ffd38c 150px,#ffaf78 157px,#ff9066 165px,#ff7557 174px,#ff5e4a 184px,#ff493d 196px,#ff3733 210px,#ff282a 225px,#ff111c 259px,#ff0212 301px,#ff0007 382px,#dd0006 383px,#990004 384px,#990002 432px)"></i><i style="background:linear-gradient(90deg,#00994a 3px,#009950 54px,#00d26e 55px,#00ff86 56px,#00ff93 96px,#11ff95 101px,#29ff97 107px,#63ff9d 119px,#aaffa3 131px,#f6ffaa 142px,#fdffaa 143px,#fff9a7 144px,#ffd290 150px,#ffaf7c 157px,#ff9069 165px,#ff7559 174px,#ff5e4c 184px,#ff493f 196px,#ff3634 210px,#ff282b 225px,#ff111d 259px,#ff0113 301px,#ff0008 381px,#dd0007 382px,#990005 383px,#990002 432px)"></i><i style="background:linear-gradient(90deg,#00994b 4px,#009952 54px,#00bb64 55px,#00ff89 56px,#00ff97 96px,#25ff9b 106px,#63ffa1 119px,#aaffa8 131px,#f6ffaf 142px,#fdffaf 143px,#fff9ac 144px,#ffd294 150px,#ffae7f 157px,#ff8f6c 165px,#ff745c 174px,#ff5d4e 184px,#ff4841 196px,#ff3636 210px,#ff272d 225px,#ff111e 259px,#ff0114 300px,#ff0009 380px,#dd0007 381px,#990005 382px,#990003 432px)"></i><i style="background:linear-gradient(90deg,#00994d 4px,#009954 55px,#00ff8c 56px,#00ff9b 96px,#0cff9c 100px,#24ff9f 106px,#5effa5 118px,#a3ffac 130px,#f7ffb4 142px,#fefeb4 143px,#fff8b0 144px,#ffd198 150px,#ffae83 157px,#ff8f6f 165px,#ff745f 174px,#ff5d50 184px,#ff4843 196px,#ff3638 210px,#ff272e 225px,#ff101f 259px,#ff0115 300px,#ff0009 379px,#dd0008 380px,#990005 381px,#990003 432px)"></i><i style="background:linear-gradient(90deg,#00994e 4px,#009956 55px,#00f489 56px,#00ff90 57px,#00ff9f 96px,#0cffa0 100px,#24ffa3 106px,#5effaa 118px,#a4ffb1 130px,#f7ffb9 142px,#fefeb9 143px,#fff7b5 144px,#ffd09c 150px,#ffad86 157px,#ff8e72 165px,#ff7361 174px,#ff5c53 184px,#ff4845 196px,#ff3539 210px,#ff262f 225px,#ff1121 258px,#ff0116 299px,#ff000a 378px,#dd0008 379px,#990006 380px,#990003 432px)"></i><i style="background:linear-gradient(90deg,#009950 4px,#009958 55px,#00dd7f 56px,#00ff93 57px,#01ffa3 97px,#28ffa8 107px,#63ffaf 119px,#aaffb6 131px,#f8ffbe 142px,#fefebe 143px,#fff7ba 144px,#ffd0a0 150px,#ffac8a 157px,#ff8d75 165px,#ff7364 174px,#ff5c55 184px,#ff4747 196px,#ff353b 210px,#ff2631 225px,#ff1022 258px,#ff0116 299px,#ff000a 377px,#d20008 378px,#990006 379px,#990003 432px)"></i><i style="background:linear-gradient(90deg,#009952 5px,#00995a 55px,#00bb6e 56px,#00ff96 57px,#01ffa7 97px,#28ffac 107px,#63ffb3 119px,#afb 131px,#f8ffc4 142px,#fffdc3 143px,#fff6bf 144px,#ffcfa5 150px,#ffac8d 157px,#ff8d78 165px,#ff7266 174px,#ff5b57 184px,#ff4749 196px,#ff343c 210px,#ff2632 225px,#ff1023 258px,#ff0117 298px,#ff000b 376px,#bb0008 377px,#990007 378px,#990004 432px)"></i><i style="background:linear-gradient(90deg,#009953 5px,#00995c 55px,#00a463 56px,#00ff9a 57px,#01ffab 97px,#2cffb1 108px,#68ffb8 120px,#aaffc0 131px,#fffdc8 143px,#ffd4ad 149px,#ffb094 156px,#ff907e 164px,#ff746b 173px,#ff5d5b 183px,#ff484c 195px,#ff3640 208px,#ff2735 223px,#ff1125 256px,#ff0119 297px,#ff000c 375px,#bb0009 376px,#990007 377px,#990004 432px)"></i><i style="background:linear-gradient(90deg,#095 5px,#00995e 56px,#00ff9d 57px,#01ffaf 97px,#12ffb2 102px,#2bffb5 108px,#68ffbd 120px,#abffc5 131px,#f9ffcf 142px,#fffdcd 143px,#ffd4b1 149px,#ffaf97 156px,#ff8f81 164px,#ff746e 173px,#ff5c5d 183px,#ff474e 195px,#ff3641 208px,#ff2736 223px,#ff1026 256px,#ff011a 296px,#ff000c 374px,#bb0009 375px,#990007 376px,#990004 432px)"></i><i style="background:linear-gradient(90deg,#009956 5px,#009960 56px,#00dd8b 57px,#00ffa1 58px,#00ffb3 97px,#27ffb9 107px,#62ffc1 119px,#a4ffca 130px,#faffd4 142px,#fffcd3 143px,#ffd3b5 149px,#ffaf9b 156px,#ff8f84 164px,#ff7370 173px,#ff5c5f 183px,#ff4750 195px,#ff3543 208px,#ff2638 223px,#ff1027 256px,#ff011a 296px,#ff000d 373px,#bb000a 374px,#990008 375px,#990004 432px)"></i><i style="background:linear-gradient(90deg,#009958 5px,#009962 56px,#00c67f 57px,#00ffa4 58px,#00ffb7 97px,#0dffba 101px,#26ffbe 107px,#62ffc6 119px,#a4ffcf 130px,#fbffda 142px,#fffcd8 143px,#ffd3ba 149px,#ffae9f 156px,#ff8e87 164px,#ff7373 173px,#ff5b62 183px,#ff4652 195px,#ff3545 208px,#ff2639 223px,#ff1029 255px,#ff011c 295px,#ff000e 372px,#bb000a 373px,#990008 374px,#990005 432px)"></i><i style="background:linear-gradient(90deg,#00995a 6px,#009964 56px,#00b073 57px,#00ffa8 58px,#00ffbc 97px,#0dffbe 101px,#26ffc2 107px,#62ffcb 119px,#a4ffd4 130px,#ceffd9 136px,#fbffdf 142px,#fffbdd 143px,#ffd2be 149px,#ffada2 156px,#ff8d8a 164px,#ff7276 173px,#ff5b64 183px,#ff4654 195px,#ff3547 208px,#ff263b 223px,#ff102a 255px,#ff011c 295px,#ff000f 371px,#bb000b 372px,#990009 373px,#990005 432px)"></i><i style="background:linear-gradient(90deg,#00995b 6px,#096 57px,#00ffab 58px,#02ffc0 98px,#2affc7 108px,#67ffd0 120px,#a4ffd9 130px,#ceffdf 136px,#fcffe5 142px,#fffae2 143px,#ffd1c2 149px,#ffada6 156px,#ff8d8e 164px,#ff7279 173px,#ff5a66 183px,#ff4556 195px,#ff3448 208px,#ff253c 223px,#ff102b 255px,#ff011e 294px,#ff000f 370px,#bb000b 371px,#990009 372px,#990005 432px)"></i><i style="background:linear-gradient(90deg,#00995d 6px,#009968 57px,#00e89f 58px,#00ffaf 59px,#01ffc5 98px,#2affcc 108px,#67ffd5 120px,#abffdf 131px,#fcffeb 142px,#fffae7 143px,#ffd1c7 149px,#ffacaa 156px,#ff8c91 164px,#ff717b 173px,#ff5a69 183px,#ff4558 195px,#ff344a 208px,#ff253e 223px,#ff102c 255px,#ff011e 294px,#ff0010 368px,#f4000f 369px,#bb000c 370px,#990009 371px,#990006 432px)"></i><i style="background:linear-gradient(90deg,#00995f 6px,#00996b 57px,#00d292 58px,#00ffb2 59px,#01ffc9 98px,#29ffd0 108px,#61ffd9 119px,#abffe5 131px,#fdfff0 142px,#fff9ec 143px,#ffd0cb 149px,#ffabae 156px,#ff8c94 164px,#ff707e 173px,#ff596b 183px,#ff445a 195px,#ff334c 208px,#ff243f 223px,#ff0f2d 255px,#ff0120 293px,#f01 367px,#f40010 368px,#a4000b 369px,#99000a 370px,#990006 432px)"></i><i style="background:linear-gradient(90deg,#009961 7px,#00996d 57px,#00bb85 58px,#00ffb6 59px,#01ffcd 98px,#29ffd5 108px,#61ffde 119px,#a5ffe9 130px,#f5fff5 141px,#fdfff6 142px,#fff9f1 143px,#ffcfd0 149px,#ffabb2 156px,#ff8b97 164px,#ff7081 173px,#ff596e 183px,#ff445c 195px,#ff334e 208px,#ff2441 223px,#ff0f2e 255px,#ff0121 293px,#ff0012 366px,#f40011 367px,#a4000b 368px,#99000a 369px,#990006 431px)"></i><i style="background:linear-gradient(90deg,#009962 7px,#00996f 58px,#00ffba 59px,#01ffd2 98px,#28ffda 108px,#61ffe3 119px,#a5ffef 130px,#f6fffb 141px,#fdfefc 142px,#fff8f7 143px,#ffcfd4 149px,#ffaab5 156px,#ff8a9b 164px,#ff6f84 173px,#ff5870 183px,#ff435e 195px,#ff324f 208px,#ff2442 223px,#ff0f30 254px,#ff0122 292px,#ff0012 365px,#f40011 366px,#a4000c 367px,#99000b 368px,#990007 431px)"></i><i style="background:linear-gradient(90deg,#009964 7px,#009971 58px,#00f4b5 59px,#00ffbe 60px,#00ffd6 98px,#0effd9 102px,#28ffde 108px,#61ffe9 119px,#9efff3 129px,#dffffd 138px,#fbfbff 142px,#fff7fc 143px,#ffced9 149px,#ffaab9 156px,#ff8da1 163px,#ff7189 172px,#ff5a74 182px,#ff4562 194px,#ff3352 207px,#ff2445 222px,#ff0f32 253px,#ff0123 291px,#ff0013 364px,#f40012 365px,#a4000c 366px,#99000b 367px,#990007 430px)"></i><i style="background:linear-gradient(90deg,#096 7px,#009973 58px,#00dda7 59px,#00ffc1 60px,#00ffdb 98px,#1fffe1 106px,#55ffec 117px,#85fff4 125px,#c1fffe 134px,#fcf4ff 143px,#ffeffb 144px,#ffc8d8 150px,#ffa4b9 157px,#ff869e 165px,#ff6c87 174px,#ff5573 184px,#ff4161 196px,#ff3052 209px,#ff2245 224px,#ff0e32 255px,#ff0124 291px,#ff0014 363px,#f40013 364px,#a4000d 365px,#99000c 366px,#990007 429px)"></i><i style="background:linear-gradient(90deg,#009968 8px,#009976 58px,#00bb90 59px,#00ffc5 60px,#00ffdf 98px,#1effe6 106px,#50fff0 116px,#78fff7 123px,#abfdff 131px,#f7efff 143px,#fdedfe 144px,#ffe7f9 145px,#ffc1d8 151px,#ffa0b9 158px,#ff829f 166px,#ff6888 175px,#ff5374 185px,#ff3f62 197px,#ff2f53 210px,#ff2145 225px,#ff0e33 255px,#ff0025 291px,#ff0015 362px,#f40014 363px,#a4000d 364px,#99000c 365px,#990008 428px)"></i><i style="background:linear-gradient(90deg,#00996a 8px,#009978 58px,#00b08a 59px,#00ffc9 60px,#00ffe4 98px,#11ffe8 103px,#30ffef 110px,#55fff6 117px,#84fefe 125px,#f9e8ff 144px,#fee6fe 145px,#ffe0f8 146px,#ffbbd7 152px,#ff9bb9 159px,#ff7e9f 167px,#ff6588 176px,#ff5075 186px,#ff3d62 198px,#ff2d54 211px,#ff2046 226px,#ff0d34 256px,#ff0026 291px,#ff0016 361px,#f40014 362px,#a4000e 363px,#99000d 364px,#990008 428px)"></i><i style="background:linear-gradient(90deg,#00996b 8px,#00997a 59px,#00ffcd 60px,#01ffe9 99px,#2bfff3 109px,#6bfeff 121px,#a4f3ff 131px,#ffdffd 146px,#ffbbdc 152px,#ff9abd 159px,#ff7ea2 167px,#ff658b 176px,#ff5077 186px,#ff3d65 198px,#ff2d55 211px,#ff1f48 226px,#ff0d35 255px,#ff0027 290px,#ff0016 360px,#f40015 361px,#a4000e 362px,#99000d 363px,#990008 427px)"></i><i style="background:linear-gradient(90deg,#00996d 8px,#00997d 59px,#00ddb5 60px,#00ffd1 61px,#01ffee 99px,#21fff6 107px,#54fdff 117px,#95f0ff 129px,#fcdbff 146px,#ffd7fc 147px,#ffb5db 153px,#ff95bd 160px,#ff7aa2 168px,#ff628b 177px,#ff4e78 187px,#ff3b65 199px,#ff1e48 227px,#ff0c36 256px,#ff0028 290px,#ff0017 359px,#dd0014 360px,#99000e 361px,#990009 426px)"></i><i style="background:linear-gradient(90deg,#00996f 9px,#00997f 59px,#00c6a5 60px,#00ffd5 61px,#01fff3 99px,#14fff8 104px,#2ffffe 110px,#5cf6ff 119px,#a3e7ff 132px,#f7d6ff 146px,#ffd0fb 148px,#ffafda 154px,#ff91bd 161px,#ff76a3 169px,#ff5f8c 178px,#ff4b78 188px,#ff3966 200px,#ff2956 214px,#ff1c48 229px,#ff0c37 257px,#ff0029 289px,#ff0018 358px,#dd0015 359px,#99000e 360px,#990009 425px)"></i><i style="background:linear-gradient(90deg,#009971 9px,#009981 59px,#00bb9e 60px,#00ffd9 61px,#01fff8 99px,#21feff 107px,#5af1ff 119px,#a6e1ff 133px,#f8d1ff 147px,#fecffe 148px,#ffcafa 149px,#ffa5d5 156px,#ff89b9 163px,#ff70a0 171px,#ff5a8a 180px,#ff4777 190px,#ff3665 202px,#ff1b49 230px,#ff0b38 257px,#ff002a 288px,#ff0019 357px,#dd0015 358px,#99000f 359px,#990009 425px)"></i><i style="background:linear-gradient(90deg,#009973 9px,#009984 60px,#0fd 61px,#00fffd 99px,#20f9ff 107px,#58ecff 119px,#a2dcff 133px,#facbff 148px,#fec9fe 149px,#ffc3f8 150px,#ffa0d5 157px,#ff85b9 164px,#ff6da0 172px,#ff588b 181px,#ff4578 191px,#ff3466 203px,#ff1a4a 231px,#ff0b38 258px,#ff002b 288px,#ff001a 356px,#dd0016 357px,#99000f 358px,#99000a 424px)"></i><i style="background:linear-gradient(90deg,#009975 9px,#009986 60px,#00e8cc 61px,#00ffe1 62px,#00fffd 95px,#00fdff 99px,#23f3ff 108px,#60e5ff 121px,#9fd8ff 133px,#ffc2fd 150px,#ff9fd9 157px,#ff84bd 164px,#ff6ca3 172px,#ff578d 181px,#ff457a 191px,#ff3468 203px,#ff1a4b 231px,#ff0b3a 257px,#ff002d 287px,#ff001b 355px,#dd0017 356px,#990010 357px,#99000a 423px)"></i><i style="background:linear-gradient(90deg,#097 10px,#009989 60px,#00d2bc 61px,#00ffe5 62px,#00fffd 90px,#00f8ff 99px,#1eefff 107px,#59e2ff 120px,#a7d1ff 135px,#fcc0ff 150px,#ffbcfc 151px,#ff9ad8 158px,#ff80bd 165px,#ff69a4 173px,#ff548e 182px,#ff437a 192px,#ff3269 204px,#ff194c 232px,#ff0a3b 258px,#ff002e 286px,#ff001b 354px,#dd0018 355px,#990010 356px,#99000a 422px)"></i><i style="background:linear-gradient(90deg,#009979 10px,#00998b 60px,#0ba 61px,#00ffe9 62px,#00fffe 86px,#02f2ff 100px,#25e9ff 109px,#5cdcff 121px,#a4cdff 135px,#f8bcff 150px,#ffb6fb 152px,#ff96d8 159px,#ff7cbc 166px,#ff66a4 174px,#ff528e 183px,#ff417b 193px,#ff3169 205px,#ff184d 233px,#ff0a3c 258px,#ff002f 286px,#ff001c 353px,#dd0018 354px,#901 355px,#99000b 421px)"></i><i style="background:linear-gradient(90deg,#00997b 10px,#00998d 60px,#00a498 61px,#00ffed 62px,#00fffe 82px,#01eeff 100px,#24e4ff 109px,#5ad8ff 121px,#a6c7ff 136px,#f9b6ff 151px,#feb5fe 152px,#ffb0fa 153px,#ff95dc 159px,#ff7cc0 166px,#ff65a7 174px,#ff5393 182px,#ff4381 191px,#ff346f 202px,#ff1c53 227px,#ff0b40 254px,#ff0030 285px,#ff001d 352px,#dd0019 353px,#901 354px,#99000b 421px)"></i><i style="background:linear-gradient(90deg,#00997d 11px,#009990 61px,#00f4e7 62px,#00fff2 63px,#00feff 78px,#01e9ff 100px,#23e0ff 109px,#58d4ff 121px,#a3c3ff 136px,#fab1ff 152px,#ffabf9 154px,#ff90db 160px,#ff78c0 167px,#ff62a7 175px,#ff5193 183px,#ff4181 192px,#ff3270 203px,#ff1a54 228px,#ff0b41 253px,#ff0032 284px,#ff001e 351px,#c60017 352px,#990012 353px,#99000b 420px)"></i><i style="background:linear-gradient(90deg,#00997f 11px,#009993 61px,#00ddd5 62px,#00fff6 63px,#00feff 74px,#01e5ff 100px,#26dbff 110px,#60cdff 123px,#a0bfff 136px,#fbacff 153px,#ffaafd 154px,#ff90df 160px,#ff77c3 167px,#ff62aa 175px,#ff5096 183px,#ff4184 192px,#ff3272 203px,#ff1a55 228px,#ff0b43 253px,#f03 283px,#ff001f 350px,#bb0017 351px,#990012 352px,#99000c 419px)"></i><i style="background:linear-gradient(90deg,#009981 11px,#009995 61px,#00bbb7 62px,#00fffa 63px,#00fdff 70px,#00e1ff 100px,#25d7ff 110px,#5ec9ff 123px,#a7b9ff 138px,#f7a9ff 153px,#ffa4fc 155px,#ff8bde 161px,#ff74c3 168px,#ff5faa 176px,#ff4e96 184px,#ff3f84 193px,#ff3072 204px,#ff1a57 228px,#ff0b44 253px,#ff0035 282px,#ff0020 349px,#bb0017 350px,#990013 351px,#99000c 418px)"></i><i style="background:linear-gradient(90deg,#009983 11px,#009998 61px,#00b0af 62px,#00fffe 63px,#0df 100px,#20d4ff 109px,#5cc6ff 123px,#a4b6ff 138px,#f8a4ff 154px,#ff9ffb 156px,#ff87de 162px,#ff70c3 169px,#ff5caa 177px,#ff4c96 185px,#ff2e73 205px,#ff1857 230px,#ff0a44 254px,#ff0036 282px,#ff0021 348px,#bb0018 349px,#990013 350px,#99000c 418px)"></i><i style="background:linear-gradient(90deg,#009985 12px,#009799 62px,#00fbff 63px,#00d9ff 100px,#1fd0ff 109px,#56c3ff 122px,#a1b2ff 138px,#f9a0ff 155px,#ff9afa 157px,#ff83dd 163px,#ff6dc3 170px,#ff59aa 178px,#ff4997 186px,#ff2d73 206px,#ff1858 230px,#ff0a46 253px,#ff0037 281px,#f02 347px,#bb0019 348px,#990014 349px,#99000d 417px)"></i><i style="background:linear-gradient(90deg,#009987 12px,#009998 52px,#009599 62px,#00d6dd 63px,#00f6ff 64px,#00d5ff 100px,#1eccff 109px,#5dbdff 124px,#a3aeff 139px,#ff99fe 157px,#ff82e1 163px,#ff6cc6 170px,#ff58ad 178px,#ff4999 186px,#ff2c75 206px,#ff175a 230px,#ff0a48 253px,#ff0039 280px,#ff0023 346px,#bb0019 347px,#990015 348px,#99000d 416px)"></i><i style="background:linear-gradient(90deg,#009989 12px,#009998 48px,#009299 62px,#00bdc6 63px,#00f2ff 64px,#02d0ff 101px,#29c6ff 112px,#64b8ff 126px,#a0aaff 139px,#fc97ff 157px,#ff94fd 158px,#ff7ee0 164px,#ff69c6 171px,#ff56ad 179px,#ff469a 187px,#ff2b76 207px,#ff165a 231px,#ff0a49 253px,#ff003a 280px,#ff0024 345px,#bb001a 346px,#990015 347px,#99000e 415px)"></i><i style="background:linear-gradient(90deg,#00998c 13px,#099 44px,#009099 62px,#00afbb 63px,#0ef 64px,#01cdff 101px,#24c3ff 111px,#5eb5ff 125px,#a7a5ff 141px,#f894ff 157px,#ff90fc 159px,#ff7ae0 165px,#ff66c6 172px,#ff53ad 180px,#ff449a 188px,#ff2976 208px,#ff155b 232px,#ff094a 254px,#ff003b 279px,#ff0025 344px,#bb001b 345px,#990016 346px,#99000e 415px)"></i><i style="background:linear-gradient(90deg,#00998e 13px,#099 40px,#008d99 63px,#00ebff 64px,#01c9ff 101px,#23c0ff 111px,#5cb2ff 125px,#a4a2ff 141px,#f990ff 158px,#ff8bfb 160px,#ff76df 166px,#ff62c5 173px,#ff50ae 181px,#ff429a 189px,#ff2877 209px,#ff145b 233px,#ff094b 254px,#ff003d 278px,#ff0026 342px,#f40024 343px,#b0001a 344px,#990016 345px,#99000e 414px)"></i><i style="background:linear-gradient(90deg,#009990 13px,#099 35px,#008b99 63px,#00d2e8 64px,#00e6ff 65px,#01c6ff 101px,#22bcff 111px,#5aafff 125px,#a69dff 142px,#fa8cff 159px,#ff87fa 161px,#ff72df 167px,#ff5fc5 174px,#ff4eae 182px,#ff409a 190px,#ff2677 210px,#ff135c 234px,#ff084c 254px,#ff003e 277px,#ff0027 341px,#f40025 342px,#a40019 343px,#990017 344px,#99000f 413px)"></i><i style="background:linear-gradient(90deg,#009992 13px,#009899 31px,#008999 63px,#00bbd2 64px,#00e2ff 65px,#00c2ff 101px,#25b8ff 112px,#61a9ff 127px,#a49aff 142px,#ff86fe 161px,#ff72e2 167px,#ff5fc8 174px,#ff4db0 182px,#ff3f9d 190px,#ff277b 209px,#ff135e 233px,#ff094e 253px,#ff003f 277px,#ff0028 340px,#f40026 341px,#a40019 342px,#990017 343px,#99000f 412px)"></i><i style="background:linear-gradient(90deg,#009994 14px,#009899 27px,#008799 63px,#00a4bb 64px,#00dfff 65px,#00bfff 101px,#24b5ff 112px,#5fa6ff 127px,#a197ff 142px,#fc84ff 161px,#ff82fd 162px,#ff6ee2 168px,#ff5cc8 175px,#ff4bb0 183px,#ff3d9d 191px,#ff267b 210px,#ff125f 234px,#ff084f 254px,#ff0041 276px,#ff0029 339px,#f40027 340px,#a4001a 341px,#990018 342px,#990010 411px)"></i><i style="background:linear-gradient(90deg,#009996 14px,#009899 23px,#008599 63px,#008ea4 64px,#00dbff 65px,#00bcff 101px,#20b2ff 111px,#5ea3ff 127px,#a793ff 144px,#f881ff 161px,#ff7dfc 163px,#ff6be1 169px,#ff59c8 176px,#ff48b1 184px,#ff3b9d 192px,#ff247c 211px,#ff1160 235px,#ff0850 254px,#ff0043 275px,#ff0035 304px,#ff002a 338px,#f40028 339px,#a4001b 340px,#990019 341px,#990010 411px)"></i><i style="background:linear-gradient(90deg,#009998 14px,#008299 64px,#00cef4 65px,#00d7ff 66px,#02b8ff 102px,#26aeff 113px,#609fff 128px,#a98fff 145px,#f97eff 162px,#ff79fb 164px,#ff67e1 170px,#ff56c8 177px,#ff46b1 185px,#ff399e 193px,#ff237c 212px,#ff1060 236px,#f04 274px,#ff0037 303px,#ff002b 337px,#f40029 338px,#a4001b 339px,#990019 340px,#990010 410px)"></i><i style="background:linear-gradient(90deg,#009799 15px,#008099 64px,#00b8dd 65px,#00d4ff 66px,#01b5ff 102px,#25abff 113px,#5a9dff 127px,#a78cff 145px,#fa7aff 163px,#ff75fa 165px,#ff64e0 171px,#ff53c8 178px,#ff44b1 186px,#ff379e 194px,#ff217d 213px,#ff1061 237px,#ff0045 274px,#ff0037 303px,#ff002c 336px,#f4002a 337px,#a4001c 338px,#99001a 339px,#901 409px)"></i><i style="background:linear-gradient(90deg,#009599 15px,#007e99 64px,#009abb 65px,#00d1ff 66px,#01b2ff 102px,#28a7ff 114px,#6598ff 130px,#a489ff 145px,#ff75fd 165px,#ff63e4 171px,#ff53cb 178px,#ff43b3 186px,#ff37a0 194px,#ff217f 213px,#ff1063 236px,#ff0047 273px,#ff0039 302px,#ff002d 335px,#f4002b 336px,#a4001d 337px,#99001b 338px,#901 408px)"></i><i style="background:linear-gradient(90deg,#009399 15px,#007c99 64px,#008eb0 65px,#00cdff 66px,#01afff 102px,#23a5ff 113px,#5f96ff 129px,#9d88ff 144px,#fd73ff 165px,#ff71fd 166px,#ff60e3 172px,#ff50ca 179px,#ff41b3 187px,#ff35a1 195px,#ff207f 214px,#ff0f64 237px,#ff0049 272px,#ff003a 301px,#ff002e 334px,#e8002a 335px,#a4001d 336px,#99001b 337px,#990012 408px)"></i><i style="background:linear-gradient(90deg,#009199 15px,#007a99 65px,#00caff 66px,#01acff 102px,#22a2ff 113px,#5d93ff 129px,#a882ff 147px,#f971ff 165px,#ff6dfc 167px,#ff5de2 173px,#ff4dca 180px,#ff3fb3 188px,#ff33a1 196px,#ff1e7f 215px,#ff0e64 238px,#ff004b 271px,#ff003c 299px,#ff002f 333px,#dd0029 334px,#99001c 335px,#990012 407px)"></i><i style="background:linear-gradient(90deg,#008e99 16px,#007899 65px,#00addd 66px,#00c6ff 67px,#00a9ff 102px,#229fff 113px,#5c91ff 129px,#a580ff 147px,#fa6dff 166px,#ff6afb 168px,#ff5ae2 174px,#ff4bca 181px,#ff31a1 197px,#ff1d80 216px,#ff0d65 239px,#ff004c 271px,#ff003d 299px,#ff0030 332px,#dd002a 333px,#99001d 334px,#990013 406px)"></i><i style="background:linear-gradient(90deg,#008c99 16px,#007699 65px,#0099c6 66px,#00c3ff 67px,#00a6ff 102px,#219dff 113px,#5a8eff 129px,#a77dff 148px,#fb6aff 167px,#ff66fa 169px,#ff57e1 175px,#ff48ca 182px,#ff2fa1 198px,#ff1c80 217px,#ff0d66 239px,#ff004e 270px,#ff003e 298px,#ff0032 331px,#dd002b 332px,#99001d 333px,#990013 405px)"></i><i style="background:linear-gradient(90deg,#008b99 16px,#007599 65px,#008ebb 66px,#00c1ff 67px,#00a4ff 102px,#2399ff 114px,#608aff 131px,#a47aff 148px,#ff66fd 169px,#ff56e5 175px,#ff48cd 182px,#ff2fa3 198px,#ff1b82 217px,#ff0c68 239px,#ff004f 269px,#ff0040 297px,#f03 330px,#dd002c 331px,#99001e 332px,#990013 405px)"></i><i style="background:linear-gradient(90deg,#089 17px,#007299 66px,#00beff 67px,#02a0ff 103px,#2995ff 116px,#6387ff 132px,#a278ff 148px,#fd64ff 169px,#ff62fd 170px,#ff53e4 176px,#ff45cc 183px,#ff2da4 199px,#ff1a83 218px,#ff0c68 240px,#ff0051 268px,#ff0041 296px,#ff0034 329px,#dd002d 330px,#99001f 331px,#990014 404px)"></i><i style="background:linear-gradient(90deg,#008699 17px,#007199 66px,#00aae8 67px,#00baff 68px,#019eff 103px,#2593ff 115px,#6184ff 132px,#a874ff 150px,#f962ff 169px,#ff5ffc 171px,#ff51e4 177px,#ff43cc 184px,#ff2ca4 200px,#ff1983 219px,#ff0b69 241px,#ff0052 268px,#ff0042 296px,#ff0035 328px,#dd002e 329px,#99001f 330px,#990014 403px)"></i><i style="background:linear-gradient(90deg,#008599 17px,#006f99 66px,#00a0dd 67px,#00b7ff 68px,#019bff 103px,#2491ff 115px,#5c83ff 131px,#a572ff 150px,#fa5fff 170px,#ff5cfb 172px,#ff4ee3 178px,#ff41cc 185px,#ff2ba6 200px,#ff1985 219px,#ff0a6a 241px,#ff0054 267px,#f04 295px,#ff0036 327px,#dd002f 328px,#990020 329px,#990015 402px)"></i><i style="background:linear-gradient(90deg,#008299 18px,#006d99 66px,#0085bb 67px,#00b5ff 68px,#0199ff 103px,#278eff 116px,#627fff 133px,#a76fff 151px,#ff5bfe 172px,#ff40cf 185px,#ff29a6 201px,#ff1887 219px,#ff0a6c 241px,#ff0056 266px,#ff0045 294px,#ff0037 326px,#dd0030 327px,#990021 328px,#990015 402px)"></i><i style="background:linear-gradient(90deg,#008199 18px,#006c99 66px,#0073a4 67px,#00b2ff 68px,#0096ff 103px,#268bff 116px,#607dff 133px,#a16eff 150px,#ff58fd 173px,#ff4be6 179px,#ff3ece 186px,#ff29a8 201px,#ff1787 220px,#ff096c 242px,#ff0058 265px,#ff0047 293px,#ff0039 325px,#bb0029 326px,#902 327px,#990016 401px)"></i><i style="background:linear-gradient(90deg,#007f99 18px,#006a99 67px,#00a8f4 68px,#00afff 69px,#0094ff 103px,#228aff 115px,#5f7bff 133px,#9e6cff 150px,#fd57ff 173px,#ff55fd 174px,#ff48e5 180px,#ff3cce 187px,#ff26a6 203px,#ff1687 221px,#ff086d 243px,#ff005a 264px,#ff0050 279px,#ff003a 324px,#bb002a 325px,#902 326px,#990016 400px)"></i><i style="background:linear-gradient(90deg,#007d99 19px,#006899 67px,#0096dd 68px,#00acff 69px,#0091ff 103px,#2188ff 115px,#5d78ff 133px,#a867ff 153px,#fa55ff 173px,#ff52fc 175px,#ff39ce 188px,#ff26a9 203px,#ff1589 221px,#ff086e 243px,#ff005c 263px,#ff0052 278px,#ff003b 323px,#bb002b 324px,#990023 325px,#990017 399px)"></i><i style="background:linear-gradient(90deg,#007b99 19px,#006799 67px,#0085c6 68px,#0af 69px,#028eff 104px,#2784ff 117px,#5f75ff 134px,#aa64ff 154px,#fb52ff 174px,#ff4ffb 176px,#ff37ce 189px,#ff24a9 204px,#ff1489 222px,#ff076e 244px,#ff005d 263px,#ff0052 279px,#ff003c 322px,#bb002c 323px,#990024 324px,#990017 398px)"></i><i style="background:linear-gradient(90deg,#007a99 19px,#006599 67px,#0074b0 68px,#00a7ff 69px,#018cff 104px,#2981ff 118px,#6572ff 136px,#a762ff 154px,#ff4efe 176px,#ff37d0 189px,#ff24ab 204px,#ff148b 222px,#ff0770 244px,#ff005f 262px,#ff0054 278px,#ff003e 321px,#bb002d 322px,#990024 323px,#990017 398px)"></i><i style="background:linear-gradient(90deg,#007899 20px,#006499 68px,#00a5ff 69px,#018aff 104px,#287fff 118px,#6370ff 136px,#a561ff 154px,#ff4cfd 177px,#ff35d0 190px,#ff22ab 205px,#ff138c 223px,#ff0771 244px,#ff0062 261px,#f05 278px,#ff003f 320px,#bb002e 321px,#990025 322px,#990018 397px)"></i><i style="background:linear-gradient(90deg,#007699 20px,#006299 68px,#008ddd 69px,#00a2ff 70px,#0188ff 104px,#277dff 118px,#626eff 136px,#9f60ff 153px,#fd4bff 177px,#ff49fc 178px,#ff33d0 191px,#ff21ab 206px,#ff128c 224px,#ff0672 245px,#ff0063 261px,#ff0056 278px,#ff0040 319px,#bb002f 320px,#990026 321px,#990018 396px)"></i><i style="background:linear-gradient(90deg,#007599 20px,#006199 68px,#0084d2 69px,#00a0ff 70px,#0186ff 104px,#237cff 117px,#5d6dff 135px,#a85bff 156px,#fa49ff 177px,#ff46fc 179px,#ff31d0 192px,#ff1fab 207px,#ff118c 225px,#ff0572 246px,#ff0065 260px,#ff0057 278px,#ff0041 318px,#bb0030 319px,#990027 320px,#990019 395px)"></i><i style="background:linear-gradient(90deg,#007399 21px,#005f99 68px,#0074bb 69px,#009eff 70px,#0084ff 104px,#237aff 117px,#5c6bff 135px,#a65aff 156px,#fb47ff 178px,#ff44fb 180px,#ff2fcf 193px,#ff1eab 208px,#ff108e 225px,#ff0574 246px,#ff0067 259px,#ff0059 277px,#ff0043 316px,#f40040 317px,#a4002b 318px,#990028 319px,#990019 395px)"></i><i style="background:linear-gradient(90deg,#007299 21px,#005e99 69px,#009bff 70px,#0082ff 104px,#2577ff 118px,#6168ff 137px,#a458ff 156px,#ff43fe 180px,#ff33db 190px,#ff23bb 202px,#ff17a0 215px,#ff0d88 230px,#ff016d 254px,#ff0062 267px,#ff0045 315px,#f40041 316px,#a4002c 317px,#990028 318px,#99001a 394px)"></i><i style="background:linear-gradient(90deg,#007099 21px,#005c99 69px,#008ce8 70px,#09f 71px,#0080ff 104px,#2176ff 117px,#6066ff 137px,#a256ff 156px,#ff41fd 181px,#ff31db 191px,#f2b 203px,#ff16a0 216px,#ff0c89 231px,#ff016d 255px,#ff0063 267px,#ff0046 314px,#f40042 315px,#a4002d 316px,#990029 317px,#99001a 393px)"></i><i style="background:linear-gradient(90deg,#006e99 22px,#005b99 69px,#0083dd 70px,#0096ff 71px,#017dff 105px,#2672ff 119px,#6263ff 138px,#aa52ff 159px,#fa41ff 180px,#ff3efc 182px,#ff2fda 192px,#ff21bd 203px,#ff16a2 216px,#ff0b8a 231px,#ff016f 255px,#ff0064 267px,#ff0047 313px,#f40044 314px,#a4002d 315px,#99002a 316px,#99001b 392px)"></i><i style="background:linear-gradient(90deg,#006d99 22px,#005a99 69px,#006dbb 70px,#0094ff 71px,#017bff 105px,#2671ff 119px,#6062ff 138px,#a851ff 159px,#fb3fff 181px,#ff3cfc 183px,#ff2dda 193px,#ff20bd 204px,#ff14a2 217px,#ff0a8b 232px,#ff0070 255px,#ff0065 267px,#ff0049 312px,#f40045 313px,#a4002e 314px,#99002b 315px,#99001b 392px)"></i><i style="background:linear-gradient(90deg,#006c99 22px,#005999 69px,#005fa4 70px,#0092ff 71px,#0179ff 105px,#286eff 120px,#655eff 140px,#aa4eff 160px,#ff3bfe 183px,#ff2cdc 193px,#ff1fbf 204px,#ff14a4 217px,#ff0b8e 231px,#ff0073 254px,#ff0068 266px,#ff004a 311px,#f40046 312px,#a4002f 313px,#99002c 314px,#99001c 391px)"></i><i style="background:linear-gradient(90deg,#006a99 23px,#005799 70px,#008af4 71px,#0090ff 72px,#0178ff 105px,#276cff 120px,#645dff 140px,#a84dff 160px,#ff39fe 184px,#ff2adc 194px,#ff1ebf 205px,#ff13a4 218px,#ff0a8e 232px,#ff0074 254px,#ff0069 266px,#ff004c 310px,#f40048 311px,#a40030 312px,#99002d 313px,#99001c 390px)"></i><i style="background:linear-gradient(90deg,#006999 23px,#005699 70px,#007bdd 71px,#008eff 72px,#0076ff 105px,#246bff 119px,#5f5cff 139px,#a24cff 159px,#ff37fd 185px,#ff29dc 195px,#ff1dbf 206px,#ff12a6 218px,#ff0990 232px,#ff0076 253px,#ff006a 266px,#ff004d 309px,#f40049 310px,#a40031 311px,#99002d 312px,#99001d 389px)"></i><i style="background:linear-gradient(90deg,#006799 23px,#059 70px,#006dc6 71px,#008cff 72px,#0074ff 105px,#236aff 119px,#5e5aff 139px,#9d4cff 158px,#fa37ff 184px,#ff35fc 186px,#ff27db 196px,#ff1bbf 207px,#ff11a7 219px,#ff0890 233px,#ff0079 252px,#ff006b 266px,#ff004f 308px,#d04 309px,#a40032 310px,#99002e 311px,#99001d 389px)"></i><i style="background:linear-gradient(90deg,#069 24px,#005499 70px,#005fb0 71px,#008aff 72px,#0072ff 105px,#2268ff 119px,#5d59ff 139px,#a847ff 162px,#fb35ff 185px,#ff33fc 187px,#ff26de 196px,#ff1bc1 207px,#ff11a8 219px,#ff0892 233px,#ff007a 252px,#ff006d 266px,#ff0050 307px,#dd0045 308px,#99002f 309px,#99001e 388px)"></i><i style="background:linear-gradient(90deg,#006499 24px,#005299 71px,#08f 72px,#0270ff 106px,#2a64ff 122px,#6555ff 142px,#aa45ff 163px,#ff32fe 187px,#ff25de 197px,#ff19c1 208px,#ff10a9 220px,#ff0893 233px,#ff007d 251px,#ff006f 265px,#ff0052 306px,#dd0046 307px,#990030 308px,#99001e 387px)"></i><i style="background:linear-gradient(90deg,#006399 24px,#005199 71px,#0074dd 72px,#0085ff 73px,#016eff 106px,#2963ff 122px,#6454ff 142px,#a444ff 162px,#ff30fe 188px,#ff23dd 198px,#ff19c3 208px,#ff0fab 220px,#ff0795 233px,#ff007f 250px,#ff0070 265px,#ff0053 305px,#dd0048 306px,#990031 307px,#99001f 386px)"></i><i style="background:linear-gradient(90deg,#006299 25px,#005099 71px,#006dd2 72px,#0084ff 73px,#016dff 106px,#2662ff 121px,#6252ff 142px,#a243ff 162px,#ff2efd 189px,#ff22e0 198px,#ff17c3 209px,#ff0eab 221px,#ff0795 234px,#ff0081 250px,#ff0071 265px,#f05 304px,#dd0049 305px,#990032 306px,#99001f 385px)"></i><i style="background:linear-gradient(90deg,#006099 25px,#004f99 71px,#0060bb 72px,#0082ff 73px,#016bff 106px,#2560ff 121px,#6151ff 142px,#aa40ff 165px,#fa2eff 188px,#ff2cfc 190px,#ff21df 199px,#ff16c3 210px,#ff0ead 221px,#ff0697 234px,#ff0083 249px,#ff0073 265px,#ff0056 303px,#dd004a 304px,#903 305px,#990020 385px)"></i><i style="background:linear-gradient(90deg,#005f99 25px,#004d99 72px,#0080ff 73px,#0169ff 106px,#245fff 121px,#5d50ff 141px,#a83eff 165px,#fb2cff 189px,#ff2afc 191px,#ff1fdf 200px,#ff15c3 211px,#ff0dad 222px,#ff0597 235px,#ff0086 248px,#ff0074 265px,#ff0058 302px,#dd004c 303px,#990034 304px,#990020 384px)"></i><i style="background:linear-gradient(90deg,#005e99 26px,#004c99 72px,#0073e8 73px,#007eff 74px,#0068ff 106px,#265dff 122px,#624dff 143px,#a63dff 165px,#ff29fe 191px,#ff1fe1 200px,#ff15c8 210px,#ff0db0 221px,#ff069a 234px,#ff0089 247px,#ff0076 264px,#ff005a 301px,#dd004d 302px,#990035 303px,#990021 383px)"></i><i style="background:linear-gradient(90deg,#005d99 26px,#004b99 72px,#006cdd 73px,#007cff 74px,#06f 106px,#235cff 121px,#604cff 143px,#a53cff 165px,#ff28fe 192px,#ff1de1 201px,#ff14c7 211px,#ff0cb0 222px,#ff059b 235px,#ff008a 247px,#ff0078 264px,#ff005b 300px,#d2004b 301px,#990036 302px,#902 382px)"></i><i style="background:linear-gradient(90deg,#005c99 26px,#004a99 72px,#005abb 73px,#007bff 74px,#0065ff 106px,#225aff 121px,#5f4bff 143px,#9f3cff 164px,#ff26fd 193px,#ff1ce1 202px,#ff13c7 212px,#ff0bb1 223px,#ff049c 235px,#ff008d 246px,#ff0079 264px,#ff005d 299px,#b04 300px,#990037 301px,#99002b 339px,#902 382px)"></i><i style="background:linear-gradient(90deg,#005a99 27px,#004999 72px,#004ea4 73px,#0079ff 74px,#0163ff 107px,#2758ff 123px,#6149ff 144px,#aa38ff 168px,#fb26ff 192px,#ff24fc 194px,#ff1ae0 203px,#ff11c7 213px,#ff0ab1 224px,#ff049d 236px,#ff0090 245px,#ff007a 264px,#ff005f 298px,#bb0045 299px,#990038 300px,#99002c 338px,#990023 381px)"></i><i style="background:linear-gradient(90deg,#005999 27px,#004899 73px,#0072f4 74px,#07f 75px,#0161ff 107px,#2656ff 123px,#6048ff 144px,#a836ff 168px,#fc24ff 193px,#ff22fc 195px,#ff19e0 204px,#ff11c9 213px,#ff0ab2 224px,#ff039e 236px,#ff0091 245px,#ff007d 263px,#ff0060 297px,#bb0046 298px,#990039 299px,#99002d 337px,#990023 380px)"></i><i style="background:linear-gradient(90deg,#005899 27px,#004799 73px,#06d 74px,#0075ff 75px,#0160ff 107px,#2854ff 124px,#6445ff 146px,#a735ff 168px,#ff22fe 195px,#ff18e2 204px,#ff10c9 214px,#ff09b4 224px,#ff03a0 236px,#ff0094 244px,#ff007e 263px,#ff0062 296px,#bb0047 297px,#99003a 298px,#99002d 336px,#990024 379px)"></i><i style="background:linear-gradient(90deg,#005799 28px,#004699 73px,#005ac6 74px,#0074ff 75px,#015fff 107px,#2753ff 124px,#6344ff 146px,#a534ff 168px,#ff20fd 196px,#ff17e2 205px,#ff0fcb 214px,#ff09b6 224px,#ff03a2 236px,#ff007f 263px,#ff0064 295px,#bb0049 296px,#99003b 297px,#99002e 335px,#990024 379px)"></i><i style="background:linear-gradient(90deg,#005699 28px,#004599 73px,#004fb0 74px,#0072ff 75px,#015dff 107px,#2752ff 124px,#6243ff 146px,#a034ff 167px,#ff1efd 197px,#ff15e2 206px,#ff0ecb 215px,#ff02a3 236px,#ff0082 262px,#f06 294px,#bb004a 295px,#99003c 296px,#99002f 334px,#990025 378px)"></i><i style="background:linear-gradient(90deg,#059 28px,#049 74px,#0071ff 75px,#005cff 107px,#2451ff 123px,#5e42ff 145px,#a731ff 170px,#fb1fff 196px,#ff1dfc 198px,#ff14e1 207px,#ff0dcb 216px,#ff02a3 237px,#ff0083 262px,#ff0067 293px,#bb004b 294px,#99003d 295px,#990030 333px,#990025 377px)"></i><i style="background:linear-gradient(90deg,#005399 29px,#004399 74px,#0060dd 75px,#006fff 76px,#005bff 107px,#264fff 124px,#6240ff 147px,#a92fff 171px,#ff1cfe 198px,#ff14e4 207px,#ff0dcd 216px,#ff01a5 237px,#ff0084 262px,#ff0069 292px,#bb004d 293px,#99003e 294px,#990031 332px,#990026 376px)"></i><i style="background:linear-gradient(90deg,#005299 29px,#004299 74px,#005ad2 75px,#006dff 76px,#0259ff 108px,#274dff 125px,#643eff 148px,#a72eff 171px,#ff1bfe 199px,#ff13e6 207px,#ff0ccf 216px,#ff01a7 237px,#ff0087 261px,#ff006c 290px,#f40066 291px,#a40045 292px,#99003f 293px,#990031 331px,#990026 376px)"></i><i style="background:linear-gradient(90deg,#005199 30px,#004199 74px,#004fbb 75px,#006cff 76px,#0157ff 108px,#274cff 125px,#633dff 148px,#a52dff 171px,#ff19fd 200px,#ff12e6 208px,#ff0bcf 217px,#ff01a9 237px,#f08 261px,#ff006e 289px,#f40068 290px,#a40046 291px,#990041 292px,#990032 330px,#990027 375px)"></i><i style="background:linear-gradient(90deg,#005099 30px,#004099 75px,#006aff 76px,#0156ff 108px,#264bff 125px,#613cff 148px,#a02dff 170px,#fb19ff 199px,#ff18fd 201px,#ff0bd1 217px,#f0a 237px,#ff008b 260px,#ff0070 288px,#f4006a 289px,#a40047 290px,#990042 291px,#903 329px,#990028 374px)"></i><i style="background:linear-gradient(90deg,#004f99 30px,#003f99 75px,#0064f4 76px,#0068ff 77px,#0155ff 108px,#264aff 125px,#603bff 148px,#aa29ff 174px,#fb18ff 200px,#ff16fc 202px,#ff09cf 219px,#f0a 238px,#ff008c 260px,#ff0072 287px,#f4006c 288px,#a40048 289px,#990043 290px,#990034 328px,#990028 373px)"></i><i style="background:linear-gradient(90deg,#004e99 31px,#003f99 75px,#005add 76px,#0067ff 77px,#0154ff 108px,#2748ff 126px,#6538ff 150px,#a928ff 174px,#ff16fe 202px,#ff09d3 218px,#ff00ae 237px,#ff008f 259px,#ff0074 286px,#f4006e 287px,#a4004a 288px,#904 289px,#990035 327px,#990029 372px)"></i><i style="background:linear-gradient(90deg,#004d99 31px,#003e99 75px,#004bbb 76px,#06f 77px,#0052ff 108px,#2747ff 126px,#6337ff 150px,#a728ff 174px,#ff14fe 203px,#ff08d3 219px,#ff00ae 238px,#ff008f 260px,#ff0076 285px,#f40070 286px,#a4004b 287px,#990045 288px,#990035 327px,#990029 372px)"></i><i style="background:linear-gradient(90deg,#004c99 31px,#003d99 75px,#0041a4 76px,#0064ff 77px,#0051ff 108px,#2646ff 126px,#6236ff 150px,#a227ff 173px,#ff13fd 204px,#ff07d2 220px,#ff00af 238px,#ff0092 259px,#ff0078 284px,#f40072 285px,#a4004c 286px,#990046 287px,#990036 326px,#99002a 371px)"></i><i style="background:linear-gradient(90deg,#004b99 32px,#003c99 76px,#0063ff 77px,#024fff 109px,#2844ff 127px,#6135ff 150px,#a127ff 173px,#fb13ff 203px,#ff12fd 205px,#ff07d5 220px,#ff00b1 238px,#ff0093 259px,#ff007a 283px,#f40074 284px,#a4004d 285px,#990048 286px,#990037 325px,#99002b 370px)"></i><i style="background:linear-gradient(90deg,#004a99 32px,#003b99 76px,#05d 77px,#0061ff 78px,#014eff 109px,#2743ff 127px,#6034ff 150px,#aa23ff 177px,#fc12ff 204px,#ff10fc 206px,#ff06d4 221px,#ff00b3 238px,#ff0096 258px,#ff007c 282px,#dd006b 283px,#990049 284px,#990038 323px,#99002b 369px)"></i><i style="background:linear-gradient(90deg,#004999 33px,#003a99 76px,#004bc6 77px,#0060ff 78px,#014dff 109px,#2742ff 127px,#6432ff 152px,#a922ff 177px,#ff10fe 206px,#ff06d6 221px,#ff00b5 238px,#ff0097 258px,#ff007e 281px,#dd006d 282px,#99004b 283px,#990039 322px,#99002c 369px)"></i><i style="background:linear-gradient(90deg,#004899 33px,#003a99 76px,#0042b0 77px,#005fff 78px,#014cff 109px,#2641ff 127px,#6331ff 152px,#a722ff 177px,#ff0ffe 207px,#ff05d8 221px,#ff00b6 238px,#ff009a 257px,#ff0080 280px,#dd006e 281px,#99004c 282px,#99003a 321px,#99002d 368px)"></i><i style="background:linear-gradient(90deg,#004799 33px,#003899 77px,#005dff 78px,#014bff 109px,#2640ff 127px,#6230ff 152px,#a321ff 176px,#ff0dfd 208px,#ff04d8 222px,#ff00b6 239px,#ff009a 258px,#ff0083 279px,#dd0070 280px,#99004d 281px,#99003b 320px,#99002d 367px)"></i><i style="background:linear-gradient(90deg,#004699 34px,#003899 77px,#0054e8 78px,#005cff 79px,#014aff 109px,#253fff 127px,#6130ff 152px,#a121ff 176px,#fb0dff 207px,#ff0cfd 209px,#ff03d8 223px,#ff00b8 239px,#ff009d 257px,#ff0085 278px,#dd0072 279px,#99004e 280px,#99003c 319px,#99002e 366px)"></i><i style="background:linear-gradient(90deg,#004599 34px,#003799 77px,#004bd2 78px,#005bff 79px,#0049ff 109px,#243eff 127px,#602fff 152px,#aa1dff 180px,#fc0cff 208px,#ff0bfc 210px,#ff02d8 224px,#ff00ba 239px,#ff009e 257px,#ff0087 277px,#dd0074 278px,#990050 279px,#99003d 319px,#99002e 366px)"></i><i style="background:linear-gradient(90deg,#004599 34px,#003699 77px,#0042bb 78px,#0059ff 79px,#0247ff 110px,#2b3bff 130px,#662cff 155px,#ac1cff 181px,#ff0afe 210px,#ff02da 224px,#ff00bc 239px,#ff00a1 256px,#ff0089 276px,#dd0076 277px,#990051 278px,#99003e 318px,#99002f 365px)"></i><i style="background:linear-gradient(90deg,#004399 35px,#003599 78px,#0058ff 79px,#0246ff 110px,#283bff 129px,#652bff 155px,#a71cff 180px,#ff09fe 211px,#ff02dc 224px,#ff00bd 239px,#ff00a3 256px,#ff008c 275px,#dd0078 276px,#990053 277px,#99003f 317px,#990030 364px)"></i><i style="background:linear-gradient(90deg,#004399 35px,#003599 78px,#0053f4 79px,#0057ff 80px,#0145ff 110px,#273aff 129px,#622bff 154px,#a31cff 179px,#ff08fd 212px,#ff01db 225px,#ff00bf 239px,#ff00a6 255px,#ff008e 274px,#c6006e 275px,#990054 276px,#990040 316px,#990031 363px)"></i><i style="background:linear-gradient(90deg,#004299 36px,#003499 78px,#004bdd 79px,#05f 80px,#0144ff 110px,#2739ff 129px,#612aff 154px,#9f1cff 178px,#fb08ff 211px,#ff07fd 213px,#ff01dd 225px,#ff00c1 239px,#ff00a7 255px,#ff0090 273px,#bb0069 274px,#905 275px,#990041 314px,#990031 362px)"></i><i style="background:linear-gradient(90deg,#004199 36px,#039 78px,#003ebb 79px,#0054ff 80px,#0143ff 110px,#2838ff 130px,#6528ff 156px,#aa18ff 183px,#ff07ff 213px,#f0d 226px,#ff00c3 239px,#ff00a9 255px,#ff0093 272px,#bb006b 273px,#990057 274px,#990042 314px,#990032 362px)"></i><i style="background:linear-gradient(90deg,#004099 36px,#039 78px,#0036a4 79px,#0053ff 80px,#0142ff 110px,#2837ff 130px,#6427ff 156px,#a917ff 183px,#ff06fe 214px,#ff00df 226px,#ff00c4 239px,#ff00ac 254px,#ff0095 271px,#bb006d 272px,#990058 273px,#990043 313px,#903 361px)"></i><i style="background:linear-gradient(90deg,#003f99 37px,#003299 79px,#0052ff 80px,#0141ff 110px,#2736ff 130px,#6327ff 156px,#a517ff 182px,#ff05fe 215px,#ff00df 227px,#ff00c4 240px,#ff00ad 254px,#ff0098 270px,#bb006f 271px,#99005a 272px,#904 312px,#903 360px)"></i><i style="background:linear-gradient(90deg,#003e99 37px,#003199 79px,#0046dd 80px,#0051ff 81px,#0040ff 110px,#2435ff 129px,#6226ff 156px,#a317ff 182px,#ff04fd 216px,#ff00e1 227px,#ff00c6 240px,#ff00af 254px,#ff009a 269px,#bb0070 270px,#99005b 271px,#990045 311px,#990034 359px)"></i><i style="background:linear-gradient(90deg,#003d99 38px,#003099 79px,#003ec6 80px,#0050ff 81px,#023fff 111px,#2833ff 131px,#6325ff 157px,#9f17ff 181px,#fc04ff 215px,#ff03fd 217px,#ff00e1 228px,#ff00c8 240px,#ff00b2 253px,#ff009d 268px,#bb0072 269px,#99005d 270px,#990046 310px,#990035 359px)"></i><i style="background:linear-gradient(90deg,#003d99 38px,#003099 79px,#0037b0 80px,#004fff 81px,#013eff 111px,#2a32ff 132px,#6723ff 159px,#ad13ff 187px,#ff02fe 217px,#ff00e3 228px,#ff00c9 240px,#ff00b3 253px,#ff00a0 267px,#bb0074 268px,#99005e 269px,#990047 309px,#990035 358px)"></i><i style="background:linear-gradient(90deg,#003c99 38px,#002f99 80px,#004eff 81px,#013dff 111px,#2732ff 131px,#6323ff 158px,#a913ff 186px,#ff01fe 218px,#ff00e5 228px,#ff00cd 239px,#ff00b8 251px,#ff00a4 265px,#f4009b 266px,#bb0076 267px,#990060 268px,#990048 308px,#990036 357px)"></i><i style="background:linear-gradient(90deg,#003b99 39px,#002e99 80px,#0046e8 81px,#004cff 82px,#013cff 111px,#2631ff 131px,#6222ff 158px,#a513ff 185px,#ff01fe 219px,#ff00e4 229px,#ff00cd 240px,#ff00a6 264px,#f4009e 265px,#a4006a 266px,#990061 267px,#990049 307px,#990037 356px)"></i><i style="background:linear-gradient(90deg,#003a99 39px,#002e99 80px,#003ed2 81px,#004bff 82px,#013bff 111px,#2630ff 131px,#6121ff 158px,#a113ff 184px,#ff00fd 220px,#ff00e4 230px,#ff00cf 240px,#ff00a9 263px,#f400a0 264px,#a4006b 265px,#990063 266px,#99004a 306px,#990037 356px)"></i><i style="background:linear-gradient(90deg,#003999 40px,#002d99 80px,#0037bb 81px,#004aff 82px,#013aff 111px,#252fff 131px,#6020ff 158px,#9f12ff 184px,#fc00ff 219px,#ff00fd 221px,#ff00d1 240px,#ff00ac 262px,#f400a3 263px,#a4006d 264px,#990065 265px,#99004b 305px,#990038 355px)"></i><i style="background:linear-gradient(90deg,#003999 40px,#002c99 81px,#0049ff 82px,#003aff 111px,#272eff 132px,#641fff 160px,#aa0fff 189px,#ff00fe 221px,#ff00d2 240px,#ff00af 261px,#f400a6 262px,#a4006f 263px,#906 264px,#99004d 304px,#990039 354px)"></i><i style="background:linear-gradient(90deg,#003899 41px,#002c99 81px,#0045f4 82px,#0048ff 83px,#0238ff 112px,#282dff 133px,#651dff 161px,#a90eff 189px,#ff00fe 222px,#ff00d4 240px,#ff00b2 260px,#f400a9 261px,#a40071 262px,#990068 263px,#99004e 303px,#99003a 353px)"></i><i style="background:linear-gradient(90deg,#003799 41px,#002b99 81px,#003edd 82px,#0047ff 83px,#0237ff 112px,#282cff 133px,#641dff 161px,#a00fff 186px,#e302ff 212px,#ff00fe 223px,#ff00d6 240px,#ff00b5 259px,#f400ab 260px,#a40073 261px,#99006a 262px,#99004e 303px,#99003a 353px)"></i><i style="background:linear-gradient(90deg,#003799 41px,#002b99 81px,#0034bb 82px,#0046ff 83px,#0137ff 112px,#272bff 133px,#631cff 161px,#9f0fff 186px,#e102ff 212px,#ff00fd 224px,#ff00d8 240px,#ff00b8 258px,#f400ae 259px,#a40075 260px,#99006c 261px,#990050 302px,#99003b 352px)"></i><i style="background:linear-gradient(90deg,#003699 42px,#002a99 81px,#002da4 82px,#0045ff 83px,#0136ff 112px,#272bff 133px,#651bff 162px,#a00eff 187px,#df01ff 212px,#f0f 224px,#ff00da 240px,#f0b 257px,#e800a9 258px,#a40077 259px,#99006d 260px,#990051 301px,#99003c 351px)"></i><i style="background:linear-gradient(90deg,#003599 42px,#002999 82px,#04f 83px,#0135ff 112px,#262aff 133px,#641aff 162px,#9e0dff 187px,#dd01ff 212px,#ff00fe 225px,#ff00db 240px,#ff00be 256px,#dd00a3 257px,#990070 258px,#990053 299px,#99003d 350px)"></i><i style="background:linear-gradient(90deg,#003499 43px,#002999 82px,#003add 83px,#0043ff 84px,#0134ff 112px,#2629ff 133px,#631aff 162px,#9d0dff 187px,#db01ff 212px,#ff00fe 226px,#f0d 240px,#ff00c1 255px,#dd00a6 256px,#990072 257px,#990054 298px,#99003e 349px)"></i><i style="background:linear-gradient(90deg,#003499 43px,#002899 82px,#0034c6 83px,#0042ff 84px,#0233ff 113px,#2927ff 135px,#6419ff 163px,#9c0cff 187px,#d900ff 212px,#ff00fd 227px,#ff00df 240px,#ff00c5 254px,#dd00a9 255px,#990074 256px,#990064 275px,#905 297px,#99003e 349px)"></i><i style="background:linear-gradient(90deg,#039 44px,#002899 82px,#0030bb 83px,#0041ff 84px,#0232ff 113px,#2927ff 135px,#6318ff 163px,#d500ff 211px,#ff00fd 228px,#ff00e1 240px,#ff00c8 253px,#dd00ac 254px,#990076 255px,#990065 274px,#990056 296px,#99003f 348px)"></i><i style="background:linear-gradient(90deg,#003299 44px,#002799 83px,#0040ff 84px,#0231ff 113px,#2826ff 135px,#6717ff 165px,#d300ff 211px,#f0f 228px,#ff00e3 240px,#ff00cb 252px,#dd00af 253px,#990078 254px,#990067 273px,#990058 295px,#990040 347px)"></i><i style="background:linear-gradient(90deg,#003299 44px,#002699 83px,#003ae8 84px,#003fff 85px,#0131ff 113px,#2825ff 135px,#6616ff 165px,#cf00ff 210px,#ff00fe 229px,#ff00e4 240px,#ff00cf 251px,#dd00b2 252px,#99007a 253px,#990068 272px,#990059 294px,#990041 346px)"></i><i style="background:linear-gradient(90deg,#003199 45px,#002699 83px,#0033d2 84px,#003eff 85px,#0130ff 113px,#2725ff 135px,#6515ff 165px,#cb00ff 209px,#ff00fe 230px,#ff00d2 250px,#dd00b5 251px,#99007c 252px,#99006a 271px,#99005a 293px,#990041 346px)"></i><i style="background:linear-gradient(90deg,#003099 45px,#002599 83px,#002dbb 84px,#003dff 85px,#012fff 113px,#2724ff 135px,#6415ff 165px,#c900ff 209px,#ff00fd 231px,#ff00d6 249px,#dd00b8 250px,#99007e 251px,#99006c 270px,#99005c 292px,#990042 345px)"></i><i style="background:linear-gradient(90deg,#002f99 46px,#002599 83px,#0027a4 84px,#003cff 85px,#002fff 112px,#022eff 114px,#2823ff 136px,#6314ff 165px,#c500ff 208px,#ff00fd 232px,#ff00d9 248px,#bb009e 249px,#990080 250px,#99006d 269px,#99005d 291px,#990043 344px)"></i><i style="background:linear-gradient(90deg,#002f99 46px,#002499 84px,#0039f4 85px,#003bff 86px,#022dff 114px,#2a22ff 137px,#6613ff 167px,#c100ff 207px,#f0f 232px,#f0d 247px,#bb00a1 248px,#990082 249px,#99006f 268px,#99005e 290px,#99004f 316px,#904 343px)"></i><i style="background:linear-gradient(90deg,#002e99 47px,#002499 84px,#03d 85px,#003aff 86px,#022dff 114px,#2921ff 137px,#6512ff 167px,#bd00ff 206px,#ff00fe 233px,#ff00e1 246px,#bb00a3 247px,#990085 248px,#990070 268px,#99005f 290px,#990050 316px,#990045 343px)"></i><i style="background:linear-gradient(90deg,#002e99 47px,#002399 84px,#002bbb 85px,#003aff 86px,#022cff 114px,#2921ff 137px,#6512ff 167px,#bc00ff 206px,#ff00fe 234px,#ff00e5 245px,#bb00a6 246px,#990087 247px,#990073 266px,#990061 288px,#990052 314px,#990046 342px)"></i><i style="background:linear-gradient(90deg,#002d99 47px,#002399 84px,#0028b0 85px,#0039ff 86px,#012bff 114px,#2820ff 137px,#6411ff 167px,#b800ff 205px,#ff00fd 235px,#ff00e9 244px,#bb00a9 245px,#990089 246px,#990075 265px,#990063 287px,#990053 313px,#990047 341px)"></i><i style="background:linear-gradient(90deg,#002c99 48px,#029 85px,#0038ff 86px,#002cff 112px,#032aff 115px,#2a1fff 138px,#6510ff 168px,#b400ff 204px,#fc00ff 234px,#ff00fd 236px,#ff00ed 243px,#bb00ac 244px,#99008b 245px,#990076 264px,#990064 286px,#990054 312px,#990047 340px)"></i><i style="background:linear-gradient(90deg,#002c99 48px,#029 85px,#0030dd 86px,#0037ff 87px,#002bff 112px,#0229ff 115px,#2b1eff 139px,#680fff 170px,#b000ff 203px,#f0f 236px,#ff00f1 242px,#bb00af 243px,#99008e 244px,#990078 263px,#990065 286px,#905 312px,#990048 340px)"></i><i style="background:linear-gradient(90deg,#002b99 49px,#002199 85px,#002bc6 86px,#0036ff 87px,#002aff 113px,#0229ff 115px,#2a1dff 139px,#670eff 170px,#af00ff 203px,#ff00fe 237px,#ff00f5 241px,#bb00b2 242px,#990090 243px,#99007a 262px,#906 285px,#990056 311px,#990049 339px)"></i><i style="background:linear-gradient(90deg,#002b99 49px,#002199 85px,#0028bb 86px,#0036ff 87px,#0228ff 115px,#281dff 138px,#640eff 169px,#ab00ff 202px,#ff00fe 238px,#ff00fb 239px,#f400ee 240px,#b000aa 241px,#990093 242px,#99007c 261px,#990068 284px,#990057 310px,#99004a 338px)"></i><i style="background:linear-gradient(90deg,#002a99 50px,#002099 86px,#0035ff 87px,#0228ff 115px,#291cff 139px,#670dff 171px,#a800ff 201px,#fe00ff 238px,#f400f2 239px,#a400a2 240px,#990095 241px,#99007e 260px,#99006a 283px,#990058 309px,#99004b 337px)"></i><i style="background:linear-gradient(90deg,#002999 50px,#002099 86px,#0030e8 87px,#0034ff 88px,#0227ff 115px,#291cff 139px,#650dff 170px,#a400ff 200px,#fa00ff 237px,#f100f4 238px,#a400a4 239px,#990098 240px,#990080 259px,#99006c 281px,#99005a 308px,#99004c 336px)"></i><i style="background:linear-gradient(90deg,#002999 51px,#001f99 86px,#002ad2 87px,#03f 88px,#0226ff 115px,#281bff 139px,#640dff 170px,#a300ff 200px,#f600ff 236px,#ed00f4 237px,#a100a4 238px,#980099 239px,#99007f 261px,#99006c 282px,#99005a 308px,#99004d 336px)"></i><i style="background:linear-gradient(90deg,#002899 51px,#001f99 86px,#0025bb 87px,#0032ff 88px,#0027ff 113px,#0325ff 116px,#2a1aff 140px,#630cff 170px,#a000ff 199px,#f100ff 235px,#e900f4 236px,#9f00a4 237px,#950099 238px,#990098 241px,#990080 261px,#99006b 284px,#99005a 309px,#99004e 335px)"></i><i style="background:linear-gradient(90deg,#002899 51px,#001e99 86px,#0020a4 87px,#0032ff 88px,#0026ff 113px,#0325ff 116px,#291aff 140px,#620cff 170px,#9c00ff 198px,#ed00ff 234px,#e500f4 235px,#9c00a4 236px,#930099 237px,#990098 242px,#990080 262px,#99006a 286px,#99005a 310px,#99004f 334px)"></i><i style="background:linear-gradient(90deg,#002799 52px,#001e99 87px,#002ff4 88px,#0031ff 89px,#0025ff 114px,#131fff 127px,#4e10ff 160px,#90f 197px,#e900ff 233px,#e100f4 234px,#9900a4 235px,#900099 236px,#990098 243px,#990082 261px,#99006e 282px,#99005d 307px,#990050 333px)"></i><i style="background:linear-gradient(90deg,#002799 52px,#001d99 87px,#002add 88px,#0030ff 89px,#0024ff 114px,#131eff 127px,#4b10ff 159px,#9500ff 196px,#e500ff 232px,#dd00f4 233px,#9700a4 234px,#8e0099 235px,#990098 244px,#990082 262px,#99006e 283px,#99005d 308px,#990050 333px)"></i><i style="background:linear-gradient(90deg,#002699 53px,#001d99 87px,#0023bb 88px,#002fff 89px,#0024ff 114px,#121eff 127px,#4a0fff 159px,#9200ff 195px,#e100ff 231px,#c500dd 232px,#9400a4 233px,#8b0099 234px,#909 244px,#990083 262px,#99006f 283px,#99005e 307px,#990051 332px)"></i><i style="background:linear-gradient(90deg,#002599 53px,#001c99 87px,#0020b0 88px,#002fff 89px,#0023ff 114px,#101eff 126px,#480fff 158px,#9100ff 195px,#d0f 230px,#c200dd 231px,#809 232px,#990098 245px,#990083 263px,#990070 283px,#99005f 307px,#990052 331px)"></i><i style="background:linear-gradient(90deg,#002599 54px,#001c99 88px,#002eff 89px,#0023ff 114px,#101dff 126px,#470fff 158px,#8e00ff 194px,#d900ff 229px,#be00dd 230px,#850099 231px,#990098 246px,#990083 263px,#990071 283px,#990060 307px,#990053 330px)"></i><i style="background:linear-gradient(90deg,#002499 54px,#001b99 88px,#0027dd 89px,#002dff 90px,#02f 115px,#101dff 126px,#450fff 157px,#8b00ff 193px,#d600ff 228px,#b0d 229px,#830099 230px,#990098 247px,#990083 264px,#990071 284px,#990060 307px,#990054 330px)"></i><i style="background:linear-gradient(90deg,#002499 55px,#001b99 88px,#0023c6 89px,#002cff 90px,#0021ff 115px,#0f1cff 126px,#440fff 157px,#80f 192px,#d200ff 227px,#b800dd 228px,#810099 229px,#909 247px,#990083 265px,#990071 284px,#990061 307px,#905 329px)"></i><i style="background:linear-gradient(90deg,#002399 55px,#001b99 88px,#0020bb 89px,#002cff 90px,#0021ff 115px,#0f1cff 126px,#420fff 156px,#8500ff 191px,#ce00ff 226px,#b500dd 227px,#7e0099 228px,#909 248px,#990084 265px,#990072 284px,#990056 328px)"></i><i style="background:linear-gradient(90deg,#029 56px,#001a99 89px,#002bff 90px,#0020ff 115px,#0d1cff 125px,#3f0fff 155px,#8400ff 191px,#ca00ff 225px,#b100dd 226px,#7c0099 227px,#990098 249px,#990084 266px,#990073 284px,#990057 327px)"></i><i style="background:linear-gradient(90deg,#029 56px,#001a99 89px,#0027e8 90px,#002aff 91px,#0020ff 115px,#0f1bff 126px,#410eff 156px,#8100ff 190px,#c700ff 224px,#ae00dd 225px,#7a0099 226px,#990098 250px,#990085 266px,#990073 285px,#990058 327px)"></i><i style="background:linear-gradient(90deg,#002199 57px,#001999 89px,#0022d2 90px,#0029ff 91px,#001fff 115px,#0d1bff 125px,#3e0eff 155px,#7e00ff 189px,#c300ff 223px,#a200d2 224px,#780099 225px,#909 250px,#990085 267px,#990074 285px,#990059 326px)"></i><i style="background:linear-gradient(90deg,#002199 57px,#001999 89px,#001ebb 90px,#0029ff 91px,#001eff 115px,#0d1aff 125px,#3c0eff 154px,#7b00ff 188px,#c000ff 222px,#8e00bb 223px,#760099 224px,#909 251px,#990086 267px,#990075 285px,#99005a 325px)"></i><i style="background:linear-gradient(90deg,#002199 57px,#001999 89px,#001aa4 90px,#0028ff 91px,#001eff 115px,#0c1aff 125px,#3b0dff 154px,#7a00ff 188px,#bc00ff 221px,#8c00bb 222px,#740099 223px,#909 252px,#990075 285px,#99005b 324px)"></i><i style="background:linear-gradient(90deg,#002099 58px,#001899 90px,#0026f4 91px,#0027ff 92px,#001dff 116px,#0c19ff 125px,#3b0dff 154px,#70f 187px,#b900ff 220px,#8900bb 221px,#710099 222px,#990098 253px,#990076 285px,#99005d 323px)"></i><i style="background:linear-gradient(90deg,#002099 58px,#001899 90px,#02d 91px,#0027ff 92px,#001dff 116px,#0c19ff 125px,#390dff 153px,#7400ff 186px,#b600ff 219px,#8700bb 220px,#6f0099 221px,#990098 254px,#990076 286px,#99005d 323px)"></i><i style="background:linear-gradient(90deg,#001f99 59px,#001799 90px,#001ec6 91px,#0026ff 92px,#001cff 116px,#0a19ff 124px,#360dff 152px,#7100ff 185px,#b200ff 218px,#8400bb 219px,#6d0099 220px,#909 254px,#907 286px,#99005f 322px)"></i><i style="background:linear-gradient(90deg,#001f99 59px,#001799 90px,#001ab0 91px,#0026ff 92px,#001cff 116px,#0a18ff 124px,#360dff 152px,#7100ff 185px,#af00ff 217px,#8200bb 218px,#6b0099 219px,#909 255px,#990078 286px,#990060 321px)"></i><i style="background:linear-gradient(90deg,#001e99 60px,#001799 91px,#0025ff 92px,#001bff 116px,#0a18ff 124px,#340dff 151px,#6e00ff 184px,#ac00ff 216px,#7f00bb 217px,#690099 218px,#909 256px,#990079 286px,#990061 320px)"></i><i style="background:linear-gradient(90deg,#001e99 60px,#001699 91px,#0020dd 92px,#0024ff 93px,#001bff 116px,#0a17ff 124px,#330cff 151px,#6b00ff 183px,#a900ff 215px,#7d00bb 216px,#680099 217px,#990098 257px,#990079 286px,#990062 320px)"></i><i style="background:linear-gradient(90deg,#001d99 61px,#001699 91px,#001ed2 92px,#0024ff 93px,#001aff 116px,#0917ff 124px,#310cff 150px,#6900ff 182px,#a300ff 213px,#9e00f4 214px,#6c00a4 215px,#609 216px,#909 257px,#990079 287px,#990063 319px)"></i><i style="background:linear-gradient(90deg,#001d99 61px,#001699 91px,#001abb 92px,#0023ff 93px,#001aff 116px,#0817ff 123px,#2f0cff 149px,#60f 181px,#a000ff 212px,#9b00f4 213px,#6a00a4 214px,#640099 215px,#909 258px,#99007a 287px,#990064 318px)"></i><i style="background:linear-gradient(90deg,#001c99 62px,#001599 92px,#0023ff 93px,#0019ff 116px,#0816ff 123px,#2e0cff 149px,#6500ff 181px,#9d00ff 211px,#9800f4 212px,#6800a4 213px,#620099 214px,#909 259px,#99007b 287px,#990065 317px)"></i><i style="background:linear-gradient(90deg,#001c99 62px,#001599 92px,#001fe8 93px,#02f 94px,#0018ff 117px,#0916ff 124px,#2e0bff 149px,#6300ff 180px,#9a00ff 210px,#9500f4 211px,#6600a4 212px,#600099 213px,#909 260px,#99007c 287px,#906 317px)"></i><i style="background:linear-gradient(90deg,#001b99 63px,#001499 92px,#001ddd 93px,#0021ff 94px,#0018ff 117px,#0715ff 123px,#2c0cff 148px,#6000ff 179px,#9700ff 209px,#9200f4 210px,#6400a4 211px,#5e0099 212px,#990098 261px,#99007d 287px,#990067 316px)"></i><i style="background:linear-gradient(90deg,#001b99 63px,#001499 92px,#0018bb 93px,#0021ff 94px,#0017ff 117px,#0715ff 123px,#2c0bff 148px,#5e00ff 178px,#9400ff 208px,#9000f4 209px,#6200a4 210px,#5c0099 211px,#909 261px,#99007d 287px,#990069 315px)"></i><i style="background:linear-gradient(90deg,#001a99 64px,#001499 92px,#0015a4 93px,#0020ff 94px,#0017ff 117px,#0715ff 123px,#2b0bff 148px,#5d00ff 178px,#9100ff 207px,#8d00f4 208px,#6000a4 209px,#5b0099 210px,#909 262px,#99007e 287px,#99006a 314px)"></i><i style="background:linear-gradient(90deg,#001a99 64px,#001399 93px,#001ef4 94px,#001fff 95px,#0017ff 117px,#0714ff 123px,#290bff 147px,#5b00ff 177px,#8f00ff 206px,#8a00f4 207px,#5e00a4 208px,#590099 209px,#909 263px,#99007e 288px,#99006b 314px)"></i><i style="background:linear-gradient(90deg,#001999 65px,#001399 93px,#001bdd 94px,#001fff 95px,#0016ff 117px,#0614ff 123px,#290aff 147px,#5800ff 176px,#8c00ff 205px,#7b00dd 206px,#560099 207px,#990098 264px,#99007f 288px,#99006c 313px)"></i><i style="background:linear-gradient(90deg,#001999 65px,#001399 93px,#0018c6 94px,#001eff 95px,#0016ff 117px,#0613ff 123px,#270aff 146px,#5600ff 175px,#8900ff 204px,#7800dd 205px,#540099 206px,#980099 264px,#990080 288px,#99006e 312px)"></i><i style="background:linear-gradient(90deg,#001999 65px,#001299 93px,#0015b0 94px,#001eff 95px,#0015ff 117px,#0613ff 123px,#260aff 146px,#50f 175px,#8600ff 203px,#7600dd 204px,#530099 205px,#909 265px,#990081 288px,#99006f 311px)"></i><i style="background:linear-gradient(90deg,#001899 66px,#001299 94px,#001dff 95px,#0014ff 118px,#0613ff 123px,#260aff 146px,#5300ff 174px,#8300ff 202px,#7300dd 203px,#510099 204px,#909 266px,#990081 288px,#990070 310px)"></i><i style="background:linear-gradient(90deg,#001899 66px,#001299 94px,#0019dd 95px,#001dff 96px,#0014ff 118px,#0612ff 123px,#240aff 145px,#5000ff 173px,#8100ff 201px,#7100dd 202px,#4f0099 203px,#909 267px,#990081 289px,#990071 310px)"></i><i style="background:linear-gradient(90deg,#001799 67px,#019 94px,#0017d2 95px,#001cff 96px,#0014ff 118px,#0512ff 123px,#2409ff 145px,#4e00ff 172px,#7e00ff 200px,#6f00dd 201px,#4e0099 202px,#980099 267px,#990081 290px,#990073 309px)"></i><i style="background:linear-gradient(90deg,#001799 67px,#019 94px,#0015bb 95px,#001cff 96px,#0013ff 118px,#0412ff 122px,#220aff 144px,#4c00ff 171px,#7b00ff 199px,#6c00dd 200px,#4c0099 201px,#909 268px,#990083 289px,#990074 308px)"></i><i style="background:linear-gradient(90deg,#001799 68px,#019 95px,#001bff 96px,#0013ff 118px,#0411ff 122px,#2209ff 144px,#4b00ff 171px,#7900ff 198px,#6a00dd 199px,#4b0099 200px,#909 269px,#990084 289px,#990075 307px)"></i><i style="background:linear-gradient(90deg,#001699 68px,#001099 95px,#0018e8 96px,#001aff 97px,#0012ff 118px,#0511ff 123px,#2109ff 144px,#4900ff 170px,#7600ff 197px,#5d00c6 198px,#490099 199px,#909 270px,#990084 290px,#990076 307px)"></i><i style="background:linear-gradient(90deg,#001699 69px,#001099 95px,#0017dd 96px,#001aff 97px,#0012ff 118px,#0411ff 122px,#1f09ff 143px,#4700ff 169px,#7400ff 196px,#5600bb 197px,#480099 198px,#909 271px,#990085 290px,#990078 306px)"></i><i style="background:linear-gradient(90deg,#001599 69px,#001099 95px,#0013bb 96px,#001aff 97px,#0012ff 118px,#0310ff 122px,#1e09ff 142px,#4500ff 168px,#7100ff 195px,#5400bb 196px,#460099 197px,#980099 271px,#990079 305px)"></i><i style="background:linear-gradient(90deg,#001599 70px,#001099 95px,#0010a4 96px,#0019ff 97px,#01f 118px,#0310ff 122px,#1d09ff 142px,#40f 168px,#6f00ff 194px,#5200bb 195px,#450099 196px,#909 272px,#99007b 304px)"></i><i style="background:linear-gradient(90deg,#001599 70px,#000f99 96px,#0018f4 97px,#0018ff 98px,#01f 119px,#040fff 123px,#4200ff 167px,#6c00ff 193px,#5100bb 194px,#430099 195px,#909 273px,#99007c 304px)"></i><i style="background:linear-gradient(90deg,#001499 71px,#000f99 96px,#0015dd 97px,#0018ff 98px,#0010ff 119px,#030fff 122px,#1b08ff 141px,#4000ff 166px,#6a00ff 192px,#4f00bb 193px,#420099 194px,#909 274px,#99007d 303px)"></i><i style="background:linear-gradient(90deg,#001499 71px,#000f99 96px,#0013c6 97px,#0018ff 98px,#0010ff 119px,#030fff 122px,#3e00ff 165px,#6800ff 191px,#4d00bb 192px,#400099 193px,#980099 274px,#99007f 302px)"></i><i style="background:linear-gradient(90deg,#001399 72px,#000e99 96px,#0010b0 97px,#0017ff 98px,#0010ff 119px,#030eff 122px,#3e00ff 165px,#6500ff 190px,#4b00bb 191px,#3f0099 192px,#980099 275px,#990080 301px)"></i><i style="background:linear-gradient(90deg,#001399 72px,#000e99 97px,#0017ff 98px,#000fff 119px,#020eff 122px,#3c00ff 164px,#6100ff 188px,#5e00f4 189px,#4a00bb 190px,#3d0099 191px,#909 276px,#990082 300px)"></i><i style="background:linear-gradient(90deg,#001399 73px,#000e99 97px,#0013dd 98px,#0016ff 99px,#020eff 122px,#3a00ff 163px,#5f00ff 187px,#5c00f4 188px,#3f00a4 189px,#3c0099 190px,#909 277px,#990083 300px)"></i><i style="background:linear-gradient(90deg,#001299 73px,#000d99 97px,#0012d2 98px,#0016ff 99px,#020dff 122px,#3800ff 162px,#5d00ff 186px,#5a00f4 187px,#3e00a4 188px,#3b0099 189px,#609 232px,#909 278px,#990084 299px)"></i><i style="background:linear-gradient(90deg,#001299 74px,#000d99 97px,#0010bb 98px,#0015ff 99px,#020dff 122px,#3700ff 162px,#5b00ff 185px,#5800f4 186px,#3c00a4 187px,#390099 188px,#650099 232px,#980099 278px,#990086 298px)"></i><i style="background:linear-gradient(90deg,#001299 74px,#000d99 98px,#0015ff 99px,#020dff 122px,#3500ff 161px,#5800ff 184px,#5600f4 185px,#3b00a4 186px,#380099 187px,#650099 232px,#980099 279px,#908 297px)"></i><i style="background:linear-gradient(90deg,#019 75px,#000c99 98px,#0014f4 99px,#0014ff 100px,#020cff 122px,#30f 160px,#5600ff 183px,#5400f4 184px,#3a00a4 185px,#360099 186px,#640099 232px,#909 280px,#990089 297px)"></i><i style="background:linear-gradient(90deg,#019 75px,#000c99 98px,#01d 99px,#0014ff 100px,#020cff 122px,#3200ff 159px,#5400ff 182px,#5200f4 183px,#3800a4 184px,#350099 185px,#640099 232px,#909 281px,#99008a 296px)"></i><i style="background:linear-gradient(90deg,#001099 76px,#000c99 98px,#000ebb 99px,#0013ff 100px,#010cff 122px,#3000ff 158px,#5200ff 181px,#5000f4 182px,#3700a4 183px,#340099 184px,#630099 232px,#980099 281px,#99008c 295px)"></i><i style="background:linear-gradient(90deg,#001099 76px,#000c99 98px,#000ca4 99px,#0013ff 100px,#010bff 122px,#2f00ff 158px,#5000ff 180px,#4e00f4 181px,#3500a4 182px,#309 183px,#620099 232px,#980099 282px,#99008e 294px)"></i><i style="background:linear-gradient(90deg,#001099 77px,#000b99 99px,#0013ff 100px,#010bff 122px,#2e00ff 157px,#4e00ff 179px,#4500dd 180px,#300099 181px,#610099 231px,#909 283px,#99008f 294px)"></i><i style="background:linear-gradient(90deg,#001099 77px,#000b99 99px,#0010dd 100px,#0012ff 101px,#010bff 122px,#2c00ff 156px,#4c00ff 178px,#4300dd 179px,#2f0099 180px,#600099 231px,#909 284px,#990091 293px)"></i><i style="background:linear-gradient(90deg,#000f99 78px,#000b99 99px,#000ec6 100px,#0012ff 101px,#010aff 122px,#2a00ff 155px,#4a00ff 177px,#4100dd 178px,#2e0099 179px,#600099 231px,#980099 284px,#990093 292px)"></i><i style="background:linear-gradient(90deg,#000f99 78px,#000b99 99px,#000cb0 100px,#01f 101px,#010aff 122px,#2a00ff 155px,#4800ff 176px,#3f00dd 177px,#2d0099 178px,#5f0099 231px,#980099 285px,#990094 291px)"></i><i style="background:linear-gradient(90deg,#000e99 79px,#000a99 100px,#01f 101px,#010aff 122px,#2800ff 154px,#4600ff 175px,#3e00dd 176px,#2c0099 177px,#5d0099 230px,#980099 286px,#990095 291px)"></i><i style="background:linear-gradient(90deg,#000e99 79px,#000a99 100px,#000fe8 101px,#0010ff 102px,#0109ff 123px,#2600ff 153px,#40f 174px,#3c00dd 175px,#2a0099 176px,#5d0099 230px,#909 287px,#990097 290px)"></i><i style="background:linear-gradient(90deg,#000e99 80px,#000a99 100px,#000dd2 101px,#0010ff 102px,#0109ff 123px,#2500ff 152px,#4200ff 173px,#3a00dd 174px,#290099 175px,#580099 226px,#909 289px)"></i><i style="background:linear-gradient(90deg,#000e99 80px,#000a99 100px,#000cbb 101px,#0010ff 102px,#0109ff 123px,#2400ff 152px,#4000ff 172px,#3900dd 173px,#280099 174px,#570099 225px,#970099 288px)"></i><i style="background:linear-gradient(90deg,#000d99 81px,#000999 101px,#000fff 102px,#0108ff 123px,#2300ff 151px,#3e00ff 171px,#2e00bb 172px,#270099 173px,#509 224px,#950099 287px)"></i><i style="background:linear-gradient(90deg,#000d99 81px,#000999 101px,#000ef4 102px,#000fff 103px,#0108ff 123px,#2100ff 150px,#3c00ff 170px,#2d00bb 171px,#260099 172px,#540099 223px,#940099 287px)"></i><i style="background:linear-gradient(90deg,#000d99 82px,#000999 101px,#000ddd 102px,#000eff 103px,#0108ff 123px,#1f00ff 149px,#3a00ff 169px,#2c00bb 170px,#250099 171px,#530099 222px,#920099 286px)"></i><i style="background:linear-gradient(90deg,#000c99 83px,#000999 101px,#000abb 102px,#000eff 103px,#0107ff 123px,#1f00ff 149px,#3800ff 168px,#2a00bb 169px,#240099 170px,#510099 221px,#900099 285px)"></i><i style="background:linear-gradient(90deg,#000c99 83px,#000999 101px,#0009a4 102px,#000eff 103px,#000dff 106px,#0107ff 123px,#1d00ff 148px,#3700ff 167px,#2900bb 168px,#209 169px,#500099 220px,#8e0099 284px)"></i><i style="background:linear-gradient(90deg,#000b99 84px,#000899 102px,#000dff 103px,#000aff 114px,#0007ff 122px,#0306ff 126px,#1c00ff 147px,#3500ff 166px,#2800bb 167px,#210099 168px,#4f0099 220px,#8e0099 284px)"></i><i style="background:linear-gradient(90deg,#000b99 84px,#000899 102px,#000bdd 103px,#000dff 104px,#000cff 106px,#0007ff 123px,#1a00ff 146px,#30f 165px,#2600bb 166px,#200099 167px,#4e0099 219px,#8c0099 283px)"></i><i style="background:linear-gradient(90deg,#000b99 85px,#000899 102px,#000ac6 103px,#000cff 104px,#000aff 110px,#0106ff 124px,#1a00ff 146px,#3100ff 164px,#2500bb 165px,#1f0099 166px,#4c0099 218px,#8a0099 282px)"></i><i style="background:linear-gradient(90deg,#000b99 85px,#000899 102px,#0009b0 103px,#000cff 104px,#000aff 111px,#0106ff 124px,#1900ff 145px,#2e00ff 162px,#2e00f4 163px,#2200b0 164px,#1e0099 165px,#4b0099 217px,#809 281px)"></i><i style="background:linear-gradient(90deg,#000a99 86px,#000799 103px,#000cff 104px,#000bff 107px,#0106ff 124px,#1700ff 144px,#2d00ff 161px,#2c00f4 162px,#1e00a4 163px,#1d0099 164px,#4a0099 216px,#809 281px)"></i><i style="background:linear-gradient(90deg,#000a99 86px,#000799 103px,#000ae8 104px,#000bff 105px,#000bff 107px,#0105ff 124px,#1600ff 143px,#2b00ff 160px,#2a00f4 161px,#1d00a4 162px,#1c0099 163px,#480099 215px,#860099 280px)"></i><i style="background:linear-gradient(90deg,#000a99 87px,#000799 103px,#0009d2 104px,#000bff 105px,#0105ff 124px,#1400ff 142px,#2900ff 159px,#2900f4 160px,#1c00a4 161px,#1b0099 162px,#470099 214px,#840099 279px)"></i><i style="background:linear-gradient(90deg,#000a99 87px,#000799 103px,#0008bb 104px,#000bff 105px,#0008ff 113px,#0105ff 124px,#1400ff 142px,#2800ff 158px,#2700f4 159px,#1b00a4 160px,#1a0099 161px,#460099 213px,#820099 278px)"></i><i style="background:linear-gradient(90deg,#000999 88px,#000699 104px,#000aff 105px,#0005ff 124px,#1300ff 141px,#2600ff 157px,#2600f4 158px,#1a00a4 159px,#190099 160px,#409 212px,#820099 278px)"></i><i style="background:linear-gradient(90deg,#000999 88px,#000699 104px,#000af4 105px,#000aff 106px,#0004ff 124px,#10f 140px,#2500ff 156px,#2400f4 157px,#1900a4 158px,#180099 159px,#430099 211px,#800099 277px)"></i><i style="background:linear-gradient(90deg,#000999 89px,#000699 104px,#0008dd 105px,#0009ff 106px,#0004ff 124px,#2300ff 155px,#2300f4 156px,#1800a4 157px,#170099 158px,#420099 210px,#7e0099 276px)"></i><i style="background:linear-gradient(90deg,#000899 90px,#000699 104px,#0007bb 105px,#0009ff 106px,#0008ff 109px,#0004ff 124px,#2100ff 154px,#2000e8 155px,#1700a4 156px,#160099 157px,#410099 209px,#7d0099 275px)"></i><i style="background:linear-gradient(90deg,#000899 90px,#000699 104px,#0006a4 105px,#0009ff 106px,#0005ff 120px,#0303ff 127px,#2000ff 153px,#1d00dd 154px,#150099 155px,#3f0099 208px,#7b0099 274px)"></i><i style="background:linear-gradient(90deg,#000899 91px,#000599 105px,#0009ff 106px,#0003ff 124px,#1e00ff 152px,#1b00dd 153px,#140099 154px,#3e0099 207px,#7a0099 274px)"></i><i style="background:linear-gradient(90deg,#000899 91px,#000599 105px,#0007dd 106px,#0008ff 107px,#0007ff 111px,#0103ff 125px,#1d00ff 151px,#1a00dd 152px,#130099 153px,#3d0099 206px,#790099 273px)"></i><i style="background:linear-gradient(90deg,#000799 92px,#000599 105px,#0006c6 106px,#0008ff 107px,#0004ff 119px,#0102ff 126px,#1c00ff 150px,#1900dd 151px,#120099 152px,#3c0099 205px,#709 272px)"></i><i style="background:linear-gradient(90deg,#000799 92px,#000599 105px,#0005b0 106px,#0008ff 107px,#0005ff 115px,#0002ff 125px,#1a00ff 149px,#1800dd 150px,#109 151px,#3a0099 204px,#760099 271px)"></i><i style="background:linear-gradient(90deg,#000799 93px,#000599 106px,#0007ff 107px,#0006ff 113px,#0002ff 125px,#1900ff 148px,#1600dd 149px,#100099 150px,#390099 203px,#750099 271px)"></i><i style="background:linear-gradient(90deg,#000699 93px,#000499 106px,#0006e8 107px,#0007ff 108px,#0004ff 116px,#0002ff 125px,#1700ff 147px,#1500dd 148px,#0f0099 149px,#380099 202px,#730099 270px)"></i><i style="background:linear-gradient(90deg,#000699 94px,#000499 106px,#0006d2 107px,#0006ff 108px,#0003ff 122px,#0201ff 127px,#1600ff 146px,#1300d2 147px,#0e0099 148px,#370099 201px,#720099 269px)"></i><i style="background:linear-gradient(90deg,#000699 95px,#000499 106px,#0005bb 107px,#0006ff 108px,#0002ff 125px,#1400ff 145px,#1000bb 146px,#0e0099 147px,#360099 200px,#700099 268px)"></i><i style="background:linear-gradient(90deg,#000699 95px,#000499 106px,#0004a4 107px,#0006ff 108px,#0001ff 125px,#1300ff 144px,#0f00bb 145px,#0d0099 146px,#350099 199px,#700099 268px)"></i><i style="background:linear-gradient(90deg,#000599 96px,#000499 107px,#0005f4 108px,#0005ff 109px,#0003ff 119px,#0101ff 126px,#1200ff 143px,#0e00bb 144px,#0c0099 145px,#340099 198px,#6e0099 267px)"></i><i style="background:linear-gradient(90deg,#000599 96px,#000399 107px,#0005dd 108px,#0005ff 109px,#0001ff 125px,#10f 142px,#0d00bb 143px,#0b0099 144px,#320099 197px,#6d0099 266px)"></i><i style="background:linear-gradient(90deg,#000599 97px,#000399 107px,#0004bb 108px,#0005ff 109px,#0003ff 116px,#0001ff 126px,#0f00ff 141px,#0c00bb 142px,#0a0099 143px,#310099 196px,#6b0099 265px)"></i><i style="background:linear-gradient(90deg,#000599 98px,#000399 107px,#0003b0 108px,#0005ff 109px,#0004ff 111px,#00f 126px,#0e00ff 140px,#0b00bb 141px,#0a0099 142px,#300099 195px,#6b0099 265px)"></i><i style="background:linear-gradient(90deg,#000499 98px,#000399 108px,#0005ff 109px,#0003ff 115px,#00f 126px,#0d00ff 139px,#0a00bb 140px,#090099 141px,#2f0099 194px,#690099 264px)"></i><i style="background:linear-gradient(90deg,#000499 99px,#000399 108px,#0004dd 109px,#0004ff 110px,#00f 126px,#0b00ff 138px,#0900bb 139px,#080099 140px,#2e0099 193px,#680099 263px)"></i><i style="background:linear-gradient(90deg,#000499 99px,#000399 108px,#0003c6 109px,#0004ff 110px,#00f 126px,#0900ff 136px,#0a00f4 137px,#0700a4 138px,#070099 139px,#2d0099 192px,#609 262px)"></i><i style="background:linear-gradient(90deg,#000499 100px,#000299 108px,#0003bb 109px,#0004ff 110px,#0001ff 120px,#00f 126px,#0800ff 135px,#0900f4 136px,#0700a4 137px,#070099 138px,#2c0099 191px,#650099 261px)"></i><i style="background:linear-gradient(90deg,#000399 101px,#000299 109px,#0003ff 110px,#00f 126px,#0700ff 134px,#0800f4 135px,#0600a4 136px,#060099 137px,#2b0099 190px,#640099 261px)"></i><i style="background:linear-gradient(90deg,#000399 101px,#000299 109px,#0003e8 110px,#0003ff 111px,#00f 126px,#0600ff 133px,#0600f4 134px,#0500a4 135px,#050099 136px,#2a0099 189px,#630099 260px)"></i><i style="background:linear-gradient(90deg,#000399 102px,#000299 109px,#0002d2 110px,#0003ff 111px,#00f 126px,#0500ff 132px,#0500f4 133px,#0400a4 134px,#050099 135px,#290099 188px,#620099 259px)"></i><i style="background:linear-gradient(90deg,#000399 102px,#000299 109px,#0002bb 110px,#0002ff 111px,#00f 126px,#0400ff 131px,#0400f4 132px,#0400a4 133px,#040099 134px,#280099 187px,#600099 258px)"></i><i style="background:linear-gradient(90deg,#000299 103px,#000299 109px,#0002a4 110px,#0002ff 111px,#00f 119px,#0300ff 130px,#0300f4 131px,#0300a4 132px,#030099 133px,#270099 186px,#600099 258px)"></i><i style="background:linear-gradient(90deg,#000299 104px,#000199 110px,#0002f4 111px,#0002ff 112px,#0200ff 129px,#0200f4 130px,#0200a4 131px,#030099 132px,#260099 185px,#5e0099 257px)"></i><i style="background:linear-gradient(90deg,#000299 104px,#000199 110px,#0002dd 111px,#0002ff 112px,#0001ff 116px,#0100ff 128px,#0100dd 129px,#0200a4 130px,#020099 131px,#240099 183px,#5d0099 256px)"></i><i style="background:linear-gradient(90deg,#000299 105px,#000199 110px,#0001bb 111px,#0001ff 112px,#00f 127px,#0100dd 128px,#010099 129px,#230099 181px,#5c0099 255px)"></i><i style="background:linear-gradient(90deg,#000299 105px,#000199 110px,#0001b0 111px,#0001ff 112px,#00f 126px,#00d 127px,#009 128px,#209 180px,#5b0099 255px)"></i><i style="background:linear-gradient(90deg,#000199 106px,#000199 111px,#0001ff 112px,#00f 125px,#00d 126px,#009 127px,#200099 178px,#5a0099 254px)"></i><i style="background:linear-gradient(90deg,#000199 107px,#000199 111px,#0001dd 112px,#0001ff 113px,#00f 117px,#00f 124px,#00d 125px,#009 126px,#1d0099 174px,#590099 253px)"></i><i style="background:linear-gradient(90deg,#000199 107px,#000199 111px,#0001c6 112px,#0001ff 113px,#00f 123px,#00d 124px,#009 125px,#050099 138px,#1b0099 171px,#580099 252px)"></i><i style="background:linear-gradient(90deg,#000199 108px,#009 111px,#00b 112px,#00f 113px,#00f 122px,#00d 123px,#009 124px,#040099 135px,#190099 168px,#560099 251px)"></i><i style="background:linear-gradient(90deg,#000199 109px,#009 112px,#00f 113px,#00f 116px,#00f 121px,#00d 122px,#009 123px,#030099 133px,#160099 165px,#560099 251px)"></i><i style="background:linear-gradient(90deg,#009 109px,#009 112px,#0000e8 113px,#00f 114px,#00f 120px,#0000c6 121px,#009 122px,#010099 131px,#140099 162px,#509 250px)"></i><i style="background:linear-gradient(90deg,#009 110px,#009 112px,#0000d2 113px,#00f 114px,#00f 119px,#00b 120px,#009 121px,#010099 130px,#130099 160px,#530099 249px)"></i><i style="background:linear-gradient(90deg,#009 110px,#009 112px,#00b 113px,#00f 114px,#00f 118px,#00b 119px,#009 120px,#009 129px,#109 157px,#520099 248px)"></i><i style="background:linear-gradient(90deg,#009 111px,#009 112px,#0000a4 113px,#00f 114px,#00f 117px,#00b 118px,#009 119px,#009 129px,#0f0099 155px,#520099 248px)"></i><i style="background:linear-gradient(90deg,#009 112px,#009 113px,#0000f4 114px,#00f 115px,#00f 116px,#00b 117px,#009 118px,#009 129px,#0e0099 153px,#510099 247px)"></i><i style="background:linear-gradient(90deg,#009 112px,#009 113px,#00d 114px,#00f 115px,#00b 116px,#009 117px,#009 129px,#0c0099 151px,#4f0099 246px)"></i><i style="background:linear-gradient(90deg,#00b 113px,#00b 115px,#009 116px,#009 129px,#0b0099 149px,#4e0099 245px)"></i><i style="background:linear-gradient(90deg,#009 114px,#009 129px,#090099 146px,#4e0099 245px)"></i><i style="background:linear-gradient(90deg,#009 114px,#009 129px,#090099 146px,#4d0099 244px)"></i><i style="background:linear-gradient(90deg,#009 115px,#009 129px,#0a0099 147px,#4b0099 243px)"></i><i style="background:linear-gradient(90deg,#009 116px,#009 130px,#090099 147px,#4a0099 242px)"></i><i style="background:linear-gradient(90deg,#009 116px,#009 130px,#090099 147px,#4a0099 242px)"></i><i style="background:linear-gradient(90deg,#009 117px,#009 130px,#0a0099 148px,#490099 241px)"></i><i style="background:linear-gradient(90deg,#009 118px,#009 130px,#0a0099 149px,#480099 240px)"></i><i style="background:linear-gradient(90deg,#009 118px,#009 130px,#0a0099 149px,#470099 239px)"></i><i style="background:linear-gradient(90deg,#009 119px,#009 130px,#0a0099 149px,#460099 238px)"></i><i style="background:linear-gradient(90deg,#009 120px,#009 131px,#0b0099 151px,#450099 238px)"></i><i style="background:linear-gradient(90deg,#009 121px,#009 131px,#0c0099 152px,#409 237px)"></i><i style="background:linear-gradient(90deg,#009 121px,#009 131px,#0b0099 151px,#430099 236px)"></i><i style="background:linear-gradient(90deg,#009 122px,#009 131px,#0b0099 152px,#420099 235px)"></i><i style="background:linear-gradient(90deg,#009 123px,#009 131px,#0c0099 154px,#420099 235px)"></i><i style="background:linear-gradient(90deg,#009 124px,#010099 132px,#0d0099 155px,#410099 234px)"></i><i style="background:linear-gradient(90deg,#009 124px,#009 132px,#0c0099 154px,#400099 233px)"></i><i style="background:linear-gradient(90deg,#009 125px,#009 132px,#0d0099 156px,#3f0099 232px)"></i><i style="background:linear-gradient(90deg,#009 126px,#010099 133px,#0e0099 157px,#3e0099 232px)"></i><i style="background:linear-gradient(90deg,#009 127px,#010099 134px,#0f0099 159px,#3d0099 231px)"></i><i style="background:linear-gradient(90deg,#009 127px,#010099 134px,#0e0099 158px,#3c0099 230px)"></i><i style="background:linear-gradient(90deg,#009 128px,#0f0099 160px,#3b0099 229px)"></i><i style="background:linear-gradient(90deg,#009 129px,#100099 162px,#3b0099 229px)"></i><i style="background:linear-gradient(90deg,#009 130px,#109 164px,#3a0099 228px)"></i><i style="background:linear-gradient(90deg,#009 130px,#100099 163px,#390099 227px)"></i><i style="background:linear-gradient(90deg,#009 131px,#120099 165px,#380099 226px)"></i><i style="background:linear-gradient(90deg,#009 132px,#109 165px,#370099 225px)"></i><i style="background:linear-gradient(90deg,#010099 133px,#120099 166px,#370099 225px)"></i><i style="background:linear-gradient(90deg,#010099 134px,#120099 167px,#360099 224px)"></i><i style="background:linear-gradient(90deg,#010099 135px,#120099 167px,#350099 223px)"></i><i style="background:linear-gradient(90deg,#010099 135px,#340099 222px)"></i><i style="background:linear-gradient(90deg,#020099 136px,#340099 222px)"></i><i style="background:linear-gradient(90deg,#020099 137px,#309 221px)"></i><i style="background:linear-gradient(90deg,#030099 138px,#320099 220px)"></i><i style="background:linear-gradient(90deg,#030099 139px,#310099 219px)"></i><i style="background:linear-gradient(90deg,#030099 140px,#310099 219px)"></i><i style="background:linear-gradient(90deg,#040099 141px,#300099 218px)"></i><i style="background:linear-gradient(90deg,#040099 141px,#2f0099 217px)"></i><i style="background:linear-gradient(90deg,#040099 142px,#2e0099 216px)"></i><i style="background:linear-gradient(90deg,#050099 143px,#2e0099 216px)"></i><i style="background:linear-gradient(90deg,#050099 144px,#2d0099 215px)"></i><i style="background:linear-gradient(90deg,#050099 145px,#2c0099 214px)"></i><i style="background:linear-gradient(90deg,#060099 146px,#2b0099 213px)"></i><i style="background:linear-gradient(90deg,#060099 147px,#2a0099 212px)"></i><i style="background:linear-gradient(90deg,#070099 148px,#2a0099 212px)"></i><i style="background:linear-gradient(90deg,#070099 149px,#290099 211px)"></i><i style="background:linear-gradient(90deg,#080099 150px,#290099 210px)"></i><i style="background:linear-gradient(90deg,#080099 151px,#280099 209px)"></i><i style="background:linear-gradient(90deg,#080099 152px,#270099 209px)"></i><i style="background:linear-gradient(90deg,#090099 153px,#270099 208px)"></i><i style="background:linear-gradient(90deg,#090099 153px,#260099 207px)"></i><i style="background:linear-gradient(90deg,#090099 154px,#250099 206px)"></i><i style="background:linear-gradient(90deg,#0a0099 155px,#250099 206px)"></i><i style="background:linear-gradient(90deg,#0a0099 156px,#240099 205px)"></i><i style="background:linear-gradient(90deg,#0a0099 157px,#230099 204px)"></i><i style="background:linear-gradient(90deg,#0b0099 158px,#230099 203px)"></i><i style="background:linear-gradient(90deg,#0b0099 159px,#209 202px)"></i><i style="background:linear-gradient(90deg,#0c0099 160px,#209 202px)"></i><i style="background:linear-gradient(90deg,#0c0099 161px,#210099 201px)"></i><i style="background:linear-gradient(90deg,#0c0099 162px,#200099 200px)"></i><i style="background:linear-gradient(90deg,#0d0099 163px,#1f0099 199px)"></i><i style="background:linear-gradient(90deg,#0d0099 164px,#1f0099 199px)"></i><i style="background:linear-gradient(90deg,#0e0099 165px,#1e0099 198px)"></i><i style="background:linear-gradient(90deg,#0e0099 166px,#1e0099 197px)"></i><i style="background:linear-gradient(90deg,#0e0099 167px,#1d0099 196px)"></i><i style="background:linear-gradient(90deg,#0f0099 168px,#1d0099 196px)"></i><i style="background:linear-gradient(90deg,#0f0099 169px,#1c0099 195px)"></i><i style="background:linear-gradient(90deg,#100099 170px,#1b0099 194px)"></i><i style="background:linear-gradient(90deg,#100099 171px,#1b0099 193px)"></i><i style="background:linear-gradient(90deg,#100099 172px,#1b0099 193px)"></i><i style="background:linear-gradient(90deg,#100099 172px,#1a0099 192px)"></i><i style="background:linear-gradient(90deg,#109 173px,#190099 191px)"></i><i style="background:linear-gradient(90deg,#109 174px,#190099 190px)"></i><i style="background:linear-gradient(90deg,#120099 175px,#180099 189px)"></i><i style="background:linear-gradient(90deg,#120099 176px,#180099 189px)"></i><i style="background:linear-gradient(90deg,#120099 177px,#170099 188px)"></i><i style="background:linear-gradient(90deg,#130099 178px,#160099 187px)"></i><i style="background:linear-gradient(90deg,#130099 179px,#160099 186px)"></i><i style="background:linear-gradient(90deg,#140099 181px,#160099 186px)"></i></div>
</div>
<svg class="ov" viewBox="0 0 1440 808">
<rect x="478" y="474" width="1" height="4"/>
<text x="478.5" y="492" text-anchor="middle">0</text>
<rect x="538" y="474" width="1" height="4"/>
<text x="538.5" y="492" text-anchor="middle">0,1</text>
<rect x="598" y="474" width="1" height="4"/>
<text x="598.5" y="492" text-anchor="middle">0,2</text>
<rect x="658" y="474" width="1" height="4"/>
<text x="658.5" y="492" text-anchor="middle">0,3</text>
<rect x="717" y="474" width="1" height="4"/>
<text x="717.5" y="492" text-anchor="middle">0,4</text>
<rect x="777" y="474" width="1" height="4"/>
<text x="777.5" y="492" text-anchor="middle">0,5</text>
<rect x="837" y="474" width="1" height="4"/>
<text x="837.5" y="492" text-anchor="middle">0,6</text>
<rect x="897" y="474" width="1" height="4"/>
<text x="897.5" y="492" text-anchor="middle">0,7</text>
<rect x="473" y="473" width="5" height="1"/>
<text x="472.7" y="478" text-anchor="end">0</text>
<rect x="473" y="422" width="5" height="1"/>
<text x="472.7" y="427" text-anchor="end">0,1</text>
<rect x="473" y="372" width="5" height="1"/>
<text x="472.7" y="377" text-anchor="end">0,2</text>
<rect x="473" y="322" width="5" height="1"/>
<text x="472.7" y="327" text-anchor="end">0,3</text>
<rect x="473" y="271" width="5" height="1"/>
<text x="472.7" y="276" text-anchor="end">0,4</text>
<rect x="473" y="220" width="5" height="1"/>
<text x="472.7" y="225" text-anchor="end">0,5</text>
<rect x="473" y="170" width="5" height="1"/>
<text x="472.7" y="175" text-anchor="end">0,6</text>
<rect x="473" y="120" width="5" height="1"/>
<text x="472.7" y="125" text-anchor="end">0,7</text>
<rect x="473" y="69" width="5" height="1"/>
<text x="472.7" y="74" text-anchor="end">0,8</text>
<text x="687.7" y="43.5" text-anchor="middle" class="tt">CIE 1931 xy</text>
<rect class="ms" x="897.5" y="318.5" width="12" height="12"/>
<circle class="mc" cx="876.0" cy="316.8" r="3.9"/>
<rect class="ms" x="573.5" y="63.5" width="12" height="12"/>
<circle class="mc" cx="641.4" cy="136.5" r="3.9"/>
<rect class="ms" x="549.5" y="442.5" width="12" height="12"/>
<circle class="mc" cx="570.3" cy="442.3" r="3.9"/>
<rect class="ms" x="559.5" y="291.5" width="12" height="12"/>
<circle class="mc" cx="602.6" cy="303.6" r="3.9"/>
<rect class="ms" x="693.5" y="392.5" width="12" height="12"/>
<circle class="mc" cx="675.5" cy="404.0" r="3.9"/>
<rect class="ms" x="739.5" y="194.5" width="12" height="12"/>
<circle class="mc" cx="729.9" cy="204.2" r="3.9"/>
<rect class="mk" x="659.7" y="300.9" width="10.9" height="10.9"/>
<circle class="mw" cx="661.4" cy="306.5" r="3.9"/>
<rect x="978" y="474" width="1" height="4"/>
<text x="978.5" y="492" text-anchor="middle">0</text>
<rect x="1050" y="474" width="1" height="4"/>
<text x="1050.5" y="492" text-anchor="middle">0,1</text>
<rect x="1122" y="474" width="1" height="4"/>
<text x="1122.5" y="492" text-anchor="middle">0,2</text>
<rect x="1194" y="474" width="1" height="4"/>
<text x="1194.5" y="492" text-anchor="middle">0,3</text>
<rect x="1267" y="474" width="1" height="4"/>
<text x="1267.5" y="492" text-anchor="middle">0,4</text>
<rect x="1340" y="474" width="1" height="4"/>
<text x="1340.5" y="492" text-anchor="middle">0,5</text>
<rect x="973" y="473" width="5" height="1"/>
<text x="972.7" y="478" text-anchor="end">0</text>
<rect x="973" y="438" width="5" height="1"/>
<text x="972.7" y="443" text-anchor="end">0,05</text>
<rect x="973" y="402" width="5" height="1"/>
<text x="972.7" y="407" text-anchor="end">0,1</text>
<rect x="973" y="367" width="5" height="1"/>
<text x="972.7" y="372" text-anchor="end">0,15</text>
<rect x="973" y="332" width="5" height="1"/>
<text x="972.7" y="337" text-anchor="end">0,2</text>
<rect x="973" y="296" width="5" height="1"/>
<text x="972.7" y="301" text-anchor="end">0,25</text>
<rect x="973" y="261" width="5" height="1"/>
<text x="972.7" y="266" text-anchor="end">0,3</text>
<rect x="973" y="226" width="5" height="1"/>
<text x="972.7" y="231" text-anchor="end">0,35</text>
<rect x="973" y="190" width="5" height="1"/>
<text x="972.7" y="195" text-anchor="end">0,4</text>
<rect x="973" y="155" width="5" height="1"/>
<text x="972.7" y="160" text-anchor="end">0,45</text>
<rect x="973" y="120" width="5" height="1"/>
<text x="972.7" y="125" text-anchor="end">0,5</text>
<rect x="973" y="84" width="5" height="1"/>
<text x="972.7" y="89" text-anchor="end">0,55</text>
<text x="1180.8" y="43.5" text-anchor="middle" class="tt">CIE 1976 u'v'</text>
<rect class="ms" x="1374.5" y="100.5" width="12" height="12"/>
<circle class="mc" cx="1338.0" cy="107.9" r="3.9"/>
<rect class="ms" x="1012.5" y="50.5" width="12" height="12"/>
<circle class="mc" cx="1054.0" cy="67.0" r="3.9"/>
<rect class="ms" x="1087.5" y="376.5" width="12" height="12"/>
<circle class="mc" cx="1110.2" cy="362.4" r="3.9"/>
<rect class="ms" x="1033.5" y="145.5" width="12" height="12"/>
<circle class="mc" cx="1069.9" cy="150.2" r="3.9"/>
<rect class="ms" x="1236.5" y="233.5" width="12" height="12"/>
<circle class="mc" cx="1217.5" cy="254.5" r="3.9"/>
<rect class="ms" x="1122.5" y="65.5" width="12" height="12"/>
<circle class="mc" cx="1120.8" cy="76.6" r="3.9"/>
<rect class="mk" x="1114.6" y="135.4" width="11.7" height="11.7"/>
<circle class="mw" cx="1118.0" cy="142.1" r="3.9"/>
</svg>

<div class="tb">
<div class="th"></div>
<span class="h" style="left:150.3px;top:4px">White</span>
<span class="h" style="left:213.5px;top:4px">Red</span>
<span class="h" style="left:276.7px;top:4px">Green</span>
<span class="h" style="left:336px;top:4px">Blue</span>
<span class="h" style="left:395.6px;top:4px">Cyan</span>
<span class="h" style="left:458.6px;top:4px">Magenta</span>
<span class="h" style="left:522.2px;top:4px">Yellow</span>
<span class="h" style="left:585.5px;top:4px">100W</span>
<div class="tr d" style="top:24px;height:23px"></div>
<span class="b" style="left:9.5px;top:28px;letter-spacing:.2px">Target Y cd/m<sup>2</sup></span>
<span style="left:122.2px;top:28px">861,8591</span>
<span style="left:185.6px;top:28px">226,4199</span>
<span style="left:249.1px;top:28px">584,3337</span>
<span style="left:311.7px;top:28px">51,1055</span>
<span style="left:367.7px;top:28px">635,4392</span>
<span style="left:431.2px;top:28px">277,5254</span>
<span style="left:494.2px;top:28px">810,7536</span>
<span style="left:557.2px;top:28px">861,8591</span>
<div class="tr l" style="top:47px;height:22px"></div>
<span class="b" style="left:9.5px;top:50.3px;letter-spacing:.2px">Y cd/m<sup>2</sup></span>
<span style="left:122.2px;top:50.3px">861,8591</span>
<span style="left:185.6px;top:50.3px">171,5444</span>
<span style="left:249.1px;top:50.3px">626,7532</span>
<span style="left:311.7px;top:50.3px">58,3991</span>
<span style="left:367.7px;top:50.3px">673,2240</span>
<span style="left:431.2px;top:50.3px">220,4028</span>
<span style="left:494.2px;top:50.3px">784,3052</span>
<span style="left:557.2px;top:50.3px">861,8591</span>
<div class="tr d" style="top:69px;height:22px"></div>
<span class="b" style="left:9.5px;top:73px">Target x:CIE31</span>
<span style="left:122.2px;top:73px">0,3127</span>
<span style="left:185.6px;top:73px">0,7080</span>
<span style="left:249.1px;top:73px">0,1700</span>
<span style="left:311.7px;top:73px">0,1310</span>
<span style="left:367.7px;top:73px">0,1465</span>
<span style="left:431.2px;top:73px">0,3682</span>
<span style="left:494.2px;top:73px">0,4465</span>
<span style="left:557.2px;top:73px">0,3127</span>
<div class="tr l" style="top:91px;height:22px"></div>
<span class="b" style="left:9.5px;top:95px">Target y:CIE31</span>
<span style="left:122.2px;top:95px">0,3290</span>
<span style="left:185.6px;top:95px">0,2920</span>
<span style="left:249.1px;top:95px">0,7970</span>
<span style="left:311.7px;top:95px">0,0460</span>
<span style="left:367.7px;top:95px">0,3446</span>
<span style="left:431.2px;top:95px">0,1471</span>
<span style="left:494.2px;top:95px">0,5374</span>
<span style="left:557.2px;top:95px">0,3290</span>
<div class="tr d" style="top:113px;height:22.400000000000006px"></div>
<span class="b" style="left:9.5px;top:117px">x: CIE31</span>
<span style="left:122.2px;top:117px">0,3064</span>
<span style="left:185.6px;top:117px">0,6646</span>
<span style="left:249.1px;top:117px">0,2728</span>
<span style="left:311.7px;top:117px">0,1548</span>
<span style="left:367.7px;top:117px">0,2084</span>
<span style="left:431.2px;top:117px">0,3288</span>
<span style="left:494.2px;top:117px">0,4198</span>
<span style="left:557.2px;top:117px">0,3064</span>
<div class="tr l" style="top:135.4px;height:22.599999999999994px"></div>
<span class="b" style="left:9.5px;top:139.3px">y: CIE31</span>
<span style="left:122.2px;top:139.3px">0,3282</span>
<span style="left:185.6px;top:139.3px">0,3062</span>
<span style="left:249.1px;top:139.3px">0,6642</span>
<span style="left:311.7px;top:139.3px">0,0587</span>
<span style="left:367.7px;top:139.3px">0,3333</span>
<span style="left:431.2px;top:139.3px">0,1362</span>
<span style="left:494.2px;top:139.3px">0,5300</span>
<span style="left:557.2px;top:139.3px">0,3282</span>
<div class="sb"><div style="position:absolute;left:0;top:0;width:13.5px;height:13px;background:linear-gradient(#808080,#727272);border-radius:1.5px"></div><div style="position:absolute;left:0.5px;top:14.5px;width:12.5px;height:64.5px;background:#464646;border-radius:5px"></div><div style="position:absolute;left:0;top:127px;width:13.5px;height:11.5px;background:linear-gradient(#808080,#727272);border-radius:1.5px"></div><svg style="position:absolute;left:0;top:0" width="14" height="139"><path d="M2.6 9.3 L6.9 4.9 L11.2 9.3Z M2.6 130 L11.2 130 L6.9 134.6Z" style="fill:#3c3c3c"/></svg></div>
</div>
<div class="tab sel" style="left:1.0px"><b style="background:#fff"></b><span>White</span></div>
<div class="tab" style="left:140.4px"><b style="background:#f00"></b><span>Red</span></div>
<div class="tab" style="left:279.8px"><b style="background:#0f0"></b><span>Green</span></div>
<div class="tab" style="left:419.2px"><b style="background:#00f"></b><span>Blue</span></div>
<div class="tab" style="left:558.6px"><b style="background:#0ff"></b><span>Cyan</span></div>
<div class="tab" style="left:698.0px"><b style="background:#f0f"></b><span>Magenta</span></div>
<div class="tab" style="left:837.4px"><b style="background:#ff0"></b><span>Yellow</span></div>
<div class="tab" style="left:976.8px"><b style="background:#fff"></b><span>100W</span></div>
<div class="abs" style="left:1116px;top:749px;width:321px;height:59px;background:#262626;border-radius:4px 0 0 0"></div>
<div class="cb" style="left:1117px;top:749px;width:48px;height:18.2px;border-radius:4px 4px 0 0"><div class="rd" style="left:17.2px;top:1.8px;width:14.4px;height:14.4px"></div></div>
<div class="cb" style="left:1117px;top:768.2px;width:48px;height:40px"></div>
<div class="cb" style="left:1166px;top:749px;width:45.8px;height:30px"></div>
<div class="cb" style="left:1213px;top:749px;width:43.8px;height:30px"></div>
<div class="cb" style="left:1258px;top:749px;width:43.8px;height:30px"></div>
<div class="cb" style="left:1303px;top:749px;width:43.3px;height:30px"></div>
<div class="abs" style="left:1347.5px;top:749px;width:44.8px;height:30px;background:linear-gradient(#3e3e3e,#2f2f2f)"></div>
<div class="cb" style="left:1393.5px;top:749px;width:44.0px;height:30px"></div>
<div class="cb" style="left:1166px;top:780.3px;width:135.8px;height:28px;border-radius:4px 0 0 0"></div>
<div class="cb" style="left:1303px;top:780.3px;width:134.5px;height:28px"></div>
<div class="rd" style="left:1178.8px;top:754.2px;width:20px;height:20px"></div>
<div class="rd" style="left:1225.2px;top:754.2px;width:20px;height:20px"></div>
<div class="rd" style="left:1270px;top:754.2px;width:20px;height:20px"></div>
<div class="rd" style="left:1314.9px;top:754.2px;width:20px;height:20px"></div>
<div class="rd dk" style="left:1360.1px;top:754.2px;width:20px;height:20px"></div>
<div class="rd" style="left:1405.8px;top:754.2px;width:20px;height:20px"></div>
<div class="rd" style="left:1186.6px;top:784.9px;width:20px;height:20px"></div>
<div class="rd" style="left:1400.5px;top:785.3px;width:20px;height:20px"></div>
<svg class="ov" viewBox="0 0 1440 808" style="z-index:5">
<path d="M1137.7 759.9 L1141.4 755.9 L1145.1 759.9Z" style="fill:#303030"/>
<rect x="1126.5" y="774.7" width="28" height="28" rx="3.5" style="fill:#858585;stroke:#1c1c1c;stroke-width:2.2"/>
<rect x="1134.2" y="782.3" width="13.4" height="13.2" style="fill:#000"/>
<rect x="1127.6" y="775.8" width="25.8" height="13.2" rx="2" style="fill:rgba(255,255,255,.2)"/>
<rect x="1184.9" y="760" width="8.2" height="8.2" style="fill:#303030"/>
<path d="M1232.1 760 L1240.4 764.6 L1232.1 769.2Z" style="fill:#2a2a2a"/>
<g style="fill:none;stroke:#2a2a2a;stroke-width:1.5">
<path d="M1277.6 759.8 H1275.4 V768.6 H1277.6 M1282.4 759.8 H1284.6 V768.6 H1282.4"/>
<path d="M1196.3 790.6 L1192.3 795.3 L1196.6 800 M1201.1 790.6 L1197.1 795.3 L1201.4 800" style="stroke-width:1.4"/>
<path d="M1405.6 790.9 L1409.6 795.6 L1405.3 800.3 M1410.4 790.9 L1414.4 795.6 L1410.1 800.3" style="stroke-width:1.4"/>
<path d="M1324.9 764.4 C1323.4 761.6 1319.2 761.6 1319.2 764.4 C1319.2 767.2 1323.4 767.2 1324.9 764.4 C1326.4 761.6 1330.6 761.6 1330.6 764.4 C1330.6 767.2 1326.4 767.2 1324.9 764.4Z" style="stroke-width:1.6"/>
<path d="M1366.2 763.2 A4.2 4.2 0 0 1 1373.6 761.8 M1374 765.4 A4.2 4.2 0 0 1 1366.6 766.8" style="stroke:#141414;stroke-width:1.9"/>
</g>
<path d="M1372.2 759.6 L1375.6 763.4 L1371 763.6Z M1368 769 L1364.6 765.2 L1369.2 765Z" style="fill:#141414"/>
<rect x="1278.6" y="763.6" width="1.4" height="1.6" style="fill:#2a2a2a"/><rect x="1280.6" y="763.6" width="1.4" height="1.6" style="fill:#2a2a2a"/>
</svg>
<div class="big" id="t5" style="left:1221.80px;top:786.2px;font-size:21.5px;transform:scaleX(1.1001);color:#2c2c2c;-webkit-text-stroke:.45px #2c2c2c;text-shadow:0 1px 0 rgba(255,255,255,.12)">Back</div>
<div class="big" id="t6" style="left:1329.00px;top:786.2px;font-size:21.5px;transform:scaleX(1.2001);color:#2c2c2c;-webkit-text-stroke:.45px #2c2c2c;text-shadow:0 1px 0 rgba(255,255,255,.12)">Next</div>
</body></html>
